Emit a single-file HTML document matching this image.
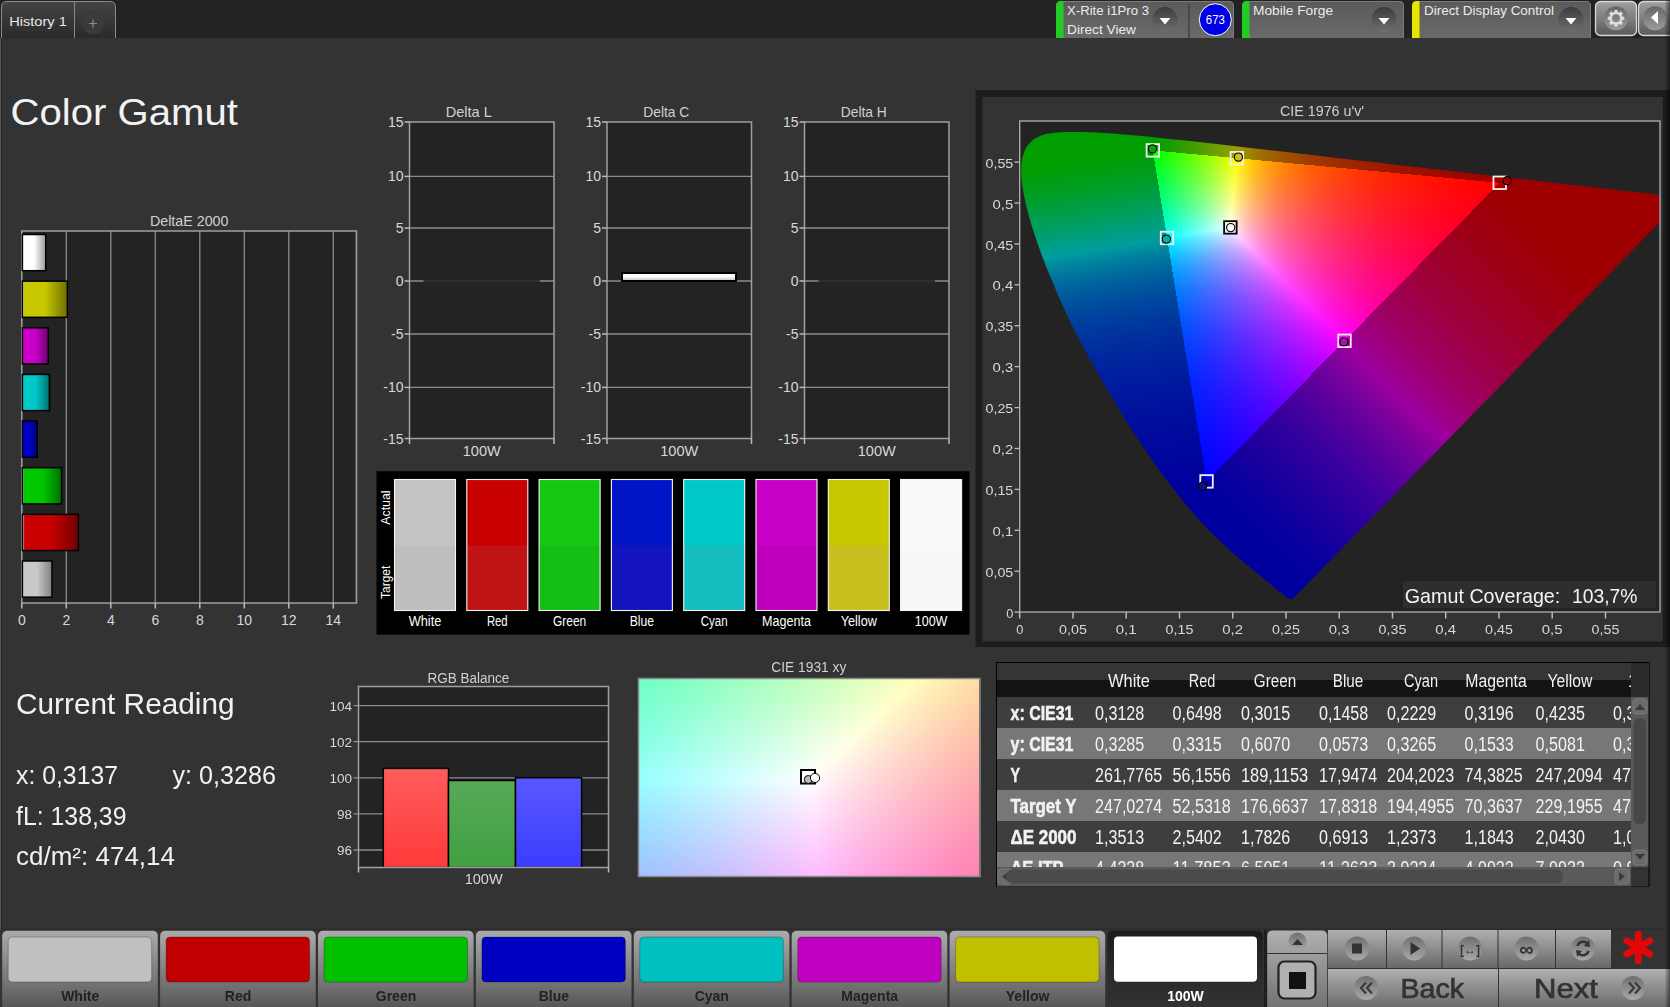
<!DOCTYPE html>
<html><head><meta charset="utf-8"><style>
html,body{margin:0;padding:0;background:#333;width:1670px;height:1007px;overflow:hidden;}
svg{position:absolute;left:0;top:0;font-family:"Liberation Sans", sans-serif;}
canvas{position:absolute;}
</style></head><body>
<svg width="1670" height="1007" viewBox="0 0 1670 1007"><defs>
<linearGradient id="gTab" x1="0" y1="0" x2="0" y2="1"><stop offset="0" stop-color="#444"/><stop offset="1" stop-color="#2a2a2a"/></linearGradient>
<linearGradient id="gDev" x1="0" y1="0" x2="0" y2="1"><stop offset="0" stop-color="#5a5a5a"/><stop offset="1" stop-color="#6a6a6a"/></linearGradient>
<linearGradient id="gDD" x1="0" y1="0" x2="0" y2="1"><stop offset="0" stop-color="#3c3c3c"/><stop offset="1" stop-color="#6e6e6e"/></linearGradient>
<linearGradient id="gDDl" x1="0" y1="0" x2="0" y2="1"><stop offset="0" stop-color="#707070"/><stop offset="1" stop-color="#a8a8a8"/></linearGradient>
<linearGradient id="gBtn" x1="0" y1="0" x2="0" y2="1"><stop offset="0" stop-color="#ababab"/><stop offset="0.72" stop-color="#6e6e6e"/><stop offset="0.95" stop-color="#575757"/></linearGradient>
<linearGradient id="gCtl" x1="0" y1="0" x2="0" y2="1"><stop offset="0" stop-color="#b0b0b0"/><stop offset="1" stop-color="#686868"/></linearGradient>
<linearGradient id="gSel" x1="0" y1="0" x2="0" y2="1"><stop offset="0" stop-color="#1c1c1c"/><stop offset="0.5" stop-color="#2a2a2a"/><stop offset="1" stop-color="#333"/></linearGradient>
<linearGradient id="gDC" x1="0" y1="0" x2="0" y2="1"><stop offset="0" stop-color="#fff"/><stop offset="0.5" stop-color="#fafafa"/><stop offset="1" stop-color="#b8b8b8"/></linearGradient>
<linearGradient id="gGB" x1="0" y1="0" x2="0" y2="1"><stop offset="0" stop-color="#a0a0a0"/><stop offset="1" stop-color="#5a5a5a"/></linearGradient>
<linearGradient id="gGC" x1="0" y1="0" x2="0" y2="1"><stop offset="0" stop-color="#666"/><stop offset="1" stop-color="#9c9c9c"/></linearGradient>
<linearGradient id="gRS" x1="0" y1="0" x2="1" y2="0"><stop offset="0" stop-color="#000" stop-opacity="0"/><stop offset="1" stop-color="#000" stop-opacity="0.5"/></linearGradient>
<linearGradient id="gBar0" x1="0" y1="0" x2="1" y2="0"><stop offset="0" stop-color="#fff" stop-opacity="0.9"/><stop offset="0.04" stop-color="#ffffff"/><stop offset="0.5" stop-color="#ffffff"/><stop offset="1" stop-color="#9a9a9a"/></linearGradient><linearGradient id="gBar1" x1="0" y1="0" x2="1" y2="0"><stop offset="0" stop-color="#fff" stop-opacity="0.9"/><stop offset="0.04" stop-color="#c8c800"/><stop offset="0.5" stop-color="#c8c800"/><stop offset="1" stop-color="#6e6e00"/></linearGradient><linearGradient id="gBar2" x1="0" y1="0" x2="1" y2="0"><stop offset="0" stop-color="#fff" stop-opacity="0.9"/><stop offset="0.04" stop-color="#c800c8"/><stop offset="0.5" stop-color="#c800c8"/><stop offset="1" stop-color="#700070"/></linearGradient><linearGradient id="gBar3" x1="0" y1="0" x2="1" y2="0"><stop offset="0" stop-color="#fff" stop-opacity="0.9"/><stop offset="0.04" stop-color="#00c8c8"/><stop offset="0.5" stop-color="#00c8c8"/><stop offset="1" stop-color="#007070"/></linearGradient><linearGradient id="gBar4" x1="0" y1="0" x2="1" y2="0"><stop offset="0" stop-color="#fff" stop-opacity="0.9"/><stop offset="0.04" stop-color="#0000c8"/><stop offset="0.5" stop-color="#0000c8"/><stop offset="1" stop-color="#000070"/></linearGradient><linearGradient id="gBar5" x1="0" y1="0" x2="1" y2="0"><stop offset="0" stop-color="#fff" stop-opacity="0.9"/><stop offset="0.04" stop-color="#00c800"/><stop offset="0.5" stop-color="#00c800"/><stop offset="1" stop-color="#007000"/></linearGradient><linearGradient id="gBar6" x1="0" y1="0" x2="1" y2="0"><stop offset="0" stop-color="#fff" stop-opacity="0.9"/><stop offset="0.04" stop-color="#c80000"/><stop offset="0.5" stop-color="#c80000"/><stop offset="1" stop-color="#700000"/></linearGradient><linearGradient id="gBar7" x1="0" y1="0" x2="1" y2="0"><stop offset="0" stop-color="#fff" stop-opacity="0.9"/><stop offset="0.04" stop-color="#c8c8c8"/><stop offset="0.5" stop-color="#c8c8c8"/><stop offset="1" stop-color="#808080"/></linearGradient></defs><rect x="0" y="0" width="1670" height="38" fill="#222"/><rect x="0" y="38" width="1" height="892" fill="#555"/><rect x="1" y="38" width="1" height="892" fill="#262626"/><path d="M1.5,38 V7 Q1.5,1.5 7,1.5 H110 Q115.5,1.5 115.5,7 V38" fill="url(#gTab)" stroke="#8a8a8a" stroke-width="1"/><line x1="74.5" y1="2" x2="74.5" y2="38" stroke="#8a8a8a" stroke-width="1"/><circle cx="93" cy="22" r="12" fill="#3a3a3a"/><path d="M89,23.5 H97 M93,19.5 V27.5" stroke="#8a8a8a" stroke-width="1.2"/><text x="9.2" y="25.8" font-size="13.6" fill="#e8e8e8" textLength="57.7" lengthAdjust="spacingAndGlyphs">History 1</text><path d="M1056,38 V6 Q1056,1 1061,1 H1229 Q1234,1 1234,6 V38 Z" fill="url(#gDev)"/><path d="M1062,1.5 H1229 Q1233.5,1.5 1233.5,6 V38" fill="none" stroke="#7a7a7a" stroke-width="1"/><path d="M1056,38 V6 Q1056,1 1061,1 H1063.5 V38 Z" fill="#22cc22"/><circle cx="1165" cy="19.5" r="12.5" fill="url(#gDD)"/><path d="M1159.5,18 H1170.5 L1165,24.5 Z" fill="#fff"/><text x="1067" y="15" font-size="12" fill="#ececec" textLength="82" lengthAdjust="spacingAndGlyphs">X-Rite i1Pro 3</text><text x="1067" y="33.5" font-size="12" fill="#ececec" textLength="69" lengthAdjust="spacingAndGlyphs">Direct View</text><line x1="1189" y1="4" x2="1189" y2="38" stroke="#3a3a3a" stroke-width="1.2"/><circle cx="1215.3" cy="19.7" r="16" fill="#0000e6" stroke="#fff" stroke-width="1"/><text x="1215.3" y="24" font-size="12" fill="#fff" text-anchor="middle" textLength="19" lengthAdjust="spacingAndGlyphs">673</text><path d="M1242,38 V6 Q1242,1 1247,1 H1399 Q1404,1 1404,6 V38 Z" fill="url(#gDev)"/><path d="M1248,1.5 H1399 Q1403.5,1.5 1403.5,6 V38" fill="none" stroke="#7a7a7a" stroke-width="1"/><path d="M1242,38 V6 Q1242,1 1247,1 H1249.5 V38 Z" fill="#22cc22"/><circle cx="1384" cy="19.5" r="12.5" fill="url(#gDD)"/><path d="M1378.5,18 H1389.5 L1384,24.5 Z" fill="#fff"/><text x="1253" y="15" font-size="12" fill="#ececec" textLength="80" lengthAdjust="spacingAndGlyphs">Mobile Forge</text><path d="M1412,38 V6 Q1412,1 1417,1 H1586 Q1591,1 1591,6 V38 Z" fill="url(#gDev)"/><path d="M1418,1.5 H1586 Q1590.5,1.5 1590.5,6 V38" fill="none" stroke="#7a7a7a" stroke-width="1"/><path d="M1412,38 V6 Q1412,1 1417,1 H1419.5 V38 Z" fill="#e6e600"/><circle cx="1571" cy="19.5" r="12.5" fill="url(#gDD)"/><path d="M1565.5,18 H1576.5 L1571,24.5 Z" fill="#fff"/><text x="1424" y="15" font-size="12" fill="#ececec" textLength="130" lengthAdjust="spacingAndGlyphs">Direct Display Control</text><rect x="1595.5" y="1.5" width="41" height="34" rx="5" fill="url(#gGB)" stroke="#d8d8d8" stroke-width="1.3"/><circle cx="1616" cy="18.3" r="12" fill="url(#gGC)"/><g transform="translate(1616,18.3)"><rect x="-1.6" y="-8.3" width="3.2" height="4" fill="#ddd" transform="rotate(0)"/><rect x="-1.6" y="-8.3" width="3.2" height="4" fill="#ddd" transform="rotate(45)"/><rect x="-1.6" y="-8.3" width="3.2" height="4" fill="#ddd" transform="rotate(90)"/><rect x="-1.6" y="-8.3" width="3.2" height="4" fill="#ddd" transform="rotate(135)"/><rect x="-1.6" y="-8.3" width="3.2" height="4" fill="#ddd" transform="rotate(180)"/><rect x="-1.6" y="-8.3" width="3.2" height="4" fill="#ddd" transform="rotate(225)"/><rect x="-1.6" y="-8.3" width="3.2" height="4" fill="#ddd" transform="rotate(270)"/><rect x="-1.6" y="-8.3" width="3.2" height="4" fill="#ddd" transform="rotate(315)"/><circle r="5.3" fill="none" stroke="#ddd" stroke-width="2.6"/></g><rect x="1638.5" y="1.5" width="40" height="34" rx="5" fill="url(#gGB)" stroke="#d8d8d8" stroke-width="1.3"/><circle cx="1655" cy="18.3" r="12" fill="url(#gGC)"/><path d="M1651,17.5 L1658,11 V24 Z" fill="#fff"/><rect x="1664.5" y="0" width="5.5" height="38" fill="url(#gRS)"/><text x="10.5" y="125.4" font-size="37.7" fill="#f2f2f2" textLength="227.5" lengthAdjust="spacingAndGlyphs">Color Gamut</text><rect x="21.8" y="231" width="333.2" height="372" fill="#232323"/><line x1="66.3" y1="231" x2="66.3" y2="603" stroke="#8c8c8c" stroke-width="1.3"/><line x1="110.8" y1="231" x2="110.8" y2="603" stroke="#8c8c8c" stroke-width="1.3"/><line x1="155.3" y1="231" x2="155.3" y2="603" stroke="#8c8c8c" stroke-width="1.3"/><line x1="199.8" y1="231" x2="199.8" y2="603" stroke="#8c8c8c" stroke-width="1.3"/><line x1="244.3" y1="231" x2="244.3" y2="603" stroke="#8c8c8c" stroke-width="1.3"/><line x1="288.8" y1="231" x2="288.8" y2="603" stroke="#8c8c8c" stroke-width="1.3"/><line x1="333.3" y1="231" x2="333.3" y2="603" stroke="#8c8c8c" stroke-width="1.3"/><rect x="21.8" y="231" width="334.7" height="372" fill="none" stroke="#a0a0a0" stroke-width="1.5"/><line x1="21.8" y1="603" x2="21.8" y2="608.5" stroke="#bbb" stroke-width="1.5"/><text x="21.8" y="624.5" font-size="14" fill="#d8d8d8" text-anchor="middle">0</text><line x1="66.3" y1="603" x2="66.3" y2="608.5" stroke="#bbb" stroke-width="1.5"/><text x="66.3" y="624.5" font-size="14" fill="#d8d8d8" text-anchor="middle">2</text><line x1="110.8" y1="603" x2="110.8" y2="608.5" stroke="#bbb" stroke-width="1.5"/><text x="110.8" y="624.5" font-size="14" fill="#d8d8d8" text-anchor="middle">4</text><line x1="155.3" y1="603" x2="155.3" y2="608.5" stroke="#bbb" stroke-width="1.5"/><text x="155.3" y="624.5" font-size="14" fill="#d8d8d8" text-anchor="middle">6</text><line x1="199.8" y1="603" x2="199.8" y2="608.5" stroke="#bbb" stroke-width="1.5"/><text x="199.8" y="624.5" font-size="14" fill="#d8d8d8" text-anchor="middle">8</text><line x1="244.3" y1="603" x2="244.3" y2="608.5" stroke="#bbb" stroke-width="1.5"/><text x="244.3" y="624.5" font-size="14" fill="#d8d8d8" text-anchor="middle">10</text><line x1="288.8" y1="603" x2="288.8" y2="608.5" stroke="#bbb" stroke-width="1.5"/><text x="288.8" y="624.5" font-size="14" fill="#d8d8d8" text-anchor="middle">12</text><line x1="333.3" y1="603" x2="333.3" y2="608.5" stroke="#bbb" stroke-width="1.5"/><text x="333.3" y="624.5" font-size="14" fill="#d8d8d8" text-anchor="middle">14</text><text x="189.2" y="226.2" font-size="14" fill="#d0d0d0" text-anchor="middle" textLength="78.5" lengthAdjust="spacingAndGlyphs">DeltaE 2000</text><rect x="22.400000000000002" y="234.5" width="23.3075" height="36.2" fill="url(#gBar0)" stroke="#000" stroke-width="1.5"/><rect x="22.400000000000002" y="281.14" width="44.95675000000001" height="36.2" fill="url(#gBar1)" stroke="#000" stroke-width="1.5"/><rect x="22.400000000000002" y="327.78" width="25.843999999999998" height="36.2" fill="url(#gBar2)" stroke="#000" stroke-width="1.5"/><rect x="22.400000000000002" y="374.42" width="27.02325" height="36.2" fill="url(#gBar3)" stroke="#000" stroke-width="1.5"/><rect x="22.400000000000002" y="421.06" width="14.874749999999999" height="36.2" fill="url(#gBar4)" stroke="#000" stroke-width="1.5"/><rect x="22.400000000000002" y="467.7" width="39.171749999999996" height="36.2" fill="url(#gBar5)" stroke="#000" stroke-width="1.5"/><rect x="22.400000000000002" y="514.34" width="56.015" height="36.2" fill="url(#gBar6)" stroke="#000" stroke-width="1.5"/><rect x="22.400000000000002" y="560.98" width="29.55975" height="36.2" fill="url(#gBar7)" stroke="#000" stroke-width="1.5"/><rect x="409.5" y="122" width="144.5" height="316.5" fill="#232323"/><line x1="409.5" y1="176.4" x2="554" y2="176.4" stroke="#8c8c8c" stroke-width="1.3"/><line x1="409.5" y1="228" x2="554" y2="228" stroke="#8c8c8c" stroke-width="1.3"/><line x1="409.5" y1="281" x2="554" y2="281" stroke="#8c8c8c" stroke-width="1.3"/><line x1="409.5" y1="334" x2="554" y2="334" stroke="#8c8c8c" stroke-width="1.3"/><line x1="409.5" y1="387.4" x2="554" y2="387.4" stroke="#8c8c8c" stroke-width="1.3"/><rect x="409.5" y="122" width="144.5" height="316.5" fill="none" stroke="#a0a0a0" stroke-width="1.5"/><line x1="404.5" y1="122" x2="409.5" y2="122" stroke="#bbb" stroke-width="1.5"/><text x="403.5" y="127" font-size="14" fill="#d8d8d8" text-anchor="end">15</text><line x1="404.5" y1="176.4" x2="409.5" y2="176.4" stroke="#bbb" stroke-width="1.5"/><text x="403.5" y="181.4" font-size="14" fill="#d8d8d8" text-anchor="end">10</text><line x1="404.5" y1="228" x2="409.5" y2="228" stroke="#bbb" stroke-width="1.5"/><text x="403.5" y="233" font-size="14" fill="#d8d8d8" text-anchor="end">5</text><line x1="404.5" y1="281" x2="409.5" y2="281" stroke="#bbb" stroke-width="1.5"/><text x="403.5" y="286" font-size="14" fill="#d8d8d8" text-anchor="end">0</text><line x1="404.5" y1="334" x2="409.5" y2="334" stroke="#bbb" stroke-width="1.5"/><text x="403.5" y="339" font-size="14" fill="#d8d8d8" text-anchor="end">-5</text><line x1="404.5" y1="387.4" x2="409.5" y2="387.4" stroke="#bbb" stroke-width="1.5"/><text x="403.5" y="392.4" font-size="14" fill="#d8d8d8" text-anchor="end">-10</text><line x1="404.5" y1="438.5" x2="409.5" y2="438.5" stroke="#bbb" stroke-width="1.5"/><text x="403.5" y="443.5" font-size="14" fill="#d8d8d8" text-anchor="end">-15</text><line x1="409.5" y1="438.5" x2="409.5" y2="444.0" stroke="#bbb" stroke-width="1.5"/><line x1="554" y1="438.5" x2="554" y2="444.0" stroke="#bbb" stroke-width="1.5"/><text x="481.75" y="455.5" font-size="14.5" fill="#d8d8d8" text-anchor="middle" textLength="38" lengthAdjust="spacingAndGlyphs">100W</text><text x="468.75" y="117.3" font-size="14.5" fill="#d0d0d0" text-anchor="middle" textLength="46" lengthAdjust="spacingAndGlyphs">Delta L</text><line x1="423.5" y1="281" x2="540" y2="281" stroke="#1a1a1a" stroke-width="1.3"/><rect x="607" y="122" width="144.5" height="316.5" fill="#232323"/><line x1="607" y1="176.4" x2="751.5" y2="176.4" stroke="#8c8c8c" stroke-width="1.3"/><line x1="607" y1="228" x2="751.5" y2="228" stroke="#8c8c8c" stroke-width="1.3"/><line x1="607" y1="281" x2="751.5" y2="281" stroke="#8c8c8c" stroke-width="1.3"/><line x1="607" y1="334" x2="751.5" y2="334" stroke="#8c8c8c" stroke-width="1.3"/><line x1="607" y1="387.4" x2="751.5" y2="387.4" stroke="#8c8c8c" stroke-width="1.3"/><rect x="607" y="122" width="144.5" height="316.5" fill="none" stroke="#a0a0a0" stroke-width="1.5"/><line x1="602" y1="122" x2="607" y2="122" stroke="#bbb" stroke-width="1.5"/><text x="601" y="127" font-size="14" fill="#d8d8d8" text-anchor="end">15</text><line x1="602" y1="176.4" x2="607" y2="176.4" stroke="#bbb" stroke-width="1.5"/><text x="601" y="181.4" font-size="14" fill="#d8d8d8" text-anchor="end">10</text><line x1="602" y1="228" x2="607" y2="228" stroke="#bbb" stroke-width="1.5"/><text x="601" y="233" font-size="14" fill="#d8d8d8" text-anchor="end">5</text><line x1="602" y1="281" x2="607" y2="281" stroke="#bbb" stroke-width="1.5"/><text x="601" y="286" font-size="14" fill="#d8d8d8" text-anchor="end">0</text><line x1="602" y1="334" x2="607" y2="334" stroke="#bbb" stroke-width="1.5"/><text x="601" y="339" font-size="14" fill="#d8d8d8" text-anchor="end">-5</text><line x1="602" y1="387.4" x2="607" y2="387.4" stroke="#bbb" stroke-width="1.5"/><text x="601" y="392.4" font-size="14" fill="#d8d8d8" text-anchor="end">-10</text><line x1="602" y1="438.5" x2="607" y2="438.5" stroke="#bbb" stroke-width="1.5"/><text x="601" y="443.5" font-size="14" fill="#d8d8d8" text-anchor="end">-15</text><line x1="607" y1="438.5" x2="607" y2="444.0" stroke="#bbb" stroke-width="1.5"/><line x1="751.5" y1="438.5" x2="751.5" y2="444.0" stroke="#bbb" stroke-width="1.5"/><text x="679.25" y="455.5" font-size="14.5" fill="#d8d8d8" text-anchor="middle" textLength="38" lengthAdjust="spacingAndGlyphs">100W</text><text x="666.25" y="117.3" font-size="14.5" fill="#d0d0d0" text-anchor="middle" textLength="46" lengthAdjust="spacingAndGlyphs">Delta C</text><rect x="622" y="273" width="114" height="8" fill="url(#gDC)" stroke="#000" stroke-width="2"/><rect x="804.5" y="122" width="144.5" height="316.5" fill="#232323"/><line x1="804.5" y1="176.4" x2="949" y2="176.4" stroke="#8c8c8c" stroke-width="1.3"/><line x1="804.5" y1="228" x2="949" y2="228" stroke="#8c8c8c" stroke-width="1.3"/><line x1="804.5" y1="281" x2="949" y2="281" stroke="#8c8c8c" stroke-width="1.3"/><line x1="804.5" y1="334" x2="949" y2="334" stroke="#8c8c8c" stroke-width="1.3"/><line x1="804.5" y1="387.4" x2="949" y2="387.4" stroke="#8c8c8c" stroke-width="1.3"/><rect x="804.5" y="122" width="144.5" height="316.5" fill="none" stroke="#a0a0a0" stroke-width="1.5"/><line x1="799.5" y1="122" x2="804.5" y2="122" stroke="#bbb" stroke-width="1.5"/><text x="798.5" y="127" font-size="14" fill="#d8d8d8" text-anchor="end">15</text><line x1="799.5" y1="176.4" x2="804.5" y2="176.4" stroke="#bbb" stroke-width="1.5"/><text x="798.5" y="181.4" font-size="14" fill="#d8d8d8" text-anchor="end">10</text><line x1="799.5" y1="228" x2="804.5" y2="228" stroke="#bbb" stroke-width="1.5"/><text x="798.5" y="233" font-size="14" fill="#d8d8d8" text-anchor="end">5</text><line x1="799.5" y1="281" x2="804.5" y2="281" stroke="#bbb" stroke-width="1.5"/><text x="798.5" y="286" font-size="14" fill="#d8d8d8" text-anchor="end">0</text><line x1="799.5" y1="334" x2="804.5" y2="334" stroke="#bbb" stroke-width="1.5"/><text x="798.5" y="339" font-size="14" fill="#d8d8d8" text-anchor="end">-5</text><line x1="799.5" y1="387.4" x2="804.5" y2="387.4" stroke="#bbb" stroke-width="1.5"/><text x="798.5" y="392.4" font-size="14" fill="#d8d8d8" text-anchor="end">-10</text><line x1="799.5" y1="438.5" x2="804.5" y2="438.5" stroke="#bbb" stroke-width="1.5"/><text x="798.5" y="443.5" font-size="14" fill="#d8d8d8" text-anchor="end">-15</text><line x1="804.5" y1="438.5" x2="804.5" y2="444.0" stroke="#bbb" stroke-width="1.5"/><line x1="949" y1="438.5" x2="949" y2="444.0" stroke="#bbb" stroke-width="1.5"/><text x="876.75" y="455.5" font-size="14.5" fill="#d8d8d8" text-anchor="middle" textLength="38" lengthAdjust="spacingAndGlyphs">100W</text><text x="863.75" y="117.3" font-size="14.5" fill="#d0d0d0" text-anchor="middle" textLength="46" lengthAdjust="spacingAndGlyphs">Delta H</text><line x1="818.5" y1="281" x2="935" y2="281" stroke="#1a1a1a" stroke-width="1.3"/><rect x="376.5" y="471.2" width="593" height="163.4" fill="#000"/><rect x="394.5" y="479.5" width="61" height="131" fill="#bebebe"/><rect x="394.5" y="479.5" width="61" height="66" fill="#c4c4c4"/><rect x="394.5" y="479.5" width="61" height="131" fill="none" stroke="#f4f4f4" stroke-width="1.1"/><text x="425.0" y="626.2" font-size="14" fill="#ffffff" text-anchor="middle" textLength="32.6" lengthAdjust="spacingAndGlyphs">White</text><rect x="466.8" y="479.5" width="61" height="131" fill="#c01414"/><rect x="466.8" y="479.5" width="61" height="66" fill="#c80000"/><rect x="466.8" y="479.5" width="61" height="131" fill="none" stroke="#f4f4f4" stroke-width="1.1"/><text x="497.3" y="626.2" font-size="14" fill="#ffffff" text-anchor="middle" textLength="20.7" lengthAdjust="spacingAndGlyphs">Red</text><rect x="539.1" y="479.5" width="61" height="131" fill="#14be14"/><rect x="539.1" y="479.5" width="61" height="66" fill="#14c814"/><rect x="539.1" y="479.5" width="61" height="131" fill="none" stroke="#f4f4f4" stroke-width="1.1"/><text x="569.6" y="626.2" font-size="14" fill="#ffffff" text-anchor="middle" textLength="33.3" lengthAdjust="spacingAndGlyphs">Green</text><rect x="611.4" y="479.5" width="61" height="131" fill="#1414be"/><rect x="611.4" y="479.5" width="61" height="66" fill="#0014c8"/><rect x="611.4" y="479.5" width="61" height="131" fill="none" stroke="#f4f4f4" stroke-width="1.1"/><text x="641.9" y="626.2" font-size="14" fill="#ffffff" text-anchor="middle" textLength="24.3" lengthAdjust="spacingAndGlyphs">Blue</text><rect x="683.7" y="479.5" width="61" height="131" fill="#14bebe"/><rect x="683.7" y="479.5" width="61" height="66" fill="#00c8c8"/><rect x="683.7" y="479.5" width="61" height="131" fill="none" stroke="#f4f4f4" stroke-width="1.1"/><text x="714.2" y="626.2" font-size="14" fill="#ffffff" text-anchor="middle" textLength="26.8" lengthAdjust="spacingAndGlyphs">Cyan</text><rect x="756.0" y="479.5" width="61" height="131" fill="#be00be"/><rect x="756.0" y="479.5" width="61" height="66" fill="#c800c8"/><rect x="756.0" y="479.5" width="61" height="131" fill="none" stroke="#f4f4f4" stroke-width="1.1"/><text x="786.5" y="626.2" font-size="14" fill="#ffffff" text-anchor="middle" textLength="48.9" lengthAdjust="spacingAndGlyphs">Magenta</text><rect x="828.3" y="479.5" width="61" height="131" fill="#c8be1e"/><rect x="828.3" y="479.5" width="61" height="66" fill="#c8c800"/><rect x="828.3" y="479.5" width="61" height="131" fill="none" stroke="#f4f4f4" stroke-width="1.1"/><text x="858.8" y="626.2" font-size="14" fill="#ffffff" text-anchor="middle" textLength="36.2" lengthAdjust="spacingAndGlyphs">Yellow</text><rect x="900.5999999999999" y="479.5" width="61" height="131" fill="#f8f8f8"/><rect x="900.5999999999999" y="479.5" width="61" height="66" fill="#fafafa"/><rect x="900.5999999999999" y="479.5" width="61" height="131" fill="none" stroke="#f4f4f4" stroke-width="1.1"/><text x="931.0999999999999" y="626.2" font-size="14" fill="#ffffff" text-anchor="middle" textLength="32.6" lengthAdjust="spacingAndGlyphs">100W</text><text x="0" y="0" font-size="13" fill="#fff" text-anchor="middle" textLength="34.4" lengthAdjust="spacingAndGlyphs" transform="translate(390,507.6) rotate(-90)">Actual</text><text x="0" y="0" font-size="13" fill="#fff" text-anchor="middle" textLength="33.3" lengthAdjust="spacingAndGlyphs" transform="translate(390,582.3) rotate(-90)">Target</text><rect x="975.5" y="90" width="700" height="557" fill="#1c1c1c"/><rect x="982.5" y="97" width="680.3" height="544.5" fill="#333"/><rect x="1020" y="121" width="640" height="491" fill="#232323"/><clipPath id="hs"><path d="M1293.2,598.5 L1292.8,598.8 L1292.0,599.1 L1290.8,599.1 L1288.3,598.3 L1285.5,596.4 L1281.8,593.6 L1276.4,589.2 L1269.6,583.5 L1261.1,576.4 L1249.8,567.1 L1236.3,555.8 L1219.6,540.8 L1199.6,520.5 L1173.1,488.6 L1141.8,444.9 L1107.9,390.5 L1075.2,331.7 L1049.7,275.3 L1032.4,227.7 L1023.4,192.3 L1021.2,167.7 L1024.6,150.8 L1032.8,140.0 L1044.3,134.5 L1058.0,132.5 L1073.0,132.0 L1088.2,132.2 L1104.1,132.9 L1121.2,134.2 L1139.7,135.9 L1160.1,137.9 L1182.8,140.3 L1207.8,143.1 L1235.5,146.2 L1265.9,149.7 L1299.1,153.5 L1334.9,157.7 L1372.8,162.0 L1411.7,166.5 L1449.4,170.8 L1486.1,175.0 L1519.4,178.8 L1548.8,182.2 L1573.8,185.1 L1594.7,187.5 L1612.4,189.5 L1627.7,191.3 L1640.6,192.8 L1659.2,194.9 L1670.3,196.2 L1683.6,197.7 Z"/></clipPath><g id="fb76" clip-path="url(#hs)" shape-rendering="crispEdges"><rect x="1020" y="121" width="144" height="8" fill="#009900"/><rect x="1164" y="121" width="8" height="8" fill="#119900"/><rect x="1172" y="121" width="8" height="8" fill="#229900"/><rect x="1180" y="121" width="16" height="8" fill="#339900"/><rect x="1196" y="121" width="8" height="8" fill="#449900"/><rect x="1204" y="121" width="8" height="8" fill="#559900"/><rect x="1212" y="121" width="8" height="8" fill="#669900"/><rect x="1220" y="121" width="8" height="8" fill="#779900"/><rect x="1228" y="121" width="8" height="8" fill="#889900"/><rect x="1236" y="121" width="8" height="8" fill="#999900"/><rect x="1244" y="121" width="8" height="8" fill="#998800"/><rect x="1252" y="121" width="16" height="8" fill="#997700"/><rect x="1268" y="121" width="8" height="8" fill="#996600"/><rect x="1276" y="121" width="16" height="8" fill="#995500"/><rect x="1292" y="121" width="24" height="8" fill="#994400"/><rect x="1316" y="121" width="32" height="8" fill="#993300"/><rect x="1348" y="121" width="40" height="8" fill="#992200"/><rect x="1388" y="121" width="64" height="8" fill="#991100"/><rect x="1452" y="121" width="208" height="8" fill="#990000"/><rect x="1020" y="129" width="144" height="8" fill="#009900"/><rect x="1164" y="129" width="8" height="8" fill="#119900"/><rect x="1172" y="129" width="8" height="8" fill="#229900"/><rect x="1180" y="129" width="16" height="8" fill="#339900"/><rect x="1196" y="129" width="8" height="8" fill="#449900"/><rect x="1204" y="129" width="8" height="8" fill="#559900"/><rect x="1212" y="129" width="8" height="8" fill="#669900"/><rect x="1220" y="129" width="8" height="8" fill="#779900"/><rect x="1228" y="129" width="8" height="8" fill="#889900"/><rect x="1236" y="129" width="8" height="8" fill="#999900"/><rect x="1244" y="129" width="8" height="8" fill="#998800"/><rect x="1252" y="129" width="16" height="8" fill="#997700"/><rect x="1268" y="129" width="8" height="8" fill="#996600"/><rect x="1276" y="129" width="16" height="8" fill="#995500"/><rect x="1292" y="129" width="24" height="8" fill="#994400"/><rect x="1316" y="129" width="32" height="8" fill="#993300"/><rect x="1348" y="129" width="40" height="8" fill="#992200"/><rect x="1388" y="129" width="64" height="8" fill="#991100"/><rect x="1452" y="129" width="208" height="8" fill="#990000"/><rect x="1020" y="137" width="136" height="8" fill="#009900"/><rect x="1156" y="137" width="16" height="8" fill="#119900"/><rect x="1172" y="137" width="8" height="8" fill="#229900"/><rect x="1180" y="137" width="8" height="8" fill="#339900"/><rect x="1188" y="137" width="16" height="8" fill="#449900"/><rect x="1204" y="137" width="8" height="8" fill="#559900"/><rect x="1212" y="137" width="8" height="8" fill="#669900"/><rect x="1220" y="137" width="8" height="8" fill="#779900"/><rect x="1228" y="137" width="8" height="8" fill="#889900"/><rect x="1236" y="137" width="8" height="8" fill="#999900"/><rect x="1244" y="137" width="8" height="8" fill="#998800"/><rect x="1252" y="137" width="8" height="8" fill="#997700"/><rect x="1260" y="137" width="16" height="8" fill="#996600"/><rect x="1276" y="137" width="16" height="8" fill="#995500"/><rect x="1292" y="137" width="24" height="8" fill="#994400"/><rect x="1316" y="137" width="24" height="8" fill="#993300"/><rect x="1340" y="137" width="48" height="8" fill="#992200"/><rect x="1388" y="137" width="64" height="8" fill="#991100"/><rect x="1452" y="137" width="208" height="8" fill="#990000"/><rect x="1020" y="145" width="136" height="8" fill="#009900"/><rect x="1156" y="145" width="16" height="8" fill="#119900"/><rect x="1172" y="145" width="8" height="8" fill="#229900"/><rect x="1180" y="145" width="8" height="8" fill="#339900"/><rect x="1188" y="145" width="8" height="8" fill="#449900"/><rect x="1196" y="145" width="16" height="8" fill="#559900"/><rect x="1212" y="145" width="8" height="8" fill="#669900"/><rect x="1220" y="145" width="8" height="8" fill="#779900"/><rect x="1228" y="145" width="8" height="8" fill="#889900"/><rect x="1236" y="145" width="8" height="8" fill="#999900"/><rect x="1244" y="145" width="8" height="8" fill="#998800"/><rect x="1252" y="145" width="8" height="8" fill="#997700"/><rect x="1260" y="145" width="16" height="8" fill="#996600"/><rect x="1276" y="145" width="16" height="8" fill="#995500"/><rect x="1292" y="145" width="24" height="8" fill="#994400"/><rect x="1316" y="145" width="24" height="8" fill="#993300"/><rect x="1340" y="145" width="48" height="8" fill="#992200"/><rect x="1388" y="145" width="64" height="8" fill="#991100"/><rect x="1452" y="145" width="208" height="8" fill="#990000"/><rect x="1020" y="153" width="128" height="8" fill="#009900"/><rect x="1148" y="153" width="8" height="8" fill="#009911"/><rect x="1156" y="153" width="8" height="8" fill="#11ff11"/><rect x="1164" y="153" width="8" height="8" fill="#22ff11"/><rect x="1172" y="153" width="8" height="8" fill="#33ff11"/><rect x="1180" y="153" width="8" height="8" fill="#55ff11"/><rect x="1188" y="153" width="8" height="8" fill="#66ff00"/><rect x="1196" y="153" width="8" height="8" fill="#77ff00"/><rect x="1204" y="153" width="8" height="8" fill="#99ff00"/><rect x="1212" y="153" width="8" height="8" fill="#aaff00"/><rect x="1220" y="153" width="8" height="8" fill="#889900"/><rect x="1228" y="153" width="16" height="8" fill="#999900"/><rect x="1244" y="153" width="8" height="8" fill="#998800"/><rect x="1252" y="153" width="8" height="8" fill="#997700"/><rect x="1260" y="153" width="16" height="8" fill="#996600"/><rect x="1276" y="153" width="16" height="8" fill="#995500"/><rect x="1292" y="153" width="24" height="8" fill="#994400"/><rect x="1316" y="153" width="24" height="8" fill="#993300"/><rect x="1340" y="153" width="48" height="8" fill="#992200"/><rect x="1388" y="153" width="64" height="8" fill="#991100"/><rect x="1452" y="153" width="208" height="8" fill="#990000"/><rect x="1020" y="161" width="80" height="8" fill="#009900"/><rect x="1100" y="161" width="56" height="8" fill="#009911"/><rect x="1156" y="161" width="8" height="8" fill="#11ff22"/><rect x="1164" y="161" width="8" height="8" fill="#22ff22"/><rect x="1172" y="161" width="8" height="8" fill="#33ff22"/><rect x="1180" y="161" width="8" height="8" fill="#44ff22"/><rect x="1188" y="161" width="8" height="8" fill="#66ff22"/><rect x="1196" y="161" width="8" height="8" fill="#77ff22"/><rect x="1204" y="161" width="8" height="8" fill="#99ff11"/><rect x="1212" y="161" width="8" height="8" fill="#aaff11"/><rect x="1220" y="161" width="8" height="8" fill="#ccff11"/><rect x="1228" y="161" width="8" height="8" fill="#eeff11"/><rect x="1236" y="161" width="8" height="8" fill="#ffee11"/><rect x="1244" y="161" width="8" height="8" fill="#ffdd11"/><rect x="1252" y="161" width="8" height="8" fill="#ffbb11"/><rect x="1260" y="161" width="8" height="8" fill="#ffaa11"/><rect x="1268" y="161" width="8" height="8" fill="#ff9900"/><rect x="1276" y="161" width="8" height="8" fill="#ff8800"/><rect x="1284" y="161" width="16" height="8" fill="#ff7700"/><rect x="1300" y="161" width="8" height="8" fill="#ff6600"/><rect x="1308" y="161" width="8" height="8" fill="#994400"/><rect x="1316" y="161" width="24" height="8" fill="#993300"/><rect x="1340" y="161" width="48" height="8" fill="#992200"/><rect x="1388" y="161" width="64" height="8" fill="#991100"/><rect x="1452" y="161" width="208" height="8" fill="#990000"/><rect x="1020" y="169" width="32" height="8" fill="#009900"/><rect x="1052" y="169" width="80" height="8" fill="#009911"/><rect x="1132" y="169" width="24" height="8" fill="#009922"/><rect x="1156" y="169" width="8" height="8" fill="#11ff33"/><rect x="1164" y="169" width="8" height="8" fill="#22ff33"/><rect x="1172" y="169" width="8" height="8" fill="#33ff33"/><rect x="1180" y="169" width="8" height="8" fill="#44ff33"/><rect x="1188" y="169" width="8" height="8" fill="#66ff33"/><rect x="1196" y="169" width="8" height="8" fill="#77ff33"/><rect x="1204" y="169" width="8" height="8" fill="#99ff33"/><rect x="1212" y="169" width="8" height="8" fill="#bbff33"/><rect x="1220" y="169" width="8" height="8" fill="#ccff33"/><rect x="1228" y="169" width="8" height="8" fill="#eeff33"/><rect x="1236" y="169" width="8" height="8" fill="#ffee22"/><rect x="1244" y="169" width="8" height="8" fill="#ffcc22"/><rect x="1252" y="169" width="8" height="8" fill="#ffbb22"/><rect x="1260" y="169" width="8" height="8" fill="#ffaa22"/><rect x="1268" y="169" width="8" height="8" fill="#ff9911"/><rect x="1276" y="169" width="8" height="8" fill="#ff8811"/><rect x="1284" y="169" width="16" height="8" fill="#ff7711"/><rect x="1300" y="169" width="8" height="8" fill="#ff6611"/><rect x="1308" y="169" width="24" height="8" fill="#ff5511"/><rect x="1332" y="169" width="16" height="8" fill="#ff4400"/><rect x="1348" y="169" width="32" height="8" fill="#ff3300"/><rect x="1380" y="169" width="16" height="8" fill="#ff2200"/><rect x="1396" y="169" width="56" height="8" fill="#991100"/><rect x="1452" y="169" width="208" height="8" fill="#990000"/><rect x="1020" y="177" width="56" height="8" fill="#009911"/><rect x="1076" y="177" width="72" height="8" fill="#009922"/><rect x="1148" y="177" width="8" height="8" fill="#009933"/><rect x="1156" y="177" width="8" height="8" fill="#00ff44"/><rect x="1164" y="177" width="8" height="8" fill="#22ff44"/><rect x="1172" y="177" width="8" height="8" fill="#33ff44"/><rect x="1180" y="177" width="8" height="8" fill="#44ff44"/><rect x="1188" y="177" width="8" height="8" fill="#66ff44"/><rect x="1196" y="177" width="8" height="8" fill="#77ff44"/><rect x="1204" y="177" width="8" height="8" fill="#99ff44"/><rect x="1212" y="177" width="8" height="8" fill="#bbff44"/><rect x="1220" y="177" width="8" height="8" fill="#ccff44"/><rect x="1228" y="177" width="8" height="8" fill="#eeff44"/><rect x="1236" y="177" width="8" height="8" fill="#ffee44"/><rect x="1244" y="177" width="8" height="8" fill="#ffcc33"/><rect x="1252" y="177" width="8" height="8" fill="#ffbb33"/><rect x="1260" y="177" width="8" height="8" fill="#ffaa33"/><rect x="1268" y="177" width="8" height="8" fill="#ff9922"/><rect x="1276" y="177" width="8" height="8" fill="#ff8822"/><rect x="1284" y="177" width="8" height="8" fill="#ff7722"/><rect x="1292" y="177" width="16" height="8" fill="#ff6622"/><rect x="1308" y="177" width="16" height="8" fill="#ff5511"/><rect x="1324" y="177" width="24" height="8" fill="#ff4411"/><rect x="1348" y="177" width="24" height="8" fill="#ff3311"/><rect x="1372" y="177" width="16" height="8" fill="#ff2211"/><rect x="1388" y="177" width="24" height="8" fill="#ff2200"/><rect x="1412" y="177" width="56" height="8" fill="#ff1100"/><rect x="1468" y="177" width="16" height="8" fill="#ff0000"/><rect x="1484" y="177" width="176" height="8" fill="#990000"/><rect x="1020" y="185" width="8" height="8" fill="#009911"/><rect x="1028" y="185" width="72" height="8" fill="#009922"/><rect x="1100" y="185" width="56" height="8" fill="#009933"/><rect x="1156" y="185" width="8" height="8" fill="#00ff66"/><rect x="1164" y="185" width="8" height="8" fill="#11ff66"/><rect x="1172" y="185" width="8" height="8" fill="#33ff66"/><rect x="1180" y="185" width="8" height="8" fill="#44ff66"/><rect x="1188" y="185" width="8" height="8" fill="#66ff66"/><rect x="1196" y="185" width="8" height="8" fill="#77ff66"/><rect x="1204" y="185" width="8" height="8" fill="#99ff66"/><rect x="1212" y="185" width="8" height="8" fill="#bbff66"/><rect x="1220" y="185" width="8" height="8" fill="#ddff66"/><rect x="1228" y="185" width="8" height="8" fill="#eeff66"/><rect x="1236" y="185" width="8" height="8" fill="#ffee55"/><rect x="1244" y="185" width="8" height="8" fill="#ffcc55"/><rect x="1252" y="185" width="8" height="8" fill="#ffbb44"/><rect x="1260" y="185" width="8" height="8" fill="#ff9944"/><rect x="1268" y="185" width="16" height="8" fill="#ff8833"/><rect x="1284" y="185" width="8" height="8" fill="#ff7733"/><rect x="1292" y="185" width="8" height="8" fill="#ff6633"/><rect x="1300" y="185" width="8" height="8" fill="#ff6622"/><rect x="1308" y="185" width="16" height="8" fill="#ff5522"/><rect x="1324" y="185" width="24" height="8" fill="#ff4422"/><rect x="1348" y="185" width="24" height="8" fill="#ff3311"/><rect x="1372" y="185" width="32" height="8" fill="#ff2211"/><rect x="1404" y="185" width="48" height="8" fill="#ff1111"/><rect x="1452" y="185" width="8" height="8" fill="#ff1100"/><rect x="1460" y="185" width="32" height="8" fill="#ff0000"/><rect x="1492" y="185" width="168" height="8" fill="#990000"/><rect x="1020" y="193" width="32" height="8" fill="#009922"/><rect x="1052" y="193" width="64" height="8" fill="#009933"/><rect x="1116" y="193" width="48" height="8" fill="#009944"/><rect x="1164" y="193" width="8" height="8" fill="#11ff77"/><rect x="1172" y="193" width="8" height="8" fill="#33ff77"/><rect x="1180" y="193" width="8" height="8" fill="#44ff77"/><rect x="1188" y="193" width="8" height="8" fill="#66ff77"/><rect x="1196" y="193" width="8" height="8" fill="#77ff77"/><rect x="1204" y="193" width="8" height="8" fill="#99ff77"/><rect x="1212" y="193" width="8" height="8" fill="#bbff77"/><rect x="1220" y="193" width="8" height="8" fill="#ddff77"/><rect x="1228" y="193" width="8" height="8" fill="#ffff77"/><rect x="1236" y="193" width="8" height="8" fill="#ffdd77"/><rect x="1244" y="193" width="8" height="8" fill="#ffcc66"/><rect x="1252" y="193" width="8" height="8" fill="#ffaa55"/><rect x="1260" y="193" width="8" height="8" fill="#ff9955"/><rect x="1268" y="193" width="8" height="8" fill="#ff8844"/><rect x="1276" y="193" width="16" height="8" fill="#ff7744"/><rect x="1292" y="193" width="8" height="8" fill="#ff6633"/><rect x="1300" y="193" width="16" height="8" fill="#ff5533"/><rect x="1316" y="193" width="16" height="8" fill="#ff4433"/><rect x="1332" y="193" width="8" height="8" fill="#ff4422"/><rect x="1340" y="193" width="24" height="8" fill="#ff3322"/><rect x="1364" y="193" width="24" height="8" fill="#ff2222"/><rect x="1388" y="193" width="16" height="8" fill="#ff2211"/><rect x="1404" y="193" width="48" height="8" fill="#ff1111"/><rect x="1452" y="193" width="32" height="8" fill="#ff0011"/><rect x="1484" y="193" width="176" height="8" fill="#990000"/><rect x="1020" y="201" width="48" height="8" fill="#009933"/><rect x="1068" y="201" width="56" height="8" fill="#009944"/><rect x="1124" y="201" width="40" height="8" fill="#009955"/><rect x="1164" y="201" width="8" height="8" fill="#11ff88"/><rect x="1172" y="201" width="8" height="8" fill="#22ff88"/><rect x="1180" y="201" width="8" height="8" fill="#44ff99"/><rect x="1188" y="201" width="8" height="8" fill="#66ff99"/><rect x="1196" y="201" width="8" height="8" fill="#77ff99"/><rect x="1204" y="201" width="8" height="8" fill="#99ff99"/><rect x="1212" y="201" width="8" height="8" fill="#bbff99"/><rect x="1220" y="201" width="8" height="8" fill="#ddff99"/><rect x="1228" y="201" width="8" height="8" fill="#ffff99"/><rect x="1236" y="201" width="8" height="8" fill="#ffdd88"/><rect x="1244" y="201" width="8" height="8" fill="#ffcc77"/><rect x="1252" y="201" width="8" height="8" fill="#ffaa77"/><rect x="1260" y="201" width="8" height="8" fill="#ff9966"/><rect x="1268" y="201" width="8" height="8" fill="#ff8866"/><rect x="1276" y="201" width="16" height="8" fill="#ff7755"/><rect x="1292" y="201" width="8" height="8" fill="#ff6644"/><rect x="1300" y="201" width="16" height="8" fill="#ff5544"/><rect x="1316" y="201" width="24" height="8" fill="#ff4433"/><rect x="1340" y="201" width="16" height="8" fill="#ff3333"/><rect x="1356" y="201" width="8" height="8" fill="#ff3322"/><rect x="1364" y="201" width="32" height="8" fill="#ff2222"/><rect x="1396" y="201" width="32" height="8" fill="#ff1122"/><rect x="1428" y="201" width="16" height="8" fill="#ff1111"/><rect x="1444" y="201" width="32" height="8" fill="#ff0011"/><rect x="1476" y="201" width="16" height="8" fill="#990011"/><rect x="1492" y="201" width="168" height="8" fill="#990000"/><rect x="1020" y="209" width="56" height="8" fill="#009944"/><rect x="1076" y="209" width="56" height="8" fill="#009955"/><rect x="1132" y="209" width="32" height="8" fill="#009966"/><rect x="1164" y="209" width="8" height="8" fill="#11ffaa"/><rect x="1172" y="209" width="8" height="8" fill="#22ffaa"/><rect x="1180" y="209" width="8" height="8" fill="#44ffaa"/><rect x="1188" y="209" width="8" height="8" fill="#55ffaa"/><rect x="1196" y="209" width="8" height="8" fill="#77ffaa"/><rect x="1204" y="209" width="8" height="8" fill="#99ffbb"/><rect x="1212" y="209" width="8" height="8" fill="#bbffbb"/><rect x="1220" y="209" width="8" height="8" fill="#ddffbb"/><rect x="1228" y="209" width="8" height="8" fill="#ffffbb"/><rect x="1236" y="209" width="8" height="8" fill="#ffddaa"/><rect x="1244" y="209" width="8" height="8" fill="#ffbb99"/><rect x="1252" y="209" width="8" height="8" fill="#ffaa88"/><rect x="1260" y="209" width="8" height="8" fill="#ff9977"/><rect x="1268" y="209" width="8" height="8" fill="#ff8877"/><rect x="1276" y="209" width="8" height="8" fill="#ff7766"/><rect x="1284" y="209" width="8" height="8" fill="#ff6666"/><rect x="1292" y="209" width="8" height="8" fill="#ff6655"/><rect x="1300" y="209" width="8" height="8" fill="#ff5555"/><rect x="1308" y="209" width="8" height="8" fill="#ff5544"/><rect x="1316" y="209" width="16" height="8" fill="#ff4444"/><rect x="1332" y="209" width="8" height="8" fill="#ff3344"/><rect x="1340" y="209" width="16" height="8" fill="#ff3333"/><rect x="1356" y="209" width="32" height="8" fill="#ff2233"/><rect x="1388" y="209" width="48" height="8" fill="#ff1122"/><rect x="1436" y="209" width="32" height="8" fill="#ff0022"/><rect x="1468" y="209" width="32" height="8" fill="#990011"/><rect x="1500" y="209" width="160" height="8" fill="#990000"/><rect x="1020" y="217" width="8" height="8" fill="#009944"/><rect x="1028" y="217" width="56" height="8" fill="#009955"/><rect x="1084" y="217" width="56" height="8" fill="#009966"/><rect x="1140" y="217" width="24" height="8" fill="#009977"/><rect x="1164" y="217" width="8" height="8" fill="#11ffbb"/><rect x="1172" y="217" width="8" height="8" fill="#22ffcc"/><rect x="1180" y="217" width="8" height="8" fill="#44ffcc"/><rect x="1188" y="217" width="8" height="8" fill="#55ffcc"/><rect x="1196" y="217" width="8" height="8" fill="#77ffcc"/><rect x="1204" y="217" width="8" height="8" fill="#99ffcc"/><rect x="1212" y="217" width="8" height="8" fill="#bbffdd"/><rect x="1220" y="217" width="8" height="8" fill="#ddffdd"/><rect x="1228" y="217" width="8" height="8" fill="#ffffdd"/><rect x="1236" y="217" width="8" height="8" fill="#ffddcc"/><rect x="1244" y="217" width="8" height="8" fill="#ffbbaa"/><rect x="1252" y="217" width="8" height="8" fill="#ffaa99"/><rect x="1260" y="217" width="8" height="8" fill="#ff9988"/><rect x="1268" y="217" width="8" height="8" fill="#ff8888"/><rect x="1276" y="217" width="8" height="8" fill="#ff7777"/><rect x="1284" y="217" width="8" height="8" fill="#ff6677"/><rect x="1292" y="217" width="16" height="8" fill="#ff5566"/><rect x="1308" y="217" width="24" height="8" fill="#ff4455"/><rect x="1332" y="217" width="24" height="8" fill="#ff3344"/><rect x="1356" y="217" width="8" height="8" fill="#ff2244"/><rect x="1364" y="217" width="24" height="8" fill="#ff2233"/><rect x="1388" y="217" width="32" height="8" fill="#ff1133"/><rect x="1420" y="217" width="8" height="8" fill="#ff1122"/><rect x="1428" y="217" width="32" height="8" fill="#ff0022"/><rect x="1460" y="217" width="48" height="8" fill="#990011"/><rect x="1508" y="217" width="152" height="8" fill="#990000"/><rect x="1020" y="225" width="16" height="8" fill="#009955"/><rect x="1036" y="225" width="56" height="8" fill="#009966"/><rect x="1092" y="225" width="48" height="8" fill="#009977"/><rect x="1140" y="225" width="24" height="8" fill="#009988"/><rect x="1164" y="225" width="8" height="8" fill="#00ffdd"/><rect x="1172" y="225" width="8" height="8" fill="#22ffdd"/><rect x="1180" y="225" width="8" height="8" fill="#44ffee"/><rect x="1188" y="225" width="8" height="8" fill="#55ffee"/><rect x="1196" y="225" width="8" height="8" fill="#77ffee"/><rect x="1204" y="225" width="8" height="8" fill="#99ffee"/><rect x="1212" y="225" width="8" height="8" fill="#bbffff"/><rect x="1220" y="225" width="8" height="8" fill="#ddffff"/><rect x="1228" y="225" width="8" height="8" fill="#ffeeff"/><rect x="1236" y="225" width="8" height="8" fill="#ffccdd"/><rect x="1244" y="225" width="8" height="8" fill="#ffbbcc"/><rect x="1252" y="225" width="8" height="8" fill="#ff99bb"/><rect x="1260" y="225" width="8" height="8" fill="#ff88aa"/><rect x="1268" y="225" width="8" height="8" fill="#ff7799"/><rect x="1276" y="225" width="8" height="8" fill="#ff7788"/><rect x="1284" y="225" width="8" height="8" fill="#ff6688"/><rect x="1292" y="225" width="16" height="8" fill="#ff5577"/><rect x="1308" y="225" width="16" height="8" fill="#ff4466"/><rect x="1324" y="225" width="24" height="8" fill="#ff3355"/><rect x="1348" y="225" width="8" height="8" fill="#ff2255"/><rect x="1356" y="225" width="24" height="8" fill="#ff2244"/><rect x="1380" y="225" width="8" height="8" fill="#ff1144"/><rect x="1388" y="225" width="40" height="8" fill="#ff1133"/><rect x="1428" y="225" width="24" height="8" fill="#ff0033"/><rect x="1452" y="225" width="64" height="8" fill="#990011"/><rect x="1516" y="225" width="144" height="8" fill="#990000"/><rect x="1020" y="233" width="16" height="8" fill="#009966"/><rect x="1036" y="233" width="56" height="8" fill="#009977"/><rect x="1092" y="233" width="48" height="8" fill="#009988"/><rect x="1140" y="233" width="24" height="8" fill="#009999"/><rect x="1164" y="233" width="8" height="8" fill="#00ffff"/><rect x="1172" y="233" width="8" height="8" fill="#22ffff"/><rect x="1180" y="233" width="8" height="8" fill="#33ffff"/><rect x="1188" y="233" width="8" height="8" fill="#55eeff"/><rect x="1196" y="233" width="8" height="8" fill="#66eeff"/><rect x="1204" y="233" width="8" height="8" fill="#88eeff"/><rect x="1212" y="233" width="8" height="8" fill="#aaddff"/><rect x="1220" y="233" width="8" height="8" fill="#bbddff"/><rect x="1228" y="233" width="8" height="8" fill="#ddddff"/><rect x="1236" y="233" width="8" height="8" fill="#ffccff"/><rect x="1244" y="233" width="8" height="8" fill="#ffbbdd"/><rect x="1252" y="233" width="8" height="8" fill="#ff99cc"/><rect x="1260" y="233" width="8" height="8" fill="#ff88bb"/><rect x="1268" y="233" width="8" height="8" fill="#ff77aa"/><rect x="1276" y="233" width="16" height="8" fill="#ff6699"/><rect x="1292" y="233" width="8" height="8" fill="#ff5588"/><rect x="1300" y="233" width="16" height="8" fill="#ff4477"/><rect x="1316" y="233" width="8" height="8" fill="#ff4466"/><rect x="1324" y="233" width="16" height="8" fill="#ff3366"/><rect x="1340" y="233" width="8" height="8" fill="#ff3355"/><rect x="1348" y="233" width="24" height="8" fill="#ff2255"/><rect x="1372" y="233" width="40" height="8" fill="#ff1144"/><rect x="1412" y="233" width="8" height="8" fill="#ff1133"/><rect x="1420" y="233" width="24" height="8" fill="#ff0033"/><rect x="1444" y="233" width="16" height="8" fill="#990022"/><rect x="1460" y="233" width="64" height="8" fill="#990011"/><rect x="1524" y="233" width="136" height="8" fill="#990000"/><rect x="1020" y="241" width="24" height="8" fill="#009977"/><rect x="1044" y="241" width="40" height="8" fill="#009988"/><rect x="1084" y="241" width="80" height="8" fill="#009999"/><rect x="1164" y="241" width="8" height="8" fill="#008899"/><rect x="1172" y="241" width="8" height="8" fill="#11ddff"/><rect x="1180" y="241" width="8" height="8" fill="#33ddff"/><rect x="1188" y="241" width="8" height="8" fill="#44ddff"/><rect x="1196" y="241" width="8" height="8" fill="#66ccff"/><rect x="1204" y="241" width="8" height="8" fill="#77ccff"/><rect x="1212" y="241" width="8" height="8" fill="#99ccff"/><rect x="1220" y="241" width="8" height="8" fill="#aabbff"/><rect x="1228" y="241" width="8" height="8" fill="#ccbbff"/><rect x="1236" y="241" width="8" height="8" fill="#ddbbff"/><rect x="1244" y="241" width="8" height="8" fill="#ffaaff"/><rect x="1252" y="241" width="8" height="8" fill="#ff99ee"/><rect x="1260" y="241" width="8" height="8" fill="#ff88cc"/><rect x="1268" y="241" width="8" height="8" fill="#ff77bb"/><rect x="1276" y="241" width="8" height="8" fill="#ff66aa"/><rect x="1284" y="241" width="8" height="8" fill="#ff55aa"/><rect x="1292" y="241" width="8" height="8" fill="#ff5599"/><rect x="1300" y="241" width="16" height="8" fill="#ff4488"/><rect x="1316" y="241" width="16" height="8" fill="#ff3377"/><rect x="1332" y="241" width="8" height="8" fill="#ff3366"/><rect x="1340" y="241" width="16" height="8" fill="#ff2266"/><rect x="1356" y="241" width="16" height="8" fill="#ff2255"/><rect x="1372" y="241" width="24" height="8" fill="#ff1155"/><rect x="1396" y="241" width="16" height="8" fill="#ff1144"/><rect x="1412" y="241" width="24" height="8" fill="#ff0044"/><rect x="1436" y="241" width="32" height="8" fill="#990022"/><rect x="1468" y="241" width="64" height="8" fill="#990011"/><rect x="1532" y="241" width="128" height="8" fill="#990000"/><rect x="1020" y="249" width="16" height="8" fill="#009988"/><rect x="1036" y="249" width="72" height="8" fill="#009999"/><rect x="1108" y="249" width="56" height="8" fill="#008899"/><rect x="1164" y="249" width="8" height="8" fill="#007799"/><rect x="1172" y="249" width="8" height="8" fill="#11ccff"/><rect x="1180" y="249" width="8" height="8" fill="#22bbff"/><rect x="1188" y="249" width="8" height="8" fill="#44bbff"/><rect x="1196" y="249" width="8" height="8" fill="#55bbff"/><rect x="1204" y="249" width="8" height="8" fill="#66bbff"/><rect x="1212" y="249" width="8" height="8" fill="#88aaff"/><rect x="1220" y="249" width="8" height="8" fill="#99aaff"/><rect x="1228" y="249" width="8" height="8" fill="#bbaaff"/><rect x="1236" y="249" width="8" height="8" fill="#cc99ff"/><rect x="1244" y="249" width="8" height="8" fill="#dd99ff"/><rect x="1252" y="249" width="8" height="8" fill="#ff99ff"/><rect x="1260" y="249" width="8" height="8" fill="#ff88ee"/><rect x="1268" y="249" width="8" height="8" fill="#ff77cc"/><rect x="1276" y="249" width="8" height="8" fill="#ff66bb"/><rect x="1284" y="249" width="8" height="8" fill="#ff55bb"/><rect x="1292" y="249" width="8" height="8" fill="#ff55aa"/><rect x="1300" y="249" width="16" height="8" fill="#ff4499"/><rect x="1316" y="249" width="16" height="8" fill="#ff3388"/><rect x="1332" y="249" width="16" height="8" fill="#ff2277"/><rect x="1348" y="249" width="16" height="8" fill="#ff2266"/><rect x="1364" y="249" width="16" height="8" fill="#ff1166"/><rect x="1380" y="249" width="24" height="8" fill="#ff1155"/><rect x="1404" y="249" width="8" height="8" fill="#ff0055"/><rect x="1412" y="249" width="16" height="8" fill="#ff0044"/><rect x="1428" y="249" width="8" height="8" fill="#990033"/><rect x="1436" y="249" width="40" height="8" fill="#990022"/><rect x="1476" y="249" width="64" height="8" fill="#990011"/><rect x="1540" y="249" width="120" height="8" fill="#990000"/><rect x="1020" y="257" width="40" height="8" fill="#009999"/><rect x="1060" y="257" width="56" height="8" fill="#008899"/><rect x="1116" y="257" width="56" height="8" fill="#007799"/><rect x="1172" y="257" width="8" height="8" fill="#11bbff"/><rect x="1180" y="257" width="8" height="8" fill="#22aaff"/><rect x="1188" y="257" width="8" height="8" fill="#33aaff"/><rect x="1196" y="257" width="8" height="8" fill="#44aaff"/><rect x="1204" y="257" width="8" height="8" fill="#6699ff"/><rect x="1212" y="257" width="8" height="8" fill="#7799ff"/><rect x="1220" y="257" width="8" height="8" fill="#8899ff"/><rect x="1228" y="257" width="8" height="8" fill="#aa99ff"/><rect x="1236" y="257" width="8" height="8" fill="#bb88ff"/><rect x="1244" y="257" width="8" height="8" fill="#cc88ff"/><rect x="1252" y="257" width="8" height="8" fill="#ee88ff"/><rect x="1260" y="257" width="8" height="8" fill="#ff77ff"/><rect x="1268" y="257" width="8" height="8" fill="#ff66ee"/><rect x="1276" y="257" width="8" height="8" fill="#ff66dd"/><rect x="1284" y="257" width="8" height="8" fill="#ff55cc"/><rect x="1292" y="257" width="8" height="8" fill="#ff44bb"/><rect x="1300" y="257" width="8" height="8" fill="#ff44aa"/><rect x="1308" y="257" width="16" height="8" fill="#ff3399"/><rect x="1324" y="257" width="8" height="8" fill="#ff3388"/><rect x="1332" y="257" width="8" height="8" fill="#ff2288"/><rect x="1340" y="257" width="16" height="8" fill="#ff2277"/><rect x="1356" y="257" width="8" height="8" fill="#ff1177"/><rect x="1364" y="257" width="32" height="8" fill="#ff1166"/><rect x="1396" y="257" width="24" height="8" fill="#ff0055"/><rect x="1420" y="257" width="24" height="8" fill="#990033"/><rect x="1444" y="257" width="40" height="8" fill="#990022"/><rect x="1484" y="257" width="64" height="8" fill="#990011"/><rect x="1548" y="257" width="112" height="8" fill="#990000"/><rect x="1020" y="265" width="48" height="8" fill="#008899"/><rect x="1068" y="265" width="64" height="8" fill="#007799"/><rect x="1132" y="265" width="40" height="8" fill="#006699"/><rect x="1172" y="265" width="8" height="8" fill="#11aaff"/><rect x="1180" y="265" width="8" height="8" fill="#2299ff"/><rect x="1188" y="265" width="8" height="8" fill="#3399ff"/><rect x="1196" y="265" width="8" height="8" fill="#4499ff"/><rect x="1204" y="265" width="8" height="8" fill="#5588ff"/><rect x="1212" y="265" width="8" height="8" fill="#6688ff"/><rect x="1220" y="265" width="8" height="8" fill="#7788ff"/><rect x="1228" y="265" width="8" height="8" fill="#9988ff"/><rect x="1236" y="265" width="8" height="8" fill="#aa77ff"/><rect x="1244" y="265" width="8" height="8" fill="#bb77ff"/><rect x="1252" y="265" width="8" height="8" fill="#cc77ff"/><rect x="1260" y="265" width="8" height="8" fill="#ee66ff"/><rect x="1268" y="265" width="8" height="8" fill="#ff66ff"/><rect x="1276" y="265" width="8" height="8" fill="#ff55ee"/><rect x="1284" y="265" width="8" height="8" fill="#ff55dd"/><rect x="1292" y="265" width="8" height="8" fill="#ff44cc"/><rect x="1300" y="265" width="8" height="8" fill="#ff44bb"/><rect x="1308" y="265" width="16" height="8" fill="#ff33aa"/><rect x="1324" y="265" width="16" height="8" fill="#ff2299"/><rect x="1340" y="265" width="16" height="8" fill="#ff2288"/><rect x="1356" y="265" width="24" height="8" fill="#ff1177"/><rect x="1380" y="265" width="8" height="8" fill="#ff1166"/><rect x="1388" y="265" width="24" height="8" fill="#ff0066"/><rect x="1412" y="265" width="40" height="8" fill="#990033"/><rect x="1452" y="265" width="40" height="8" fill="#990022"/><rect x="1492" y="265" width="64" height="8" fill="#990011"/><rect x="1556" y="265" width="104" height="8" fill="#990000"/><rect x="1020" y="273" width="64" height="8" fill="#007799"/><rect x="1084" y="273" width="80" height="8" fill="#006699"/><rect x="1164" y="273" width="8" height="8" fill="#005599"/><rect x="1172" y="273" width="8" height="8" fill="#0099ff"/><rect x="1180" y="273" width="8" height="8" fill="#1188ff"/><rect x="1188" y="273" width="8" height="8" fill="#2288ff"/><rect x="1196" y="273" width="8" height="8" fill="#4488ff"/><rect x="1204" y="273" width="8" height="8" fill="#5588ff"/><rect x="1212" y="273" width="8" height="8" fill="#6677ff"/><rect x="1220" y="273" width="8" height="8" fill="#7777ff"/><rect x="1228" y="273" width="8" height="8" fill="#8877ff"/><rect x="1236" y="273" width="8" height="8" fill="#9977ff"/><rect x="1244" y="273" width="8" height="8" fill="#aa66ff"/><rect x="1252" y="273" width="8" height="8" fill="#bb66ff"/><rect x="1260" y="273" width="8" height="8" fill="#dd66ff"/><rect x="1268" y="273" width="8" height="8" fill="#ee55ff"/><rect x="1276" y="273" width="8" height="8" fill="#ff55ff"/><rect x="1284" y="273" width="8" height="8" fill="#ff55ee"/><rect x="1292" y="273" width="8" height="8" fill="#ff44dd"/><rect x="1300" y="273" width="8" height="8" fill="#ff33cc"/><rect x="1308" y="273" width="16" height="8" fill="#ff33bb"/><rect x="1324" y="273" width="8" height="8" fill="#ff22aa"/><rect x="1332" y="273" width="16" height="8" fill="#ff2299"/><rect x="1348" y="273" width="24" height="8" fill="#ff1188"/><rect x="1372" y="273" width="8" height="8" fill="#ff1177"/><rect x="1380" y="273" width="16" height="8" fill="#ff0077"/><rect x="1396" y="273" width="8" height="8" fill="#ff0066"/><rect x="1404" y="273" width="16" height="8" fill="#990044"/><rect x="1420" y="273" width="40" height="8" fill="#990033"/><rect x="1460" y="273" width="48" height="8" fill="#990022"/><rect x="1508" y="273" width="56" height="8" fill="#990011"/><rect x="1564" y="273" width="96" height="8" fill="#990000"/><rect x="1020" y="281" width="16" height="8" fill="#007799"/><rect x="1036" y="281" width="80" height="8" fill="#006699"/><rect x="1116" y="281" width="56" height="8" fill="#005599"/><rect x="1172" y="281" width="8" height="8" fill="#0088ff"/><rect x="1180" y="281" width="8" height="8" fill="#1188ff"/><rect x="1188" y="281" width="8" height="8" fill="#2277ff"/><rect x="1196" y="281" width="8" height="8" fill="#3377ff"/><rect x="1204" y="281" width="8" height="8" fill="#4477ff"/><rect x="1212" y="281" width="8" height="8" fill="#5577ff"/><rect x="1220" y="281" width="8" height="8" fill="#6666ff"/><rect x="1228" y="281" width="8" height="8" fill="#7766ff"/><rect x="1236" y="281" width="8" height="8" fill="#8866ff"/><rect x="1244" y="281" width="8" height="8" fill="#9966ff"/><rect x="1252" y="281" width="8" height="8" fill="#aa55ff"/><rect x="1260" y="281" width="8" height="8" fill="#cc55ff"/><rect x="1268" y="281" width="8" height="8" fill="#dd55ff"/><rect x="1276" y="281" width="8" height="8" fill="#ee55ff"/><rect x="1284" y="281" width="8" height="8" fill="#ff44ff"/><rect x="1292" y="281" width="8" height="8" fill="#ff44ee"/><rect x="1300" y="281" width="8" height="8" fill="#ff33dd"/><rect x="1308" y="281" width="8" height="8" fill="#ff33cc"/><rect x="1316" y="281" width="16" height="8" fill="#ff22bb"/><rect x="1332" y="281" width="8" height="8" fill="#ff22aa"/><rect x="1340" y="281" width="8" height="8" fill="#ff11aa"/><rect x="1348" y="281" width="16" height="8" fill="#ff1199"/><rect x="1364" y="281" width="16" height="8" fill="#ff1188"/><rect x="1380" y="281" width="8" height="8" fill="#ff0088"/><rect x="1388" y="281" width="8" height="8" fill="#ff0077"/><rect x="1396" y="281" width="32" height="8" fill="#990044"/><rect x="1428" y="281" width="40" height="8" fill="#990033"/><rect x="1468" y="281" width="48" height="8" fill="#990022"/><rect x="1516" y="281" width="56" height="8" fill="#990011"/><rect x="1572" y="281" width="88" height="8" fill="#990000"/><rect x="1020" y="289" width="48" height="8" fill="#006699"/><rect x="1068" y="289" width="96" height="8" fill="#005599"/><rect x="1164" y="289" width="8" height="8" fill="#004499"/><rect x="1172" y="289" width="8" height="8" fill="#0077ff"/><rect x="1180" y="289" width="8" height="8" fill="#1177ff"/><rect x="1188" y="289" width="8" height="8" fill="#2277ff"/><rect x="1196" y="289" width="8" height="8" fill="#3366ff"/><rect x="1204" y="289" width="8" height="8" fill="#4466ff"/><rect x="1212" y="289" width="8" height="8" fill="#5566ff"/><rect x="1220" y="289" width="8" height="8" fill="#6666ff"/><rect x="1228" y="289" width="8" height="8" fill="#7755ff"/><rect x="1236" y="289" width="8" height="8" fill="#8855ff"/><rect x="1244" y="289" width="8" height="8" fill="#9955ff"/><rect x="1252" y="289" width="8" height="8" fill="#aa55ff"/><rect x="1260" y="289" width="8" height="8" fill="#bb44ff"/><rect x="1268" y="289" width="8" height="8" fill="#cc44ff"/><rect x="1276" y="289" width="8" height="8" fill="#dd44ff"/><rect x="1284" y="289" width="8" height="8" fill="#ee44ff"/><rect x="1292" y="289" width="8" height="8" fill="#ff33ff"/><rect x="1300" y="289" width="8" height="8" fill="#ff33ee"/><rect x="1308" y="289" width="8" height="8" fill="#ff33dd"/><rect x="1316" y="289" width="16" height="8" fill="#ff22cc"/><rect x="1332" y="289" width="8" height="8" fill="#ff22bb"/><rect x="1340" y="289" width="16" height="8" fill="#ff11aa"/><rect x="1356" y="289" width="16" height="8" fill="#ff1199"/><rect x="1372" y="289" width="8" height="8" fill="#ff0099"/><rect x="1380" y="289" width="8" height="8" fill="#ff0088"/><rect x="1388" y="289" width="16" height="8" fill="#990055"/><rect x="1404" y="289" width="32" height="8" fill="#990044"/><rect x="1436" y="289" width="40" height="8" fill="#990033"/><rect x="1476" y="289" width="48" height="8" fill="#990022"/><rect x="1524" y="289" width="56" height="8" fill="#990011"/><rect x="1580" y="289" width="80" height="8" fill="#990000"/><rect x="1020" y="297" width="96" height="8" fill="#005599"/><rect x="1116" y="297" width="64" height="8" fill="#004499"/><rect x="1180" y="297" width="8" height="8" fill="#1166ff"/><rect x="1188" y="297" width="8" height="8" fill="#2266ff"/><rect x="1196" y="297" width="16" height="8" fill="#3366ff"/><rect x="1212" y="297" width="8" height="8" fill="#4455ff"/><rect x="1220" y="297" width="8" height="8" fill="#5555ff"/><rect x="1228" y="297" width="8" height="8" fill="#6655ff"/><rect x="1236" y="297" width="8" height="8" fill="#7755ff"/><rect x="1244" y="297" width="8" height="8" fill="#8844ff"/><rect x="1252" y="297" width="8" height="8" fill="#9944ff"/><rect x="1260" y="297" width="8" height="8" fill="#aa44ff"/><rect x="1268" y="297" width="8" height="8" fill="#bb44ff"/><rect x="1276" y="297" width="8" height="8" fill="#cc33ff"/><rect x="1284" y="297" width="8" height="8" fill="#dd33ff"/><rect x="1292" y="297" width="8" height="8" fill="#ee33ff"/><rect x="1300" y="297" width="8" height="8" fill="#ff33ff"/><rect x="1308" y="297" width="8" height="8" fill="#ff22ee"/><rect x="1316" y="297" width="8" height="8" fill="#ff22dd"/><rect x="1324" y="297" width="8" height="8" fill="#ff22cc"/><rect x="1332" y="297" width="8" height="8" fill="#ff11cc"/><rect x="1340" y="297" width="16" height="8" fill="#ff11bb"/><rect x="1356" y="297" width="8" height="8" fill="#ff11aa"/><rect x="1364" y="297" width="8" height="8" fill="#ff00aa"/><rect x="1372" y="297" width="8" height="8" fill="#ff0099"/><rect x="1380" y="297" width="32" height="8" fill="#990055"/><rect x="1412" y="297" width="32" height="8" fill="#990044"/><rect x="1444" y="297" width="40" height="8" fill="#990033"/><rect x="1484" y="297" width="48" height="8" fill="#990022"/><rect x="1532" y="297" width="56" height="8" fill="#990011"/><rect x="1588" y="297" width="72" height="8" fill="#990000"/><rect x="1020" y="305" width="48" height="8" fill="#005599"/><rect x="1068" y="305" width="112" height="8" fill="#004499"/><rect x="1180" y="305" width="16" height="8" fill="#1166ff"/><rect x="1196" y="305" width="8" height="8" fill="#2255ff"/><rect x="1204" y="305" width="8" height="8" fill="#3355ff"/><rect x="1212" y="305" width="8" height="8" fill="#4455ff"/><rect x="1220" y="305" width="8" height="8" fill="#5555ff"/><rect x="1228" y="305" width="8" height="8" fill="#6644ff"/><rect x="1236" y="305" width="16" height="8" fill="#7744ff"/><rect x="1252" y="305" width="8" height="8" fill="#8844ff"/><rect x="1260" y="305" width="8" height="8" fill="#9944ff"/><rect x="1268" y="305" width="8" height="8" fill="#aa33ff"/><rect x="1276" y="305" width="8" height="8" fill="#bb33ff"/><rect x="1284" y="305" width="8" height="8" fill="#cc33ff"/><rect x="1292" y="305" width="8" height="8" fill="#dd33ff"/><rect x="1300" y="305" width="8" height="8" fill="#ee22ff"/><rect x="1308" y="305" width="8" height="8" fill="#ff22ff"/><rect x="1316" y="305" width="8" height="8" fill="#ff22ee"/><rect x="1324" y="305" width="16" height="8" fill="#ff11dd"/><rect x="1340" y="305" width="8" height="8" fill="#ff11cc"/><rect x="1348" y="305" width="8" height="8" fill="#ff11bb"/><rect x="1356" y="305" width="8" height="8" fill="#ff00bb"/><rect x="1364" y="305" width="8" height="8" fill="#ff00aa"/><rect x="1372" y="305" width="16" height="8" fill="#990066"/><rect x="1388" y="305" width="32" height="8" fill="#990055"/><rect x="1420" y="305" width="32" height="8" fill="#990044"/><rect x="1452" y="305" width="40" height="8" fill="#990033"/><rect x="1492" y="305" width="48" height="8" fill="#990022"/><rect x="1540" y="305" width="56" height="8" fill="#990011"/><rect x="1596" y="305" width="64" height="8" fill="#990000"/><rect x="1020" y="313" width="128" height="8" fill="#004499"/><rect x="1148" y="313" width="32" height="8" fill="#003399"/><rect x="1180" y="313" width="8" height="8" fill="#0055ff"/><rect x="1188" y="313" width="8" height="8" fill="#1155ff"/><rect x="1196" y="313" width="8" height="8" fill="#2255ff"/><rect x="1204" y="313" width="8" height="8" fill="#3355ff"/><rect x="1212" y="313" width="16" height="8" fill="#4444ff"/><rect x="1228" y="313" width="8" height="8" fill="#5544ff"/><rect x="1236" y="313" width="8" height="8" fill="#6644ff"/><rect x="1244" y="313" width="8" height="8" fill="#7744ff"/><rect x="1252" y="313" width="8" height="8" fill="#8833ff"/><rect x="1260" y="313" width="8" height="8" fill="#9933ff"/><rect x="1268" y="313" width="16" height="8" fill="#aa33ff"/><rect x="1284" y="313" width="8" height="8" fill="#bb22ff"/><rect x="1292" y="313" width="8" height="8" fill="#cc22ff"/><rect x="1300" y="313" width="8" height="8" fill="#dd22ff"/><rect x="1308" y="313" width="8" height="8" fill="#ee22ff"/><rect x="1316" y="313" width="8" height="8" fill="#ff11ff"/><rect x="1324" y="313" width="8" height="8" fill="#ff11ee"/><rect x="1332" y="313" width="16" height="8" fill="#ff11dd"/><rect x="1348" y="313" width="8" height="8" fill="#ff00cc"/><rect x="1356" y="313" width="8" height="8" fill="#ff00bb"/><rect x="1364" y="313" width="8" height="8" fill="#990077"/><rect x="1372" y="313" width="24" height="8" fill="#990066"/><rect x="1396" y="313" width="32" height="8" fill="#990055"/><rect x="1428" y="313" width="32" height="8" fill="#990044"/><rect x="1460" y="313" width="40" height="8" fill="#990033"/><rect x="1500" y="313" width="48" height="8" fill="#990022"/><rect x="1548" y="313" width="56" height="8" fill="#990011"/><rect x="1604" y="313" width="56" height="8" fill="#990000"/><rect x="1020" y="321" width="80" height="8" fill="#004499"/><rect x="1100" y="321" width="80" height="8" fill="#003399"/><rect x="1180" y="321" width="8" height="8" fill="#0055ff"/><rect x="1188" y="321" width="8" height="8" fill="#1155ff"/><rect x="1196" y="321" width="8" height="8" fill="#2244ff"/><rect x="1204" y="321" width="16" height="8" fill="#3344ff"/><rect x="1220" y="321" width="8" height="8" fill="#4444ff"/><rect x="1228" y="321" width="8" height="8" fill="#5544ff"/><rect x="1236" y="321" width="16" height="8" fill="#6633ff"/><rect x="1252" y="321" width="8" height="8" fill="#7733ff"/><rect x="1260" y="321" width="8" height="8" fill="#8833ff"/><rect x="1268" y="321" width="8" height="8" fill="#9933ff"/><rect x="1276" y="321" width="8" height="8" fill="#aa22ff"/><rect x="1284" y="321" width="16" height="8" fill="#bb22ff"/><rect x="1300" y="321" width="8" height="8" fill="#cc22ff"/><rect x="1308" y="321" width="8" height="8" fill="#dd11ff"/><rect x="1316" y="321" width="8" height="8" fill="#ee11ff"/><rect x="1324" y="321" width="8" height="8" fill="#ff11ff"/><rect x="1332" y="321" width="8" height="8" fill="#ff11ee"/><rect x="1340" y="321" width="16" height="8" fill="#ff00dd"/><rect x="1356" y="321" width="8" height="8" fill="#ff00cc"/><rect x="1364" y="321" width="16" height="8" fill="#990077"/><rect x="1380" y="321" width="24" height="8" fill="#990066"/><rect x="1404" y="321" width="32" height="8" fill="#990055"/><rect x="1436" y="321" width="32" height="8" fill="#990044"/><rect x="1468" y="321" width="40" height="8" fill="#990033"/><rect x="1508" y="321" width="48" height="8" fill="#990022"/><rect x="1556" y="321" width="56" height="8" fill="#990011"/><rect x="1612" y="321" width="48" height="8" fill="#990000"/><rect x="1020" y="329" width="32" height="8" fill="#004499"/><rect x="1052" y="329" width="128" height="8" fill="#003399"/><rect x="1180" y="329" width="8" height="8" fill="#0044ff"/><rect x="1188" y="329" width="8" height="8" fill="#1144ff"/><rect x="1196" y="329" width="16" height="8" fill="#2244ff"/><rect x="1212" y="329" width="8" height="8" fill="#3344ff"/><rect x="1220" y="329" width="8" height="8" fill="#4433ff"/><rect x="1228" y="329" width="16" height="8" fill="#5533ff"/><rect x="1244" y="329" width="8" height="8" fill="#6633ff"/><rect x="1252" y="329" width="8" height="8" fill="#7733ff"/><rect x="1260" y="329" width="16" height="8" fill="#8822ff"/><rect x="1276" y="329" width="8" height="8" fill="#9922ff"/><rect x="1284" y="329" width="8" height="8" fill="#aa22ff"/><rect x="1292" y="329" width="8" height="8" fill="#bb22ff"/><rect x="1300" y="329" width="16" height="8" fill="#cc11ff"/><rect x="1316" y="329" width="8" height="8" fill="#dd11ff"/><rect x="1324" y="329" width="8" height="8" fill="#ee11ff"/><rect x="1332" y="329" width="8" height="8" fill="#ff00ff"/><rect x="1340" y="329" width="16" height="8" fill="#ff00ee"/><rect x="1356" y="329" width="16" height="8" fill="#990088"/><rect x="1372" y="329" width="16" height="8" fill="#990077"/><rect x="1388" y="329" width="24" height="8" fill="#990066"/><rect x="1412" y="329" width="32" height="8" fill="#990055"/><rect x="1444" y="329" width="32" height="8" fill="#990044"/><rect x="1476" y="329" width="40" height="8" fill="#990033"/><rect x="1516" y="329" width="48" height="8" fill="#990022"/><rect x="1564" y="329" width="56" height="8" fill="#990011"/><rect x="1620" y="329" width="40" height="8" fill="#990000"/><rect x="1020" y="337" width="160" height="8" fill="#003399"/><rect x="1180" y="337" width="8" height="8" fill="#0044ff"/><rect x="1188" y="337" width="16" height="8" fill="#1144ff"/><rect x="1204" y="337" width="8" height="8" fill="#2233ff"/><rect x="1212" y="337" width="8" height="8" fill="#3333ff"/><rect x="1220" y="337" width="16" height="8" fill="#4433ff"/><rect x="1236" y="337" width="8" height="8" fill="#5533ff"/><rect x="1244" y="337" width="16" height="8" fill="#6622ff"/><rect x="1260" y="337" width="8" height="8" fill="#7722ff"/><rect x="1268" y="337" width="8" height="8" fill="#8822ff"/><rect x="1276" y="337" width="8" height="8" fill="#9922ff"/><rect x="1284" y="337" width="8" height="8" fill="#9911ff"/><rect x="1292" y="337" width="8" height="8" fill="#aa11ff"/><rect x="1300" y="337" width="8" height="8" fill="#bb11ff"/><rect x="1308" y="337" width="8" height="8" fill="#cc11ff"/><rect x="1316" y="337" width="8" height="8" fill="#dd11ff"/><rect x="1324" y="337" width="8" height="8" fill="#dd00ff"/><rect x="1332" y="337" width="8" height="8" fill="#ee00ff"/><rect x="1340" y="337" width="8" height="8" fill="#ff00ff"/><rect x="1348" y="337" width="8" height="8" fill="#990099"/><rect x="1356" y="337" width="24" height="8" fill="#990088"/><rect x="1380" y="337" width="16" height="8" fill="#990077"/><rect x="1396" y="337" width="24" height="8" fill="#990066"/><rect x="1420" y="337" width="32" height="8" fill="#990055"/><rect x="1452" y="337" width="32" height="8" fill="#990044"/><rect x="1484" y="337" width="40" height="8" fill="#990033"/><rect x="1524" y="337" width="48" height="8" fill="#990022"/><rect x="1572" y="337" width="56" height="8" fill="#990011"/><rect x="1628" y="337" width="32" height="8" fill="#990000"/><rect x="1020" y="345" width="104" height="8" fill="#003399"/><rect x="1124" y="345" width="64" height="8" fill="#002299"/><rect x="1188" y="345" width="16" height="8" fill="#1133ff"/><rect x="1204" y="345" width="8" height="8" fill="#2233ff"/><rect x="1212" y="345" width="16" height="8" fill="#3333ff"/><rect x="1228" y="345" width="8" height="8" fill="#4433ff"/><rect x="1236" y="345" width="16" height="8" fill="#5522ff"/><rect x="1252" y="345" width="8" height="8" fill="#6622ff"/><rect x="1260" y="345" width="16" height="8" fill="#7722ff"/><rect x="1276" y="345" width="8" height="8" fill="#8811ff"/><rect x="1284" y="345" width="8" height="8" fill="#9911ff"/><rect x="1292" y="345" width="16" height="8" fill="#aa11ff"/><rect x="1308" y="345" width="8" height="8" fill="#bb11ff"/><rect x="1316" y="345" width="8" height="8" fill="#cc00ff"/><rect x="1324" y="345" width="16" height="8" fill="#dd00ff"/><rect x="1340" y="345" width="24" height="8" fill="#990099"/><rect x="1364" y="345" width="24" height="8" fill="#990088"/><rect x="1388" y="345" width="16" height="8" fill="#990077"/><rect x="1404" y="345" width="24" height="8" fill="#990066"/><rect x="1428" y="345" width="32" height="8" fill="#990055"/><rect x="1460" y="345" width="32" height="8" fill="#990044"/><rect x="1492" y="345" width="40" height="8" fill="#990033"/><rect x="1532" y="345" width="48" height="8" fill="#990022"/><rect x="1580" y="345" width="56" height="8" fill="#990011"/><rect x="1636" y="345" width="24" height="8" fill="#990000"/><rect x="1020" y="353" width="56" height="8" fill="#003399"/><rect x="1076" y="353" width="112" height="8" fill="#002299"/><rect x="1188" y="353" width="8" height="8" fill="#0033ff"/><rect x="1196" y="353" width="8" height="8" fill="#1133ff"/><rect x="1204" y="353" width="16" height="8" fill="#2233ff"/><rect x="1220" y="353" width="8" height="8" fill="#3322ff"/><rect x="1228" y="353" width="16" height="8" fill="#4422ff"/><rect x="1244" y="353" width="8" height="8" fill="#5522ff"/><rect x="1252" y="353" width="16" height="8" fill="#6622ff"/><rect x="1268" y="353" width="8" height="8" fill="#7711ff"/><rect x="1276" y="353" width="16" height="8" fill="#8811ff"/><rect x="1292" y="353" width="8" height="8" fill="#9911ff"/><rect x="1300" y="353" width="8" height="8" fill="#aa11ff"/><rect x="1308" y="353" width="16" height="8" fill="#bb00ff"/><rect x="1324" y="353" width="8" height="8" fill="#cc00ff"/><rect x="1332" y="353" width="16" height="8" fill="#880099"/><rect x="1348" y="353" width="24" height="8" fill="#990099"/><rect x="1372" y="353" width="24" height="8" fill="#990088"/><rect x="1396" y="353" width="16" height="8" fill="#990077"/><rect x="1412" y="353" width="24" height="8" fill="#990066"/><rect x="1436" y="353" width="32" height="8" fill="#990055"/><rect x="1468" y="353" width="32" height="8" fill="#990044"/><rect x="1500" y="353" width="40" height="8" fill="#990033"/><rect x="1540" y="353" width="48" height="8" fill="#990022"/><rect x="1588" y="353" width="56" height="8" fill="#990011"/><rect x="1644" y="353" width="16" height="8" fill="#990000"/><rect x="1020" y="361" width="8" height="8" fill="#003399"/><rect x="1028" y="361" width="160" height="8" fill="#002299"/><rect x="1188" y="361" width="8" height="8" fill="#0033ff"/><rect x="1196" y="361" width="8" height="8" fill="#1133ff"/><rect x="1204" y="361" width="8" height="8" fill="#2233ff"/><rect x="1212" y="361" width="8" height="8" fill="#2222ff"/><rect x="1220" y="361" width="16" height="8" fill="#3322ff"/><rect x="1236" y="361" width="8" height="8" fill="#4422ff"/><rect x="1244" y="361" width="8" height="8" fill="#5522ff"/><rect x="1252" y="361" width="8" height="8" fill="#5511ff"/><rect x="1260" y="361" width="8" height="8" fill="#6611ff"/><rect x="1268" y="361" width="16" height="8" fill="#7711ff"/><rect x="1284" y="361" width="8" height="8" fill="#8811ff"/><rect x="1292" y="361" width="8" height="8" fill="#9911ff"/><rect x="1300" y="361" width="8" height="8" fill="#9900ff"/><rect x="1308" y="361" width="8" height="8" fill="#aa00ff"/><rect x="1316" y="361" width="8" height="8" fill="#bb00ff"/><rect x="1324" y="361" width="16" height="8" fill="#770099"/><rect x="1340" y="361" width="16" height="8" fill="#880099"/><rect x="1356" y="361" width="24" height="8" fill="#990099"/><rect x="1380" y="361" width="24" height="8" fill="#990088"/><rect x="1404" y="361" width="16" height="8" fill="#990077"/><rect x="1420" y="361" width="24" height="8" fill="#990066"/><rect x="1444" y="361" width="32" height="8" fill="#990055"/><rect x="1476" y="361" width="32" height="8" fill="#990044"/><rect x="1508" y="361" width="40" height="8" fill="#990033"/><rect x="1548" y="361" width="48" height="8" fill="#990022"/><rect x="1596" y="361" width="56" height="8" fill="#990011"/><rect x="1652" y="361" width="8" height="8" fill="#990000"/><rect x="1020" y="369" width="168" height="8" fill="#002299"/><rect x="1188" y="369" width="8" height="8" fill="#0033ff"/><rect x="1196" y="369" width="16" height="8" fill="#1122ff"/><rect x="1212" y="369" width="8" height="8" fill="#2222ff"/><rect x="1220" y="369" width="16" height="8" fill="#3322ff"/><rect x="1236" y="369" width="8" height="8" fill="#4422ff"/><rect x="1244" y="369" width="8" height="8" fill="#4411ff"/><rect x="1252" y="369" width="8" height="8" fill="#5511ff"/><rect x="1260" y="369" width="16" height="8" fill="#6611ff"/><rect x="1276" y="369" width="8" height="8" fill="#7711ff"/><rect x="1284" y="369" width="8" height="8" fill="#8811ff"/><rect x="1292" y="369" width="8" height="8" fill="#8800ff"/><rect x="1300" y="369" width="8" height="8" fill="#9900ff"/><rect x="1308" y="369" width="8" height="8" fill="#aa00ff"/><rect x="1316" y="369" width="8" height="8" fill="#660099"/><rect x="1324" y="369" width="24" height="8" fill="#770099"/><rect x="1348" y="369" width="16" height="8" fill="#880099"/><rect x="1364" y="369" width="24" height="8" fill="#990099"/><rect x="1388" y="369" width="24" height="8" fill="#990088"/><rect x="1412" y="369" width="16" height="8" fill="#990077"/><rect x="1428" y="369" width="24" height="8" fill="#990066"/><rect x="1452" y="369" width="32" height="8" fill="#990055"/><rect x="1484" y="369" width="32" height="8" fill="#990044"/><rect x="1516" y="369" width="40" height="8" fill="#990033"/><rect x="1556" y="369" width="48" height="8" fill="#990022"/><rect x="1604" y="369" width="56" height="8" fill="#990011"/><rect x="1020" y="377" width="160" height="8" fill="#002299"/><rect x="1180" y="377" width="8" height="8" fill="#001199"/><rect x="1188" y="377" width="8" height="8" fill="#0022ff"/><rect x="1196" y="377" width="16" height="8" fill="#1122ff"/><rect x="1212" y="377" width="16" height="8" fill="#2222ff"/><rect x="1228" y="377" width="8" height="8" fill="#3322ff"/><rect x="1236" y="377" width="16" height="8" fill="#4411ff"/><rect x="1252" y="377" width="16" height="8" fill="#5511ff"/><rect x="1268" y="377" width="8" height="8" fill="#6611ff"/><rect x="1276" y="377" width="8" height="8" fill="#7711ff"/><rect x="1284" y="377" width="8" height="8" fill="#7700ff"/><rect x="1292" y="377" width="16" height="8" fill="#8800ff"/><rect x="1308" y="377" width="24" height="8" fill="#660099"/><rect x="1332" y="377" width="24" height="8" fill="#770099"/><rect x="1356" y="377" width="16" height="8" fill="#880099"/><rect x="1372" y="377" width="24" height="8" fill="#990099"/><rect x="1396" y="377" width="24" height="8" fill="#990088"/><rect x="1420" y="377" width="16" height="8" fill="#990077"/><rect x="1436" y="377" width="24" height="8" fill="#990066"/><rect x="1460" y="377" width="32" height="8" fill="#990055"/><rect x="1492" y="377" width="32" height="8" fill="#990044"/><rect x="1524" y="377" width="40" height="8" fill="#990033"/><rect x="1564" y="377" width="48" height="8" fill="#990022"/><rect x="1612" y="377" width="48" height="8" fill="#990011"/><rect x="1020" y="385" width="104" height="8" fill="#002299"/><rect x="1124" y="385" width="64" height="8" fill="#001199"/><rect x="1188" y="385" width="8" height="8" fill="#0022ff"/><rect x="1196" y="385" width="16" height="8" fill="#1122ff"/><rect x="1212" y="385" width="8" height="8" fill="#2222ff"/><rect x="1220" y="385" width="8" height="8" fill="#2211ff"/><rect x="1228" y="385" width="16" height="8" fill="#3311ff"/><rect x="1244" y="385" width="8" height="8" fill="#4411ff"/><rect x="1252" y="385" width="16" height="8" fill="#5511ff"/><rect x="1268" y="385" width="8" height="8" fill="#6611ff"/><rect x="1276" y="385" width="8" height="8" fill="#6600ff"/><rect x="1284" y="385" width="16" height="8" fill="#7700ff"/><rect x="1300" y="385" width="16" height="8" fill="#550099"/><rect x="1316" y="385" width="24" height="8" fill="#660099"/><rect x="1340" y="385" width="24" height="8" fill="#770099"/><rect x="1364" y="385" width="16" height="8" fill="#880099"/><rect x="1380" y="385" width="24" height="8" fill="#990099"/><rect x="1404" y="385" width="24" height="8" fill="#990088"/><rect x="1428" y="385" width="16" height="8" fill="#990077"/><rect x="1444" y="385" width="24" height="8" fill="#990066"/><rect x="1468" y="385" width="32" height="8" fill="#990055"/><rect x="1500" y="385" width="32" height="8" fill="#990044"/><rect x="1532" y="385" width="40" height="8" fill="#990033"/><rect x="1572" y="385" width="48" height="8" fill="#990022"/><rect x="1620" y="385" width="40" height="8" fill="#990011"/><rect x="1020" y="393" width="56" height="8" fill="#002299"/><rect x="1076" y="393" width="120" height="8" fill="#001199"/><rect x="1196" y="393" width="8" height="8" fill="#0022ff"/><rect x="1204" y="393" width="8" height="8" fill="#1122ff"/><rect x="1212" y="393" width="16" height="8" fill="#2211ff"/><rect x="1228" y="393" width="16" height="8" fill="#3311ff"/><rect x="1244" y="393" width="16" height="8" fill="#4411ff"/><rect x="1260" y="393" width="16" height="8" fill="#5500ff"/><rect x="1276" y="393" width="8" height="8" fill="#6600ff"/><rect x="1284" y="393" width="8" height="8" fill="#7700ff"/><rect x="1292" y="393" width="8" height="8" fill="#440099"/><rect x="1300" y="393" width="24" height="8" fill="#550099"/><rect x="1324" y="393" width="24" height="8" fill="#660099"/><rect x="1348" y="393" width="24" height="8" fill="#770099"/><rect x="1372" y="393" width="16" height="8" fill="#880099"/><rect x="1388" y="393" width="24" height="8" fill="#990099"/><rect x="1412" y="393" width="24" height="8" fill="#990088"/><rect x="1436" y="393" width="16" height="8" fill="#990077"/><rect x="1452" y="393" width="24" height="8" fill="#990066"/><rect x="1476" y="393" width="32" height="8" fill="#990055"/><rect x="1508" y="393" width="32" height="8" fill="#990044"/><rect x="1540" y="393" width="40" height="8" fill="#990033"/><rect x="1580" y="393" width="48" height="8" fill="#990022"/><rect x="1628" y="393" width="32" height="8" fill="#990011"/><rect x="1020" y="401" width="8" height="8" fill="#002299"/><rect x="1028" y="401" width="168" height="8" fill="#001199"/><rect x="1196" y="401" width="8" height="8" fill="#0022ff"/><rect x="1204" y="401" width="16" height="8" fill="#1111ff"/><rect x="1220" y="401" width="16" height="8" fill="#2211ff"/><rect x="1236" y="401" width="8" height="8" fill="#3311ff"/><rect x="1244" y="401" width="8" height="8" fill="#4411ff"/><rect x="1252" y="401" width="8" height="8" fill="#4400ff"/><rect x="1260" y="401" width="16" height="8" fill="#5500ff"/><rect x="1276" y="401" width="8" height="8" fill="#6600ff"/><rect x="1284" y="401" width="24" height="8" fill="#440099"/><rect x="1308" y="401" width="24" height="8" fill="#550099"/><rect x="1332" y="401" width="24" height="8" fill="#660099"/><rect x="1356" y="401" width="24" height="8" fill="#770099"/><rect x="1380" y="401" width="16" height="8" fill="#880099"/><rect x="1396" y="401" width="24" height="8" fill="#990099"/><rect x="1420" y="401" width="24" height="8" fill="#990088"/><rect x="1444" y="401" width="16" height="8" fill="#990077"/><rect x="1460" y="401" width="24" height="8" fill="#990066"/><rect x="1484" y="401" width="32" height="8" fill="#990055"/><rect x="1516" y="401" width="32" height="8" fill="#990044"/><rect x="1548" y="401" width="40" height="8" fill="#990033"/><rect x="1588" y="401" width="48" height="8" fill="#990022"/><rect x="1636" y="401" width="24" height="8" fill="#990011"/><rect x="1020" y="409" width="176" height="8" fill="#001199"/><rect x="1196" y="409" width="8" height="8" fill="#0011ff"/><rect x="1204" y="409" width="16" height="8" fill="#1111ff"/><rect x="1220" y="409" width="16" height="8" fill="#2211ff"/><rect x="1236" y="409" width="8" height="8" fill="#3311ff"/><rect x="1244" y="409" width="8" height="8" fill="#3300ff"/><rect x="1252" y="409" width="16" height="8" fill="#4400ff"/><rect x="1268" y="409" width="8" height="8" fill="#5500ff"/><rect x="1276" y="409" width="8" height="8" fill="#330099"/><rect x="1284" y="409" width="32" height="8" fill="#440099"/><rect x="1316" y="409" width="24" height="8" fill="#550099"/><rect x="1340" y="409" width="24" height="8" fill="#660099"/><rect x="1364" y="409" width="24" height="8" fill="#770099"/><rect x="1388" y="409" width="16" height="8" fill="#880099"/><rect x="1404" y="409" width="24" height="8" fill="#990099"/><rect x="1428" y="409" width="24" height="8" fill="#990088"/><rect x="1452" y="409" width="16" height="8" fill="#990077"/><rect x="1468" y="409" width="24" height="8" fill="#990066"/><rect x="1492" y="409" width="32" height="8" fill="#990055"/><rect x="1524" y="409" width="32" height="8" fill="#990044"/><rect x="1556" y="409" width="40" height="8" fill="#990033"/><rect x="1596" y="409" width="48" height="8" fill="#990022"/><rect x="1644" y="409" width="16" height="8" fill="#990011"/><rect x="1020" y="417" width="176" height="8" fill="#001199"/><rect x="1196" y="417" width="8" height="8" fill="#0011ff"/><rect x="1204" y="417" width="16" height="8" fill="#1111ff"/><rect x="1220" y="417" width="16" height="8" fill="#2211ff"/><rect x="1236" y="417" width="16" height="8" fill="#3300ff"/><rect x="1252" y="417" width="16" height="8" fill="#4400ff"/><rect x="1268" y="417" width="24" height="8" fill="#330099"/><rect x="1292" y="417" width="32" height="8" fill="#440099"/><rect x="1324" y="417" width="24" height="8" fill="#550099"/><rect x="1348" y="417" width="24" height="8" fill="#660099"/><rect x="1372" y="417" width="24" height="8" fill="#770099"/><rect x="1396" y="417" width="16" height="8" fill="#880099"/><rect x="1412" y="417" width="24" height="8" fill="#990099"/><rect x="1436" y="417" width="24" height="8" fill="#990088"/><rect x="1460" y="417" width="16" height="8" fill="#990077"/><rect x="1476" y="417" width="24" height="8" fill="#990066"/><rect x="1500" y="417" width="32" height="8" fill="#990055"/><rect x="1532" y="417" width="32" height="8" fill="#990044"/><rect x="1564" y="417" width="40" height="8" fill="#990033"/><rect x="1604" y="417" width="48" height="8" fill="#990022"/><rect x="1652" y="417" width="8" height="8" fill="#990011"/><rect x="1020" y="425" width="176" height="8" fill="#001199"/><rect x="1196" y="425" width="8" height="8" fill="#0011ff"/><rect x="1204" y="425" width="16" height="8" fill="#1111ff"/><rect x="1220" y="425" width="8" height="8" fill="#2211ff"/><rect x="1228" y="425" width="16" height="8" fill="#2200ff"/><rect x="1244" y="425" width="16" height="8" fill="#3300ff"/><rect x="1260" y="425" width="8" height="8" fill="#220099"/><rect x="1268" y="425" width="32" height="8" fill="#330099"/><rect x="1300" y="425" width="32" height="8" fill="#440099"/><rect x="1332" y="425" width="24" height="8" fill="#550099"/><rect x="1356" y="425" width="24" height="8" fill="#660099"/><rect x="1380" y="425" width="24" height="8" fill="#770099"/><rect x="1404" y="425" width="16" height="8" fill="#880099"/><rect x="1420" y="425" width="24" height="8" fill="#990099"/><rect x="1444" y="425" width="24" height="8" fill="#990088"/><rect x="1468" y="425" width="16" height="8" fill="#990077"/><rect x="1484" y="425" width="24" height="8" fill="#990066"/><rect x="1508" y="425" width="32" height="8" fill="#990055"/><rect x="1540" y="425" width="32" height="8" fill="#990044"/><rect x="1572" y="425" width="40" height="8" fill="#990033"/><rect x="1612" y="425" width="48" height="8" fill="#990022"/><rect x="1020" y="433" width="176" height="8" fill="#001199"/><rect x="1196" y="433" width="16" height="8" fill="#0011ff"/><rect x="1212" y="433" width="8" height="8" fill="#1111ff"/><rect x="1220" y="433" width="8" height="8" fill="#1100ff"/><rect x="1228" y="433" width="16" height="8" fill="#2200ff"/><rect x="1244" y="433" width="8" height="8" fill="#3300ff"/><rect x="1252" y="433" width="24" height="8" fill="#220099"/><rect x="1276" y="433" width="32" height="8" fill="#330099"/><rect x="1308" y="433" width="32" height="8" fill="#440099"/><rect x="1340" y="433" width="24" height="8" fill="#550099"/><rect x="1364" y="433" width="24" height="8" fill="#660099"/><rect x="1388" y="433" width="24" height="8" fill="#770099"/><rect x="1412" y="433" width="16" height="8" fill="#880099"/><rect x="1428" y="433" width="24" height="8" fill="#990099"/><rect x="1452" y="433" width="24" height="8" fill="#990088"/><rect x="1476" y="433" width="16" height="8" fill="#990077"/><rect x="1492" y="433" width="32" height="8" fill="#990066"/><rect x="1524" y="433" width="24" height="8" fill="#990055"/><rect x="1548" y="433" width="32" height="8" fill="#990044"/><rect x="1580" y="433" width="40" height="8" fill="#990033"/><rect x="1620" y="433" width="40" height="8" fill="#990022"/><rect x="1020" y="441" width="136" height="8" fill="#001199"/><rect x="1156" y="441" width="48" height="8" fill="#000099"/><rect x="1204" y="441" width="8" height="8" fill="#0011ff"/><rect x="1212" y="441" width="16" height="8" fill="#1100ff"/><rect x="1228" y="441" width="16" height="8" fill="#2200ff"/><rect x="1244" y="441" width="40" height="8" fill="#220099"/><rect x="1284" y="441" width="32" height="8" fill="#330099"/><rect x="1316" y="441" width="32" height="8" fill="#440099"/><rect x="1348" y="441" width="24" height="8" fill="#550099"/><rect x="1372" y="441" width="24" height="8" fill="#660099"/><rect x="1396" y="441" width="24" height="8" fill="#770099"/><rect x="1420" y="441" width="16" height="8" fill="#880099"/><rect x="1436" y="441" width="32" height="8" fill="#990099"/><rect x="1468" y="441" width="16" height="8" fill="#990088"/><rect x="1484" y="441" width="16" height="8" fill="#990077"/><rect x="1500" y="441" width="32" height="8" fill="#990066"/><rect x="1532" y="441" width="24" height="8" fill="#990055"/><rect x="1556" y="441" width="32" height="8" fill="#990044"/><rect x="1588" y="441" width="40" height="8" fill="#990033"/><rect x="1628" y="441" width="32" height="8" fill="#990022"/><rect x="1020" y="449" width="88" height="8" fill="#001199"/><rect x="1108" y="449" width="96" height="8" fill="#000099"/><rect x="1204" y="449" width="8" height="8" fill="#0000ff"/><rect x="1212" y="449" width="16" height="8" fill="#1100ff"/><rect x="1228" y="449" width="8" height="8" fill="#2200ff"/><rect x="1236" y="449" width="16" height="8" fill="#110099"/><rect x="1252" y="449" width="40" height="8" fill="#220099"/><rect x="1292" y="449" width="32" height="8" fill="#330099"/><rect x="1324" y="449" width="32" height="8" fill="#440099"/><rect x="1356" y="449" width="24" height="8" fill="#550099"/><rect x="1380" y="449" width="24" height="8" fill="#660099"/><rect x="1404" y="449" width="24" height="8" fill="#770099"/><rect x="1428" y="449" width="16" height="8" fill="#880099"/><rect x="1444" y="449" width="32" height="8" fill="#990099"/><rect x="1476" y="449" width="16" height="8" fill="#990088"/><rect x="1492" y="449" width="24" height="8" fill="#990077"/><rect x="1516" y="449" width="24" height="8" fill="#990066"/><rect x="1540" y="449" width="24" height="8" fill="#990055"/><rect x="1564" y="449" width="32" height="8" fill="#990044"/><rect x="1596" y="449" width="40" height="8" fill="#990033"/><rect x="1636" y="449" width="24" height="8" fill="#990022"/><rect x="1020" y="457" width="40" height="8" fill="#001199"/><rect x="1060" y="457" width="144" height="8" fill="#000099"/><rect x="1204" y="457" width="8" height="8" fill="#0000ff"/><rect x="1212" y="457" width="16" height="8" fill="#1100ff"/><rect x="1228" y="457" width="32" height="8" fill="#110099"/><rect x="1260" y="457" width="40" height="8" fill="#220099"/><rect x="1300" y="457" width="32" height="8" fill="#330099"/><rect x="1332" y="457" width="32" height="8" fill="#440099"/><rect x="1364" y="457" width="24" height="8" fill="#550099"/><rect x="1388" y="457" width="24" height="8" fill="#660099"/><rect x="1412" y="457" width="24" height="8" fill="#770099"/><rect x="1436" y="457" width="16" height="8" fill="#880099"/><rect x="1452" y="457" width="32" height="8" fill="#990099"/><rect x="1484" y="457" width="16" height="8" fill="#990088"/><rect x="1500" y="457" width="24" height="8" fill="#990077"/><rect x="1524" y="457" width="24" height="8" fill="#990066"/><rect x="1548" y="457" width="24" height="8" fill="#990055"/><rect x="1572" y="457" width="32" height="8" fill="#990044"/><rect x="1604" y="457" width="40" height="8" fill="#990033"/><rect x="1644" y="457" width="16" height="8" fill="#990022"/><rect x="1020" y="465" width="184" height="8" fill="#000099"/><rect x="1204" y="465" width="8" height="8" fill="#0000ff"/><rect x="1212" y="465" width="8" height="8" fill="#1100ff"/><rect x="1220" y="465" width="48" height="8" fill="#110099"/><rect x="1268" y="465" width="40" height="8" fill="#220099"/><rect x="1308" y="465" width="32" height="8" fill="#330099"/><rect x="1340" y="465" width="32" height="8" fill="#440099"/><rect x="1372" y="465" width="24" height="8" fill="#550099"/><rect x="1396" y="465" width="24" height="8" fill="#660099"/><rect x="1420" y="465" width="24" height="8" fill="#770099"/><rect x="1444" y="465" width="16" height="8" fill="#880099"/><rect x="1460" y="465" width="32" height="8" fill="#990099"/><rect x="1492" y="465" width="16" height="8" fill="#990088"/><rect x="1508" y="465" width="24" height="8" fill="#990077"/><rect x="1532" y="465" width="24" height="8" fill="#990066"/><rect x="1556" y="465" width="24" height="8" fill="#990055"/><rect x="1580" y="465" width="32" height="8" fill="#990044"/><rect x="1612" y="465" width="40" height="8" fill="#990033"/><rect x="1652" y="465" width="8" height="8" fill="#990022"/><rect x="1020" y="473" width="184" height="8" fill="#000099"/><rect x="1204" y="473" width="8" height="8" fill="#0000ff"/><rect x="1212" y="473" width="16" height="8" fill="#000099"/><rect x="1228" y="473" width="48" height="8" fill="#110099"/><rect x="1276" y="473" width="40" height="8" fill="#220099"/><rect x="1316" y="473" width="32" height="8" fill="#330099"/><rect x="1348" y="473" width="32" height="8" fill="#440099"/><rect x="1380" y="473" width="24" height="8" fill="#550099"/><rect x="1404" y="473" width="24" height="8" fill="#660099"/><rect x="1428" y="473" width="24" height="8" fill="#770099"/><rect x="1452" y="473" width="16" height="8" fill="#880099"/><rect x="1468" y="473" width="32" height="8" fill="#990099"/><rect x="1500" y="473" width="16" height="8" fill="#990088"/><rect x="1516" y="473" width="24" height="8" fill="#990077"/><rect x="1540" y="473" width="24" height="8" fill="#990066"/><rect x="1564" y="473" width="24" height="8" fill="#990055"/><rect x="1588" y="473" width="32" height="8" fill="#990044"/><rect x="1620" y="473" width="40" height="8" fill="#990033"/><rect x="1020" y="481" width="216" height="8" fill="#000099"/><rect x="1236" y="481" width="48" height="8" fill="#110099"/><rect x="1284" y="481" width="40" height="8" fill="#220099"/><rect x="1324" y="481" width="40" height="8" fill="#330099"/><rect x="1364" y="481" width="24" height="8" fill="#440099"/><rect x="1388" y="481" width="32" height="8" fill="#550099"/><rect x="1420" y="481" width="16" height="8" fill="#660099"/><rect x="1436" y="481" width="24" height="8" fill="#770099"/><rect x="1460" y="481" width="16" height="8" fill="#880099"/><rect x="1476" y="481" width="32" height="8" fill="#990099"/><rect x="1508" y="481" width="16" height="8" fill="#990088"/><rect x="1524" y="481" width="24" height="8" fill="#990077"/><rect x="1548" y="481" width="24" height="8" fill="#990066"/><rect x="1572" y="481" width="24" height="8" fill="#990055"/><rect x="1596" y="481" width="32" height="8" fill="#990044"/><rect x="1628" y="481" width="32" height="8" fill="#990033"/><rect x="1020" y="489" width="224" height="8" fill="#000099"/><rect x="1244" y="489" width="48" height="8" fill="#110099"/><rect x="1292" y="489" width="40" height="8" fill="#220099"/><rect x="1332" y="489" width="40" height="8" fill="#330099"/><rect x="1372" y="489" width="24" height="8" fill="#440099"/><rect x="1396" y="489" width="32" height="8" fill="#550099"/><rect x="1428" y="489" width="16" height="8" fill="#660099"/><rect x="1444" y="489" width="24" height="8" fill="#770099"/><rect x="1468" y="489" width="16" height="8" fill="#880099"/><rect x="1484" y="489" width="32" height="8" fill="#990099"/><rect x="1516" y="489" width="16" height="8" fill="#990088"/><rect x="1532" y="489" width="24" height="8" fill="#990077"/><rect x="1556" y="489" width="24" height="8" fill="#990066"/><rect x="1580" y="489" width="24" height="8" fill="#990055"/><rect x="1604" y="489" width="32" height="8" fill="#990044"/><rect x="1636" y="489" width="24" height="8" fill="#990033"/><rect x="1020" y="497" width="232" height="8" fill="#000099"/><rect x="1252" y="497" width="48" height="8" fill="#110099"/><rect x="1300" y="497" width="40" height="8" fill="#220099"/><rect x="1340" y="497" width="40" height="8" fill="#330099"/><rect x="1380" y="497" width="24" height="8" fill="#440099"/><rect x="1404" y="497" width="32" height="8" fill="#550099"/><rect x="1436" y="497" width="16" height="8" fill="#660099"/><rect x="1452" y="497" width="24" height="8" fill="#770099"/><rect x="1476" y="497" width="16" height="8" fill="#880099"/><rect x="1492" y="497" width="32" height="8" fill="#990099"/><rect x="1524" y="497" width="16" height="8" fill="#990088"/><rect x="1540" y="497" width="24" height="8" fill="#990077"/><rect x="1564" y="497" width="24" height="8" fill="#990066"/><rect x="1588" y="497" width="24" height="8" fill="#990055"/><rect x="1612" y="497" width="32" height="8" fill="#990044"/><rect x="1644" y="497" width="16" height="8" fill="#990033"/><rect x="1020" y="505" width="240" height="8" fill="#000099"/><rect x="1260" y="505" width="48" height="8" fill="#110099"/><rect x="1308" y="505" width="40" height="8" fill="#220099"/><rect x="1348" y="505" width="40" height="8" fill="#330099"/><rect x="1388" y="505" width="24" height="8" fill="#440099"/><rect x="1412" y="505" width="32" height="8" fill="#550099"/><rect x="1444" y="505" width="16" height="8" fill="#660099"/><rect x="1460" y="505" width="24" height="8" fill="#770099"/><rect x="1484" y="505" width="16" height="8" fill="#880099"/><rect x="1500" y="505" width="32" height="8" fill="#990099"/><rect x="1532" y="505" width="16" height="8" fill="#990088"/><rect x="1548" y="505" width="24" height="8" fill="#990077"/><rect x="1572" y="505" width="24" height="8" fill="#990066"/><rect x="1596" y="505" width="24" height="8" fill="#990055"/><rect x="1620" y="505" width="32" height="8" fill="#990044"/><rect x="1652" y="505" width="8" height="8" fill="#990033"/><rect x="1020" y="513" width="248" height="8" fill="#000099"/><rect x="1268" y="513" width="48" height="8" fill="#110099"/><rect x="1316" y="513" width="40" height="8" fill="#220099"/><rect x="1356" y="513" width="40" height="8" fill="#330099"/><rect x="1396" y="513" width="24" height="8" fill="#440099"/><rect x="1420" y="513" width="32" height="8" fill="#550099"/><rect x="1452" y="513" width="16" height="8" fill="#660099"/><rect x="1468" y="513" width="24" height="8" fill="#770099"/><rect x="1492" y="513" width="16" height="8" fill="#880099"/><rect x="1508" y="513" width="32" height="8" fill="#990099"/><rect x="1540" y="513" width="16" height="8" fill="#990088"/><rect x="1556" y="513" width="24" height="8" fill="#990077"/><rect x="1580" y="513" width="24" height="8" fill="#990066"/><rect x="1604" y="513" width="24" height="8" fill="#990055"/><rect x="1628" y="513" width="32" height="8" fill="#990044"/><rect x="1020" y="521" width="256" height="8" fill="#000099"/><rect x="1276" y="521" width="48" height="8" fill="#110099"/><rect x="1324" y="521" width="40" height="8" fill="#220099"/><rect x="1364" y="521" width="40" height="8" fill="#330099"/><rect x="1404" y="521" width="24" height="8" fill="#440099"/><rect x="1428" y="521" width="32" height="8" fill="#550099"/><rect x="1460" y="521" width="16" height="8" fill="#660099"/><rect x="1476" y="521" width="24" height="8" fill="#770099"/><rect x="1500" y="521" width="16" height="8" fill="#880099"/><rect x="1516" y="521" width="32" height="8" fill="#990099"/><rect x="1548" y="521" width="16" height="8" fill="#990088"/><rect x="1564" y="521" width="24" height="8" fill="#990077"/><rect x="1588" y="521" width="24" height="8" fill="#990066"/><rect x="1612" y="521" width="24" height="8" fill="#990055"/><rect x="1636" y="521" width="24" height="8" fill="#990044"/><rect x="1020" y="529" width="264" height="8" fill="#000099"/><rect x="1284" y="529" width="48" height="8" fill="#110099"/><rect x="1332" y="529" width="40" height="8" fill="#220099"/><rect x="1372" y="529" width="40" height="8" fill="#330099"/><rect x="1412" y="529" width="24" height="8" fill="#440099"/><rect x="1436" y="529" width="32" height="8" fill="#550099"/><rect x="1468" y="529" width="24" height="8" fill="#660099"/><rect x="1492" y="529" width="16" height="8" fill="#770099"/><rect x="1508" y="529" width="16" height="8" fill="#880099"/><rect x="1524" y="529" width="32" height="8" fill="#990099"/><rect x="1556" y="529" width="16" height="8" fill="#990088"/><rect x="1572" y="529" width="24" height="8" fill="#990077"/><rect x="1596" y="529" width="24" height="8" fill="#990066"/><rect x="1620" y="529" width="24" height="8" fill="#990055"/><rect x="1644" y="529" width="16" height="8" fill="#990044"/><rect x="1020" y="537" width="272" height="8" fill="#000099"/><rect x="1292" y="537" width="48" height="8" fill="#110099"/><rect x="1340" y="537" width="40" height="8" fill="#220099"/><rect x="1380" y="537" width="40" height="8" fill="#330099"/><rect x="1420" y="537" width="24" height="8" fill="#440099"/><rect x="1444" y="537" width="32" height="8" fill="#550099"/><rect x="1476" y="537" width="24" height="8" fill="#660099"/><rect x="1500" y="537" width="16" height="8" fill="#770099"/><rect x="1516" y="537" width="16" height="8" fill="#880099"/><rect x="1532" y="537" width="32" height="8" fill="#990099"/><rect x="1564" y="537" width="16" height="8" fill="#990088"/><rect x="1580" y="537" width="24" height="8" fill="#990077"/><rect x="1604" y="537" width="24" height="8" fill="#990066"/><rect x="1628" y="537" width="24" height="8" fill="#990055"/><rect x="1652" y="537" width="8" height="8" fill="#990044"/><rect x="1020" y="545" width="280" height="8" fill="#000099"/><rect x="1300" y="545" width="48" height="8" fill="#110099"/><rect x="1348" y="545" width="40" height="8" fill="#220099"/><rect x="1388" y="545" width="40" height="8" fill="#330099"/><rect x="1428" y="545" width="24" height="8" fill="#440099"/><rect x="1452" y="545" width="32" height="8" fill="#550099"/><rect x="1484" y="545" width="24" height="8" fill="#660099"/><rect x="1508" y="545" width="16" height="8" fill="#770099"/><rect x="1524" y="545" width="16" height="8" fill="#880099"/><rect x="1540" y="545" width="32" height="8" fill="#990099"/><rect x="1572" y="545" width="16" height="8" fill="#990088"/><rect x="1588" y="545" width="24" height="8" fill="#990077"/><rect x="1612" y="545" width="24" height="8" fill="#990066"/><rect x="1636" y="545" width="24" height="8" fill="#990055"/><rect x="1020" y="553" width="288" height="8" fill="#000099"/><rect x="1308" y="553" width="48" height="8" fill="#110099"/><rect x="1356" y="553" width="40" height="8" fill="#220099"/><rect x="1396" y="553" width="40" height="8" fill="#330099"/><rect x="1436" y="553" width="24" height="8" fill="#440099"/><rect x="1460" y="553" width="32" height="8" fill="#550099"/><rect x="1492" y="553" width="24" height="8" fill="#660099"/><rect x="1516" y="553" width="16" height="8" fill="#770099"/><rect x="1532" y="553" width="16" height="8" fill="#880099"/><rect x="1548" y="553" width="32" height="8" fill="#990099"/><rect x="1580" y="553" width="16" height="8" fill="#990088"/><rect x="1596" y="553" width="24" height="8" fill="#990077"/><rect x="1620" y="553" width="24" height="8" fill="#990066"/><rect x="1644" y="553" width="16" height="8" fill="#990055"/><rect x="1020" y="561" width="296" height="8" fill="#000099"/><rect x="1316" y="561" width="48" height="8" fill="#110099"/><rect x="1364" y="561" width="40" height="8" fill="#220099"/><rect x="1404" y="561" width="40" height="8" fill="#330099"/><rect x="1444" y="561" width="24" height="8" fill="#440099"/><rect x="1468" y="561" width="32" height="8" fill="#550099"/><rect x="1500" y="561" width="24" height="8" fill="#660099"/><rect x="1524" y="561" width="16" height="8" fill="#770099"/><rect x="1540" y="561" width="16" height="8" fill="#880099"/><rect x="1556" y="561" width="32" height="8" fill="#990099"/><rect x="1588" y="561" width="16" height="8" fill="#990088"/><rect x="1604" y="561" width="24" height="8" fill="#990077"/><rect x="1628" y="561" width="24" height="8" fill="#990066"/><rect x="1652" y="561" width="8" height="8" fill="#990055"/><rect x="1020" y="569" width="304" height="8" fill="#000099"/><rect x="1324" y="569" width="48" height="8" fill="#110099"/><rect x="1372" y="569" width="40" height="8" fill="#220099"/><rect x="1412" y="569" width="40" height="8" fill="#330099"/><rect x="1452" y="569" width="24" height="8" fill="#440099"/><rect x="1476" y="569" width="32" height="8" fill="#550099"/><rect x="1508" y="569" width="24" height="8" fill="#660099"/><rect x="1532" y="569" width="16" height="8" fill="#770099"/><rect x="1548" y="569" width="16" height="8" fill="#880099"/><rect x="1564" y="569" width="32" height="8" fill="#990099"/><rect x="1596" y="569" width="16" height="8" fill="#990088"/><rect x="1612" y="569" width="24" height="8" fill="#990077"/><rect x="1636" y="569" width="24" height="8" fill="#990066"/><rect x="1020" y="577" width="312" height="8" fill="#000099"/><rect x="1332" y="577" width="48" height="8" fill="#110099"/><rect x="1380" y="577" width="40" height="8" fill="#220099"/><rect x="1420" y="577" width="40" height="8" fill="#330099"/><rect x="1460" y="577" width="24" height="8" fill="#440099"/><rect x="1484" y="577" width="32" height="8" fill="#550099"/><rect x="1516" y="577" width="24" height="8" fill="#660099"/><rect x="1540" y="577" width="16" height="8" fill="#770099"/><rect x="1556" y="577" width="16" height="8" fill="#880099"/><rect x="1572" y="577" width="32" height="8" fill="#990099"/><rect x="1604" y="577" width="16" height="8" fill="#990088"/><rect x="1620" y="577" width="24" height="8" fill="#990077"/><rect x="1644" y="577" width="16" height="8" fill="#990066"/><rect x="1020" y="585" width="320" height="8" fill="#000099"/><rect x="1340" y="585" width="48" height="8" fill="#110099"/><rect x="1388" y="585" width="40" height="8" fill="#220099"/><rect x="1428" y="585" width="40" height="8" fill="#330099"/><rect x="1468" y="585" width="24" height="8" fill="#440099"/><rect x="1492" y="585" width="32" height="8" fill="#550099"/><rect x="1524" y="585" width="24" height="8" fill="#660099"/><rect x="1548" y="585" width="16" height="8" fill="#770099"/><rect x="1564" y="585" width="24" height="8" fill="#880099"/><rect x="1588" y="585" width="24" height="8" fill="#990099"/><rect x="1612" y="585" width="16" height="8" fill="#990088"/><rect x="1628" y="585" width="24" height="8" fill="#990077"/><rect x="1652" y="585" width="8" height="8" fill="#990066"/><rect x="1020" y="593" width="328" height="8" fill="#000099"/><rect x="1348" y="593" width="48" height="8" fill="#110099"/><rect x="1396" y="593" width="40" height="8" fill="#220099"/><rect x="1436" y="593" width="40" height="8" fill="#330099"/><rect x="1476" y="593" width="32" height="8" fill="#440099"/><rect x="1508" y="593" width="24" height="8" fill="#550099"/><rect x="1532" y="593" width="24" height="8" fill="#660099"/><rect x="1556" y="593" width="16" height="8" fill="#770099"/><rect x="1572" y="593" width="24" height="8" fill="#880099"/><rect x="1596" y="593" width="24" height="8" fill="#990099"/><rect x="1620" y="593" width="16" height="8" fill="#990088"/><rect x="1636" y="593" width="24" height="8" fill="#990077"/><rect x="1020" y="601" width="336" height="8" fill="#000099"/><rect x="1356" y="601" width="48" height="8" fill="#110099"/><rect x="1404" y="601" width="40" height="8" fill="#220099"/><rect x="1444" y="601" width="40" height="8" fill="#330099"/><rect x="1484" y="601" width="32" height="8" fill="#440099"/><rect x="1516" y="601" width="24" height="8" fill="#550099"/><rect x="1540" y="601" width="24" height="8" fill="#660099"/><rect x="1564" y="601" width="16" height="8" fill="#770099"/><rect x="1580" y="601" width="24" height="8" fill="#880099"/><rect x="1604" y="601" width="24" height="8" fill="#990099"/><rect x="1628" y="601" width="16" height="8" fill="#990088"/><rect x="1644" y="601" width="16" height="8" fill="#990077"/><rect x="1020" y="609" width="344" height="8" fill="#000099"/><rect x="1364" y="609" width="48" height="8" fill="#110099"/><rect x="1412" y="609" width="40" height="8" fill="#220099"/><rect x="1452" y="609" width="40" height="8" fill="#330099"/><rect x="1492" y="609" width="32" height="8" fill="#440099"/><rect x="1524" y="609" width="24" height="8" fill="#550099"/><rect x="1548" y="609" width="24" height="8" fill="#660099"/><rect x="1572" y="609" width="16" height="8" fill="#770099"/><rect x="1588" y="609" width="24" height="8" fill="#880099"/><rect x="1612" y="609" width="24" height="8" fill="#990099"/><rect x="1636" y="609" width="16" height="8" fill="#990088"/><rect x="1652" y="609" width="8" height="8" fill="#990077"/></g><g id="fb31" shape-rendering="crispEdges"><rect x="639" y="679" width="10" height="10" fill="#73ffc6"/><rect x="649" y="679" width="10" height="10" fill="#78ffc5"/><rect x="659" y="679" width="10" height="10" fill="#7cffc5"/><rect x="669" y="679" width="10" height="10" fill="#81ffc5"/><rect x="679" y="679" width="10" height="10" fill="#86ffc5"/><rect x="689" y="679" width="10" height="10" fill="#8bffc4"/><rect x="699" y="679" width="10" height="10" fill="#90ffc4"/><rect x="709" y="679" width="10" height="10" fill="#94ffc4"/><rect x="719" y="679" width="10" height="10" fill="#99ffc4"/><rect x="729" y="679" width="10" height="10" fill="#9effc3"/><rect x="739" y="679" width="10" height="10" fill="#a4ffc3"/><rect x="749" y="679" width="10" height="10" fill="#a9ffc3"/><rect x="759" y="679" width="10" height="10" fill="#aeffc2"/><rect x="769" y="679" width="10" height="10" fill="#b3ffc2"/><rect x="779" y="679" width="10" height="10" fill="#b8ffc2"/><rect x="789" y="679" width="10" height="10" fill="#beffc2"/><rect x="799" y="679" width="10" height="10" fill="#c3ffc1"/><rect x="809" y="679" width="10" height="10" fill="#c8ffc1"/><rect x="819" y="679" width="10" height="10" fill="#ceffc1"/><rect x="829" y="679" width="10" height="10" fill="#d3ffc0"/><rect x="839" y="679" width="10" height="10" fill="#d9ffc0"/><rect x="849" y="679" width="10" height="10" fill="#deffc0"/><rect x="859" y="679" width="10" height="10" fill="#e4ffc0"/><rect x="869" y="679" width="10" height="10" fill="#eaffbf"/><rect x="879" y="679" width="10" height="10" fill="#f0ffbf"/><rect x="889" y="679" width="10" height="10" fill="#f5ffbf"/><rect x="899" y="679" width="10" height="10" fill="#fbffbe"/><rect x="909" y="679" width="10" height="10" fill="#fffdbc"/><rect x="919" y="679" width="10" height="10" fill="#fff7b8"/><rect x="929" y="679" width="10" height="10" fill="#fff1b3"/><rect x="939" y="679" width="10" height="10" fill="#ffecaf"/><rect x="949" y="679" width="10" height="10" fill="#ffe7ab"/><rect x="959" y="679" width="10" height="10" fill="#ffe2a7"/><rect x="969" y="679" width="10" height="10" fill="#ffdda3"/><rect x="639" y="689" width="10" height="10" fill="#77ffcb"/><rect x="649" y="689" width="10" height="10" fill="#7bffcb"/><rect x="659" y="689" width="10" height="10" fill="#80ffca"/><rect x="669" y="689" width="10" height="10" fill="#85ffca"/><rect x="679" y="689" width="10" height="10" fill="#8affca"/><rect x="689" y="689" width="10" height="10" fill="#8fffca"/><rect x="699" y="689" width="10" height="10" fill="#94ffca"/><rect x="709" y="689" width="10" height="10" fill="#99ffc9"/><rect x="719" y="689" width="10" height="10" fill="#9effc9"/><rect x="729" y="689" width="10" height="10" fill="#a3ffc9"/><rect x="739" y="689" width="10" height="10" fill="#a8ffc9"/><rect x="749" y="689" width="10" height="10" fill="#adffc8"/><rect x="759" y="689" width="10" height="10" fill="#b3ffc8"/><rect x="769" y="689" width="10" height="10" fill="#b8ffc8"/><rect x="779" y="689" width="10" height="10" fill="#bdffc8"/><rect x="789" y="689" width="10" height="10" fill="#c3ffc7"/><rect x="799" y="689" width="10" height="10" fill="#c8ffc7"/><rect x="809" y="689" width="10" height="10" fill="#ceffc7"/><rect x="819" y="689" width="10" height="10" fill="#d3ffc7"/><rect x="829" y="689" width="10" height="10" fill="#d9ffc6"/><rect x="839" y="689" width="10" height="10" fill="#dfffc6"/><rect x="849" y="689" width="10" height="10" fill="#e4ffc6"/><rect x="859" y="689" width="10" height="10" fill="#eaffc5"/><rect x="869" y="689" width="10" height="10" fill="#f0ffc5"/><rect x="879" y="689" width="10" height="10" fill="#f6ffc5"/><rect x="889" y="689" width="10" height="10" fill="#fcffc5"/><rect x="899" y="689" width="10" height="10" fill="#fffcc2"/><rect x="909" y="689" width="10" height="10" fill="#fff6bd"/><rect x="919" y="689" width="10" height="10" fill="#fff1b9"/><rect x="929" y="689" width="10" height="10" fill="#ffebb4"/><rect x="939" y="689" width="10" height="10" fill="#ffe6b0"/><rect x="949" y="689" width="10" height="10" fill="#ffe1ac"/><rect x="959" y="689" width="10" height="10" fill="#ffdca8"/><rect x="969" y="689" width="10" height="10" fill="#ffd8a4"/><rect x="639" y="699" width="10" height="10" fill="#7affd0"/><rect x="649" y="699" width="10" height="10" fill="#7fffd0"/><rect x="659" y="699" width="10" height="10" fill="#84ffd0"/><rect x="669" y="699" width="10" height="10" fill="#89ffd0"/><rect x="679" y="699" width="10" height="10" fill="#8effd0"/><rect x="689" y="699" width="10" height="10" fill="#93ffcf"/><rect x="699" y="699" width="10" height="10" fill="#98ffcf"/><rect x="709" y="699" width="10" height="10" fill="#9dffcf"/><rect x="719" y="699" width="10" height="10" fill="#a2ffcf"/><rect x="729" y="699" width="10" height="10" fill="#a8ffcf"/><rect x="739" y="699" width="10" height="10" fill="#adffce"/><rect x="749" y="699" width="10" height="10" fill="#b2ffce"/><rect x="759" y="699" width="10" height="10" fill="#b8ffce"/><rect x="769" y="699" width="10" height="10" fill="#bdffce"/><rect x="779" y="699" width="10" height="10" fill="#c2ffcd"/><rect x="789" y="699" width="10" height="10" fill="#c8ffcd"/><rect x="799" y="699" width="10" height="10" fill="#ceffcd"/><rect x="809" y="699" width="10" height="10" fill="#d3ffcd"/><rect x="819" y="699" width="10" height="10" fill="#d9ffcc"/><rect x="829" y="699" width="10" height="10" fill="#dfffcc"/><rect x="839" y="699" width="10" height="10" fill="#e4ffcc"/><rect x="849" y="699" width="10" height="10" fill="#eaffcc"/><rect x="859" y="699" width="10" height="10" fill="#f0ffcb"/><rect x="869" y="699" width="10" height="10" fill="#f6ffcb"/><rect x="879" y="699" width="10" height="10" fill="#fcffcb"/><rect x="889" y="699" width="10" height="10" fill="#fffcc8"/><rect x="899" y="699" width="10" height="10" fill="#fff6c3"/><rect x="909" y="699" width="10" height="10" fill="#fff0bf"/><rect x="919" y="699" width="10" height="10" fill="#ffebba"/><rect x="929" y="699" width="10" height="10" fill="#ffe6b6"/><rect x="939" y="699" width="10" height="10" fill="#ffe0b1"/><rect x="949" y="699" width="10" height="10" fill="#ffdcad"/><rect x="959" y="699" width="10" height="10" fill="#ffd7a9"/><rect x="969" y="699" width="10" height="10" fill="#ffd2a5"/><rect x="639" y="709" width="10" height="10" fill="#7effd6"/><rect x="649" y="709" width="10" height="10" fill="#83ffd6"/><rect x="659" y="709" width="10" height="10" fill="#88ffd6"/><rect x="669" y="709" width="10" height="10" fill="#8dffd6"/><rect x="679" y="709" width="10" height="10" fill="#92ffd5"/><rect x="689" y="709" width="10" height="10" fill="#98ffd5"/><rect x="699" y="709" width="10" height="10" fill="#9dffd5"/><rect x="709" y="709" width="10" height="10" fill="#a2ffd5"/><rect x="719" y="709" width="10" height="10" fill="#a7ffd5"/><rect x="729" y="709" width="10" height="10" fill="#acffd4"/><rect x="739" y="709" width="10" height="10" fill="#b2ffd4"/><rect x="749" y="709" width="10" height="10" fill="#b7ffd4"/><rect x="759" y="709" width="10" height="10" fill="#bdffd4"/><rect x="769" y="709" width="10" height="10" fill="#c2ffd4"/><rect x="779" y="709" width="10" height="10" fill="#c8ffd3"/><rect x="789" y="709" width="10" height="10" fill="#cdffd3"/><rect x="799" y="709" width="10" height="10" fill="#d3ffd3"/><rect x="809" y="709" width="10" height="10" fill="#d9ffd3"/><rect x="819" y="709" width="10" height="10" fill="#dfffd3"/><rect x="829" y="709" width="10" height="10" fill="#e5ffd2"/><rect x="839" y="709" width="10" height="10" fill="#eaffd2"/><rect x="849" y="709" width="10" height="10" fill="#f0ffd2"/><rect x="859" y="709" width="10" height="10" fill="#f6ffd2"/><rect x="869" y="709" width="10" height="10" fill="#fdffd2"/><rect x="879" y="709" width="10" height="10" fill="#fffbce"/><rect x="889" y="709" width="10" height="10" fill="#fff5c9"/><rect x="899" y="709" width="10" height="10" fill="#fff0c4"/><rect x="909" y="709" width="10" height="10" fill="#ffeac0"/><rect x="919" y="709" width="10" height="10" fill="#ffe5bb"/><rect x="929" y="709" width="10" height="10" fill="#ffe0b7"/><rect x="939" y="709" width="10" height="10" fill="#ffdbb2"/><rect x="949" y="709" width="10" height="10" fill="#ffd6ae"/><rect x="959" y="709" width="10" height="10" fill="#ffd1aa"/><rect x="969" y="709" width="10" height="10" fill="#ffcda7"/><rect x="639" y="719" width="10" height="10" fill="#82ffdc"/><rect x="649" y="719" width="10" height="10" fill="#88ffdc"/><rect x="659" y="719" width="10" height="10" fill="#8dffdc"/><rect x="669" y="719" width="10" height="10" fill="#92ffdb"/><rect x="679" y="719" width="10" height="10" fill="#97ffdb"/><rect x="689" y="719" width="10" height="10" fill="#9cffdb"/><rect x="699" y="719" width="10" height="10" fill="#a1ffdb"/><rect x="709" y="719" width="10" height="10" fill="#a7ffdb"/><rect x="719" y="719" width="10" height="10" fill="#acffdb"/><rect x="729" y="719" width="10" height="10" fill="#b1ffda"/><rect x="739" y="719" width="10" height="10" fill="#b7ffda"/><rect x="749" y="719" width="10" height="10" fill="#bcffda"/><rect x="759" y="719" width="10" height="10" fill="#c2ffda"/><rect x="769" y="719" width="10" height="10" fill="#c8ffda"/><rect x="779" y="719" width="10" height="10" fill="#cdffda"/><rect x="789" y="719" width="10" height="10" fill="#d3ffd9"/><rect x="799" y="719" width="10" height="10" fill="#d9ffd9"/><rect x="809" y="719" width="10" height="10" fill="#dfffd9"/><rect x="819" y="719" width="10" height="10" fill="#e5ffd9"/><rect x="829" y="719" width="10" height="10" fill="#ebffd9"/><rect x="839" y="719" width="10" height="10" fill="#f1ffd9"/><rect x="849" y="719" width="10" height="10" fill="#f7ffd8"/><rect x="859" y="719" width="10" height="10" fill="#fdffd8"/><rect x="869" y="719" width="10" height="10" fill="#fffbd4"/><rect x="879" y="719" width="10" height="10" fill="#fff5cf"/><rect x="889" y="719" width="10" height="10" fill="#ffefca"/><rect x="899" y="719" width="10" height="10" fill="#ffeac5"/><rect x="909" y="719" width="10" height="10" fill="#ffe4c1"/><rect x="919" y="719" width="10" height="10" fill="#ffdfbc"/><rect x="929" y="719" width="10" height="10" fill="#ffdab8"/><rect x="939" y="719" width="10" height="10" fill="#ffd5b4"/><rect x="949" y="719" width="10" height="10" fill="#ffd1af"/><rect x="959" y="719" width="10" height="10" fill="#ffccab"/><rect x="969" y="719" width="10" height="10" fill="#ffc8a8"/><rect x="639" y="729" width="10" height="10" fill="#87ffe2"/><rect x="649" y="729" width="10" height="10" fill="#8cffe2"/><rect x="659" y="729" width="10" height="10" fill="#91ffe2"/><rect x="669" y="729" width="10" height="10" fill="#96ffe2"/><rect x="679" y="729" width="10" height="10" fill="#9bffe1"/><rect x="689" y="729" width="10" height="10" fill="#a1ffe1"/><rect x="699" y="729" width="10" height="10" fill="#a6ffe1"/><rect x="709" y="729" width="10" height="10" fill="#acffe1"/><rect x="719" y="729" width="10" height="10" fill="#b1ffe1"/><rect x="729" y="729" width="10" height="10" fill="#b7ffe1"/><rect x="739" y="729" width="10" height="10" fill="#bcffe1"/><rect x="749" y="729" width="10" height="10" fill="#c2ffe0"/><rect x="759" y="729" width="10" height="10" fill="#c8ffe0"/><rect x="769" y="729" width="10" height="10" fill="#cdffe0"/><rect x="779" y="729" width="10" height="10" fill="#d3ffe0"/><rect x="789" y="729" width="10" height="10" fill="#d9ffe0"/><rect x="799" y="729" width="10" height="10" fill="#dfffe0"/><rect x="809" y="729" width="10" height="10" fill="#e5ffe0"/><rect x="819" y="729" width="10" height="10" fill="#ebffdf"/><rect x="829" y="729" width="10" height="10" fill="#f1ffdf"/><rect x="839" y="729" width="10" height="10" fill="#f7ffdf"/><rect x="849" y="729" width="10" height="10" fill="#fdffdf"/><rect x="859" y="729" width="10" height="10" fill="#fffadb"/><rect x="869" y="729" width="10" height="10" fill="#fff4d5"/><rect x="879" y="729" width="10" height="10" fill="#ffefd0"/><rect x="889" y="729" width="10" height="10" fill="#ffe9cb"/><rect x="899" y="729" width="10" height="10" fill="#ffe4c6"/><rect x="909" y="729" width="10" height="10" fill="#ffdec2"/><rect x="919" y="729" width="10" height="10" fill="#ffd9bd"/><rect x="929" y="729" width="10" height="10" fill="#ffd5b9"/><rect x="939" y="729" width="10" height="10" fill="#ffd0b5"/><rect x="949" y="729" width="10" height="10" fill="#ffcbb1"/><rect x="959" y="729" width="10" height="10" fill="#ffc7ad"/><rect x="969" y="729" width="10" height="10" fill="#ffc3a9"/><rect x="639" y="739" width="10" height="10" fill="#8bffe8"/><rect x="649" y="739" width="10" height="10" fill="#90ffe8"/><rect x="659" y="739" width="10" height="10" fill="#95ffe8"/><rect x="669" y="739" width="10" height="10" fill="#9bffe8"/><rect x="679" y="739" width="10" height="10" fill="#a0ffe8"/><rect x="689" y="739" width="10" height="10" fill="#a6ffe8"/><rect x="699" y="739" width="10" height="10" fill="#abffe8"/><rect x="709" y="739" width="10" height="10" fill="#b1ffe7"/><rect x="719" y="739" width="10" height="10" fill="#b6ffe7"/><rect x="729" y="739" width="10" height="10" fill="#bcffe7"/><rect x="739" y="739" width="10" height="10" fill="#c2ffe7"/><rect x="749" y="739" width="10" height="10" fill="#c7ffe7"/><rect x="759" y="739" width="10" height="10" fill="#cdffe7"/><rect x="769" y="739" width="10" height="10" fill="#d3ffe7"/><rect x="779" y="739" width="10" height="10" fill="#d9ffe7"/><rect x="789" y="739" width="10" height="10" fill="#dfffe7"/><rect x="799" y="739" width="10" height="10" fill="#e5ffe6"/><rect x="809" y="739" width="10" height="10" fill="#ebffe6"/><rect x="819" y="739" width="10" height="10" fill="#f1ffe6"/><rect x="829" y="739" width="10" height="10" fill="#f8ffe6"/><rect x="839" y="739" width="10" height="10" fill="#feffe6"/><rect x="849" y="739" width="10" height="10" fill="#fffae1"/><rect x="859" y="739" width="10" height="10" fill="#fff4dc"/><rect x="869" y="739" width="10" height="10" fill="#ffeed6"/><rect x="879" y="739" width="10" height="10" fill="#ffe8d1"/><rect x="889" y="739" width="10" height="10" fill="#ffe3cc"/><rect x="899" y="739" width="10" height="10" fill="#ffdec7"/><rect x="909" y="739" width="10" height="10" fill="#ffd9c3"/><rect x="919" y="739" width="10" height="10" fill="#ffd4be"/><rect x="929" y="739" width="10" height="10" fill="#ffcfba"/><rect x="939" y="739" width="10" height="10" fill="#ffcbb6"/><rect x="949" y="739" width="10" height="10" fill="#ffc6b2"/><rect x="959" y="739" width="10" height="10" fill="#ffc2ae"/><rect x="969" y="739" width="10" height="10" fill="#ffbeaa"/><rect x="639" y="749" width="10" height="10" fill="#8fffef"/><rect x="649" y="749" width="10" height="10" fill="#95ffee"/><rect x="659" y="749" width="10" height="10" fill="#9affee"/><rect x="669" y="749" width="10" height="10" fill="#a0ffee"/><rect x="679" y="749" width="10" height="10" fill="#a5ffee"/><rect x="689" y="749" width="10" height="10" fill="#abffee"/><rect x="699" y="749" width="10" height="10" fill="#b0ffee"/><rect x="709" y="749" width="10" height="10" fill="#b6ffee"/><rect x="719" y="749" width="10" height="10" fill="#bcffee"/><rect x="729" y="749" width="10" height="10" fill="#c1ffee"/><rect x="739" y="749" width="10" height="10" fill="#c7ffee"/><rect x="749" y="749" width="10" height="10" fill="#cdffee"/><rect x="759" y="749" width="10" height="10" fill="#d3ffee"/><rect x="769" y="749" width="10" height="10" fill="#d9ffee"/><rect x="779" y="749" width="10" height="10" fill="#dfffee"/><rect x="789" y="749" width="10" height="10" fill="#e5ffed"/><rect x="799" y="749" width="10" height="10" fill="#ebffed"/><rect x="809" y="749" width="10" height="10" fill="#f2ffed"/><rect x="819" y="749" width="10" height="10" fill="#f8ffed"/><rect x="829" y="749" width="10" height="10" fill="#feffed"/><rect x="839" y="749" width="10" height="10" fill="#fff9e8"/><rect x="849" y="749" width="10" height="10" fill="#fff3e2"/><rect x="859" y="749" width="10" height="10" fill="#ffeddc"/><rect x="869" y="749" width="10" height="10" fill="#ffe8d7"/><rect x="879" y="749" width="10" height="10" fill="#ffe2d2"/><rect x="889" y="749" width="10" height="10" fill="#ffddcd"/><rect x="899" y="749" width="10" height="10" fill="#ffd8c8"/><rect x="909" y="749" width="10" height="10" fill="#ffd3c4"/><rect x="919" y="749" width="10" height="10" fill="#ffcebf"/><rect x="929" y="749" width="10" height="10" fill="#ffcabb"/><rect x="939" y="749" width="10" height="10" fill="#ffc5b7"/><rect x="949" y="749" width="10" height="10" fill="#ffc1b3"/><rect x="959" y="749" width="10" height="10" fill="#ffbdaf"/><rect x="969" y="749" width="10" height="10" fill="#ffb9ab"/><rect x="639" y="759" width="10" height="10" fill="#94fff5"/><rect x="649" y="759" width="10" height="10" fill="#99fff5"/><rect x="659" y="759" width="10" height="10" fill="#9ffff5"/><rect x="669" y="759" width="10" height="10" fill="#a5fff5"/><rect x="679" y="759" width="10" height="10" fill="#aafff5"/><rect x="689" y="759" width="10" height="10" fill="#b0fff5"/><rect x="699" y="759" width="10" height="10" fill="#b5fff5"/><rect x="709" y="759" width="10" height="10" fill="#bbfff5"/><rect x="719" y="759" width="10" height="10" fill="#c1fff5"/><rect x="729" y="759" width="10" height="10" fill="#c7fff5"/><rect x="739" y="759" width="10" height="10" fill="#cdfff5"/><rect x="749" y="759" width="10" height="10" fill="#d3fff5"/><rect x="759" y="759" width="10" height="10" fill="#d9fff5"/><rect x="769" y="759" width="10" height="10" fill="#dffff5"/><rect x="779" y="759" width="10" height="10" fill="#e5fff5"/><rect x="789" y="759" width="10" height="10" fill="#ecfff5"/><rect x="799" y="759" width="10" height="10" fill="#f2fff5"/><rect x="809" y="759" width="10" height="10" fill="#f8fff4"/><rect x="819" y="759" width="10" height="10" fill="#fffff4"/><rect x="829" y="759" width="10" height="10" fill="#fff9ee"/><rect x="839" y="759" width="10" height="10" fill="#fff3e8"/><rect x="849" y="759" width="10" height="10" fill="#ffede3"/><rect x="859" y="759" width="10" height="10" fill="#ffe7dd"/><rect x="869" y="759" width="10" height="10" fill="#ffe1d8"/><rect x="879" y="759" width="10" height="10" fill="#ffdcd3"/><rect x="889" y="759" width="10" height="10" fill="#ffd7ce"/><rect x="899" y="759" width="10" height="10" fill="#ffd2c9"/><rect x="909" y="759" width="10" height="10" fill="#ffcdc5"/><rect x="919" y="759" width="10" height="10" fill="#ffc9c0"/><rect x="929" y="759" width="10" height="10" fill="#ffc4bc"/><rect x="939" y="759" width="10" height="10" fill="#ffc0b8"/><rect x="949" y="759" width="10" height="10" fill="#ffbcb4"/><rect x="959" y="759" width="10" height="10" fill="#ffb8b0"/><rect x="969" y="759" width="10" height="10" fill="#ffb4ac"/><rect x="639" y="769" width="10" height="10" fill="#99fffc"/><rect x="649" y="769" width="10" height="10" fill="#9efffc"/><rect x="659" y="769" width="10" height="10" fill="#a4fffc"/><rect x="669" y="769" width="10" height="10" fill="#aafffc"/><rect x="679" y="769" width="10" height="10" fill="#affffc"/><rect x="689" y="769" width="10" height="10" fill="#b5fffc"/><rect x="699" y="769" width="10" height="10" fill="#bbfffc"/><rect x="709" y="769" width="10" height="10" fill="#c1fffc"/><rect x="719" y="769" width="10" height="10" fill="#c7fffc"/><rect x="729" y="769" width="10" height="10" fill="#cdfffc"/><rect x="739" y="769" width="10" height="10" fill="#d3fffc"/><rect x="749" y="769" width="10" height="10" fill="#d9fffc"/><rect x="759" y="769" width="10" height="10" fill="#dffffc"/><rect x="769" y="769" width="10" height="10" fill="#e6fffc"/><rect x="779" y="769" width="10" height="10" fill="#ecfffc"/><rect x="789" y="769" width="10" height="10" fill="#f2fffc"/><rect x="799" y="769" width="10" height="10" fill="#f9fffc"/><rect x="809" y="769" width="10" height="10" fill="#fffffc"/><rect x="819" y="769" width="10" height="10" fill="#fff8f5"/><rect x="829" y="769" width="10" height="10" fill="#fff2ef"/><rect x="839" y="769" width="10" height="10" fill="#ffece9"/><rect x="849" y="769" width="10" height="10" fill="#ffe6e3"/><rect x="859" y="769" width="10" height="10" fill="#ffe1de"/><rect x="869" y="769" width="10" height="10" fill="#ffdbd9"/><rect x="879" y="769" width="10" height="10" fill="#ffd6d4"/><rect x="889" y="769" width="10" height="10" fill="#ffd1cf"/><rect x="899" y="769" width="10" height="10" fill="#ffcdca"/><rect x="909" y="769" width="10" height="10" fill="#ffc8c6"/><rect x="919" y="769" width="10" height="10" fill="#ffc3c1"/><rect x="929" y="769" width="10" height="10" fill="#ffbfbd"/><rect x="939" y="769" width="10" height="10" fill="#ffbbb9"/><rect x="949" y="769" width="10" height="10" fill="#ffb7b5"/><rect x="959" y="769" width="10" height="10" fill="#ffb3b1"/><rect x="969" y="769" width="10" height="10" fill="#ffafad"/><rect x="639" y="779" width="10" height="10" fill="#9bfbff"/><rect x="649" y="779" width="10" height="10" fill="#a1fbff"/><rect x="659" y="779" width="10" height="10" fill="#a6fbff"/><rect x="669" y="779" width="10" height="10" fill="#acfbff"/><rect x="679" y="779" width="10" height="10" fill="#b2fbff"/><rect x="689" y="779" width="10" height="10" fill="#b8fbff"/><rect x="699" y="779" width="10" height="10" fill="#bdfbff"/><rect x="709" y="779" width="10" height="10" fill="#c3fbff"/><rect x="719" y="779" width="10" height="10" fill="#c9fbff"/><rect x="729" y="779" width="10" height="10" fill="#cffbff"/><rect x="739" y="779" width="10" height="10" fill="#d5fbff"/><rect x="749" y="779" width="10" height="10" fill="#dcfbff"/><rect x="759" y="779" width="10" height="10" fill="#e2fbff"/><rect x="769" y="779" width="10" height="10" fill="#e8fbff"/><rect x="779" y="779" width="10" height="10" fill="#eefbff"/><rect x="789" y="779" width="10" height="10" fill="#f5faff"/><rect x="799" y="779" width="10" height="10" fill="#fbfaff"/><rect x="809" y="779" width="10" height="10" fill="#fff8fc"/><rect x="819" y="779" width="10" height="10" fill="#fff1f6"/><rect x="829" y="779" width="10" height="10" fill="#ffebf0"/><rect x="839" y="779" width="10" height="10" fill="#ffe6ea"/><rect x="849" y="779" width="10" height="10" fill="#ffe0e4"/><rect x="859" y="779" width="10" height="10" fill="#ffdbdf"/><rect x="869" y="779" width="10" height="10" fill="#ffd5da"/><rect x="879" y="779" width="10" height="10" fill="#ffd1d5"/><rect x="889" y="779" width="10" height="10" fill="#ffccd0"/><rect x="899" y="779" width="10" height="10" fill="#ffc7cb"/><rect x="909" y="779" width="10" height="10" fill="#ffc3c6"/><rect x="919" y="779" width="10" height="10" fill="#ffbec2"/><rect x="929" y="779" width="10" height="10" fill="#ffbabe"/><rect x="939" y="779" width="10" height="10" fill="#ffb6ba"/><rect x="949" y="779" width="10" height="10" fill="#ffb2b6"/><rect x="959" y="779" width="10" height="10" fill="#ffaeb2"/><rect x="969" y="779" width="10" height="10" fill="#ffaaae"/><rect x="639" y="789" width="10" height="10" fill="#9cf4ff"/><rect x="649" y="789" width="10" height="10" fill="#a1f4ff"/><rect x="659" y="789" width="10" height="10" fill="#a7f4ff"/><rect x="669" y="789" width="10" height="10" fill="#adf4ff"/><rect x="679" y="789" width="10" height="10" fill="#b2f4ff"/><rect x="689" y="789" width="10" height="10" fill="#b8f4ff"/><rect x="699" y="789" width="10" height="10" fill="#bef4ff"/><rect x="709" y="789" width="10" height="10" fill="#c3f4ff"/><rect x="719" y="789" width="10" height="10" fill="#c9f4ff"/><rect x="729" y="789" width="10" height="10" fill="#cff4ff"/><rect x="739" y="789" width="10" height="10" fill="#d5f3ff"/><rect x="749" y="789" width="10" height="10" fill="#dbf3ff"/><rect x="759" y="789" width="10" height="10" fill="#e2f3ff"/><rect x="769" y="789" width="10" height="10" fill="#e8f3ff"/><rect x="779" y="789" width="10" height="10" fill="#eef3ff"/><rect x="789" y="789" width="10" height="10" fill="#f4f3ff"/><rect x="799" y="789" width="10" height="10" fill="#fbf3ff"/><rect x="809" y="789" width="10" height="10" fill="#fff1fd"/><rect x="819" y="789" width="10" height="10" fill="#ffebf6"/><rect x="829" y="789" width="10" height="10" fill="#ffe5f0"/><rect x="839" y="789" width="10" height="10" fill="#ffdfeb"/><rect x="849" y="789" width="10" height="10" fill="#ffdae5"/><rect x="859" y="789" width="10" height="10" fill="#ffd5e0"/><rect x="869" y="789" width="10" height="10" fill="#ffd0da"/><rect x="879" y="789" width="10" height="10" fill="#ffcbd5"/><rect x="889" y="789" width="10" height="10" fill="#ffc6d1"/><rect x="899" y="789" width="10" height="10" fill="#ffc2cc"/><rect x="909" y="789" width="10" height="10" fill="#ffbdc7"/><rect x="919" y="789" width="10" height="10" fill="#ffb9c3"/><rect x="929" y="789" width="10" height="10" fill="#ffb5bf"/><rect x="939" y="789" width="10" height="10" fill="#ffb1bb"/><rect x="949" y="789" width="10" height="10" fill="#ffadb7"/><rect x="959" y="789" width="10" height="10" fill="#ffa9b3"/><rect x="969" y="789" width="10" height="10" fill="#ffa6af"/><rect x="639" y="799" width="10" height="10" fill="#9cedff"/><rect x="649" y="799" width="10" height="10" fill="#a2edff"/><rect x="659" y="799" width="10" height="10" fill="#a7edff"/><rect x="669" y="799" width="10" height="10" fill="#adedff"/><rect x="679" y="799" width="10" height="10" fill="#b3edff"/><rect x="689" y="799" width="10" height="10" fill="#b8edff"/><rect x="699" y="799" width="10" height="10" fill="#beedff"/><rect x="709" y="799" width="10" height="10" fill="#c4edff"/><rect x="719" y="799" width="10" height="10" fill="#c9edff"/><rect x="729" y="799" width="10" height="10" fill="#cfecff"/><rect x="739" y="799" width="10" height="10" fill="#d5ecff"/><rect x="749" y="799" width="10" height="10" fill="#dbecff"/><rect x="759" y="799" width="10" height="10" fill="#e1ecff"/><rect x="769" y="799" width="10" height="10" fill="#e8ecff"/><rect x="779" y="799" width="10" height="10" fill="#eeecff"/><rect x="789" y="799" width="10" height="10" fill="#f4ecff"/><rect x="799" y="799" width="10" height="10" fill="#faecff"/><rect x="809" y="799" width="10" height="10" fill="#ffeafd"/><rect x="819" y="799" width="10" height="10" fill="#ffe4f7"/><rect x="829" y="799" width="10" height="10" fill="#ffdef1"/><rect x="839" y="799" width="10" height="10" fill="#ffd9eb"/><rect x="849" y="799" width="10" height="10" fill="#ffd4e6"/><rect x="859" y="799" width="10" height="10" fill="#ffcfe0"/><rect x="869" y="799" width="10" height="10" fill="#ffcadb"/><rect x="879" y="799" width="10" height="10" fill="#ffc5d6"/><rect x="889" y="799" width="10" height="10" fill="#ffc1d1"/><rect x="899" y="799" width="10" height="10" fill="#ffbccd"/><rect x="909" y="799" width="10" height="10" fill="#ffb8c8"/><rect x="919" y="799" width="10" height="10" fill="#ffb4c4"/><rect x="929" y="799" width="10" height="10" fill="#ffb0c0"/><rect x="939" y="799" width="10" height="10" fill="#ffacbc"/><rect x="949" y="799" width="10" height="10" fill="#ffa8b8"/><rect x="959" y="799" width="10" height="10" fill="#ffa5b4"/><rect x="969" y="799" width="10" height="10" fill="#ffa1b0"/><rect x="639" y="809" width="10" height="10" fill="#9de7ff"/><rect x="649" y="809" width="10" height="10" fill="#a2e7ff"/><rect x="659" y="809" width="10" height="10" fill="#a8e7ff"/><rect x="669" y="809" width="10" height="10" fill="#ade6ff"/><rect x="679" y="809" width="10" height="10" fill="#b3e6ff"/><rect x="689" y="809" width="10" height="10" fill="#b8e6ff"/><rect x="699" y="809" width="10" height="10" fill="#bee6ff"/><rect x="709" y="809" width="10" height="10" fill="#c4e6ff"/><rect x="719" y="809" width="10" height="10" fill="#cae6ff"/><rect x="729" y="809" width="10" height="10" fill="#cfe6ff"/><rect x="739" y="809" width="10" height="10" fill="#d5e5ff"/><rect x="749" y="809" width="10" height="10" fill="#dbe5ff"/><rect x="759" y="809" width="10" height="10" fill="#e1e5ff"/><rect x="769" y="809" width="10" height="10" fill="#e7e5ff"/><rect x="779" y="809" width="10" height="10" fill="#ede5ff"/><rect x="789" y="809" width="10" height="10" fill="#f4e5ff"/><rect x="799" y="809" width="10" height="10" fill="#fae5ff"/><rect x="809" y="809" width="10" height="10" fill="#ffe3fe"/><rect x="819" y="809" width="10" height="10" fill="#ffdef8"/><rect x="829" y="809" width="10" height="10" fill="#ffd8f2"/><rect x="839" y="809" width="10" height="10" fill="#ffd3ec"/><rect x="849" y="809" width="10" height="10" fill="#ffcee6"/><rect x="859" y="809" width="10" height="10" fill="#ffc9e1"/><rect x="869" y="809" width="10" height="10" fill="#ffc4dc"/><rect x="879" y="809" width="10" height="10" fill="#ffc0d7"/><rect x="889" y="809" width="10" height="10" fill="#ffbbd2"/><rect x="899" y="809" width="10" height="10" fill="#ffb7ce"/><rect x="909" y="809" width="10" height="10" fill="#ffb3c9"/><rect x="919" y="809" width="10" height="10" fill="#ffafc5"/><rect x="929" y="809" width="10" height="10" fill="#ffabc1"/><rect x="939" y="809" width="10" height="10" fill="#ffa7bd"/><rect x="949" y="809" width="10" height="10" fill="#ffa4b9"/><rect x="959" y="809" width="10" height="10" fill="#ffa0b5"/><rect x="969" y="809" width="10" height="10" fill="#ff9db1"/><rect x="639" y="819" width="10" height="10" fill="#9ee0ff"/><rect x="649" y="819" width="10" height="10" fill="#a3e0ff"/><rect x="659" y="819" width="10" height="10" fill="#a8e0ff"/><rect x="669" y="819" width="10" height="10" fill="#aee0ff"/><rect x="679" y="819" width="10" height="10" fill="#b3e0ff"/><rect x="689" y="819" width="10" height="10" fill="#b9e0ff"/><rect x="699" y="819" width="10" height="10" fill="#bedfff"/><rect x="709" y="819" width="10" height="10" fill="#c4dfff"/><rect x="719" y="819" width="10" height="10" fill="#cadfff"/><rect x="729" y="819" width="10" height="10" fill="#cfdfff"/><rect x="739" y="819" width="10" height="10" fill="#d5dfff"/><rect x="749" y="819" width="10" height="10" fill="#dbdfff"/><rect x="759" y="819" width="10" height="10" fill="#e1deff"/><rect x="769" y="819" width="10" height="10" fill="#e7deff"/><rect x="779" y="819" width="10" height="10" fill="#eddeff"/><rect x="789" y="819" width="10" height="10" fill="#f3deff"/><rect x="799" y="819" width="10" height="10" fill="#f9deff"/><rect x="809" y="819" width="10" height="10" fill="#ffddfe"/><rect x="819" y="819" width="10" height="10" fill="#ffd7f8"/><rect x="829" y="819" width="10" height="10" fill="#ffd2f2"/><rect x="839" y="819" width="10" height="10" fill="#ffcded"/><rect x="849" y="819" width="10" height="10" fill="#ffc8e7"/><rect x="859" y="819" width="10" height="10" fill="#ffc3e2"/><rect x="869" y="819" width="10" height="10" fill="#ffbfdd"/><rect x="879" y="819" width="10" height="10" fill="#ffbad8"/><rect x="889" y="819" width="10" height="10" fill="#ffb6d3"/><rect x="899" y="819" width="10" height="10" fill="#ffb2ce"/><rect x="909" y="819" width="10" height="10" fill="#ffaeca"/><rect x="919" y="819" width="10" height="10" fill="#ffaac6"/><rect x="929" y="819" width="10" height="10" fill="#ffa6c2"/><rect x="939" y="819" width="10" height="10" fill="#ffa3bd"/><rect x="949" y="819" width="10" height="10" fill="#ff9fba"/><rect x="959" y="819" width="10" height="10" fill="#ff9cb6"/><rect x="969" y="819" width="10" height="10" fill="#ff98b2"/><rect x="639" y="829" width="10" height="10" fill="#9edaff"/><rect x="649" y="829" width="10" height="10" fill="#a3daff"/><rect x="659" y="829" width="10" height="10" fill="#a9daff"/><rect x="669" y="829" width="10" height="10" fill="#aedaff"/><rect x="679" y="829" width="10" height="10" fill="#b4d9ff"/><rect x="689" y="829" width="10" height="10" fill="#b9d9ff"/><rect x="699" y="829" width="10" height="10" fill="#bfd9ff"/><rect x="709" y="829" width="10" height="10" fill="#c4d9ff"/><rect x="719" y="829" width="10" height="10" fill="#cad9ff"/><rect x="729" y="829" width="10" height="10" fill="#cfd8ff"/><rect x="739" y="829" width="10" height="10" fill="#d5d8ff"/><rect x="749" y="829" width="10" height="10" fill="#dbd8ff"/><rect x="759" y="829" width="10" height="10" fill="#e1d8ff"/><rect x="769" y="829" width="10" height="10" fill="#e7d8ff"/><rect x="779" y="829" width="10" height="10" fill="#edd7ff"/><rect x="789" y="829" width="10" height="10" fill="#f3d7ff"/><rect x="799" y="829" width="10" height="10" fill="#f9d7ff"/><rect x="809" y="829" width="10" height="10" fill="#ffd7ff"/><rect x="819" y="829" width="10" height="10" fill="#ffd1f9"/><rect x="829" y="829" width="10" height="10" fill="#ffccf3"/><rect x="839" y="829" width="10" height="10" fill="#ffc7ed"/><rect x="849" y="829" width="10" height="10" fill="#ffc2e8"/><rect x="859" y="829" width="10" height="10" fill="#ffbee3"/><rect x="869" y="829" width="10" height="10" fill="#ffb9de"/><rect x="879" y="829" width="10" height="10" fill="#ffb5d9"/><rect x="889" y="829" width="10" height="10" fill="#ffb1d4"/><rect x="899" y="829" width="10" height="10" fill="#ffadcf"/><rect x="909" y="829" width="10" height="10" fill="#ffa9cb"/><rect x="919" y="829" width="10" height="10" fill="#ffa5c7"/><rect x="929" y="829" width="10" height="10" fill="#ffa2c2"/><rect x="939" y="829" width="10" height="10" fill="#ff9ebe"/><rect x="949" y="829" width="10" height="10" fill="#ff9bba"/><rect x="959" y="829" width="10" height="10" fill="#ff97b7"/><rect x="969" y="829" width="10" height="10" fill="#ff94b3"/><rect x="639" y="839" width="10" height="10" fill="#9fd4ff"/><rect x="649" y="839" width="10" height="10" fill="#a4d4ff"/><rect x="659" y="839" width="10" height="10" fill="#a9d4ff"/><rect x="669" y="839" width="10" height="10" fill="#aed3ff"/><rect x="679" y="839" width="10" height="10" fill="#b4d3ff"/><rect x="689" y="839" width="10" height="10" fill="#b9d3ff"/><rect x="699" y="839" width="10" height="10" fill="#bfd3ff"/><rect x="709" y="839" width="10" height="10" fill="#c4d2ff"/><rect x="719" y="839" width="10" height="10" fill="#cad2ff"/><rect x="729" y="839" width="10" height="10" fill="#cfd2ff"/><rect x="739" y="839" width="10" height="10" fill="#d5d2ff"/><rect x="749" y="839" width="10" height="10" fill="#dbd1ff"/><rect x="759" y="839" width="10" height="10" fill="#e1d1ff"/><rect x="769" y="839" width="10" height="10" fill="#e7d1ff"/><rect x="779" y="839" width="10" height="10" fill="#edd1ff"/><rect x="789" y="839" width="10" height="10" fill="#f2d1ff"/><rect x="799" y="839" width="10" height="10" fill="#f9d0ff"/><rect x="809" y="839" width="10" height="10" fill="#ffd0ff"/><rect x="819" y="839" width="10" height="10" fill="#ffcbf9"/><rect x="829" y="839" width="10" height="10" fill="#ffc6f4"/><rect x="839" y="839" width="10" height="10" fill="#ffc1ee"/><rect x="849" y="839" width="10" height="10" fill="#ffbde9"/><rect x="859" y="839" width="10" height="10" fill="#ffb8e3"/><rect x="869" y="839" width="10" height="10" fill="#ffb4de"/><rect x="879" y="839" width="10" height="10" fill="#ffb0d9"/><rect x="889" y="839" width="10" height="10" fill="#ffacd5"/><rect x="899" y="839" width="10" height="10" fill="#ffa8d0"/><rect x="909" y="839" width="10" height="10" fill="#ffa4cc"/><rect x="919" y="839" width="10" height="10" fill="#ffa0c7"/><rect x="929" y="839" width="10" height="10" fill="#ff9dc3"/><rect x="939" y="839" width="10" height="10" fill="#ff99bf"/><rect x="949" y="839" width="10" height="10" fill="#ff96bb"/><rect x="959" y="839" width="10" height="10" fill="#ff93b8"/><rect x="969" y="839" width="10" height="10" fill="#ff90b4"/><rect x="639" y="849" width="10" height="10" fill="#9fceff"/><rect x="649" y="849" width="10" height="10" fill="#a4ceff"/><rect x="659" y="849" width="10" height="10" fill="#aacdff"/><rect x="669" y="849" width="10" height="10" fill="#afcdff"/><rect x="679" y="849" width="10" height="10" fill="#b4cdff"/><rect x="689" y="849" width="10" height="10" fill="#bacdff"/><rect x="699" y="849" width="10" height="10" fill="#bfccff"/><rect x="709" y="849" width="10" height="10" fill="#c4ccff"/><rect x="719" y="849" width="10" height="10" fill="#caccff"/><rect x="729" y="849" width="10" height="10" fill="#d0ccff"/><rect x="739" y="849" width="10" height="10" fill="#d5cbff"/><rect x="749" y="849" width="10" height="10" fill="#dbcbff"/><rect x="759" y="849" width="10" height="10" fill="#e1cbff"/><rect x="769" y="849" width="10" height="10" fill="#e6cbff"/><rect x="779" y="849" width="10" height="10" fill="#eccaff"/><rect x="789" y="849" width="10" height="10" fill="#f2caff"/><rect x="799" y="849" width="10" height="10" fill="#f8caff"/><rect x="809" y="849" width="10" height="10" fill="#fec9ff"/><rect x="819" y="849" width="10" height="10" fill="#ffc5fa"/><rect x="829" y="849" width="10" height="10" fill="#ffc0f4"/><rect x="839" y="849" width="10" height="10" fill="#ffbcef"/><rect x="849" y="849" width="10" height="10" fill="#ffb7e9"/><rect x="859" y="849" width="10" height="10" fill="#ffb3e4"/><rect x="869" y="849" width="10" height="10" fill="#ffafdf"/><rect x="879" y="849" width="10" height="10" fill="#ffabda"/><rect x="889" y="849" width="10" height="10" fill="#ffa7d5"/><rect x="899" y="849" width="10" height="10" fill="#ffa3d1"/><rect x="909" y="849" width="10" height="10" fill="#ff9fcd"/><rect x="919" y="849" width="10" height="10" fill="#ff9cc8"/><rect x="929" y="849" width="10" height="10" fill="#ff98c4"/><rect x="939" y="849" width="10" height="10" fill="#ff95c0"/><rect x="949" y="849" width="10" height="10" fill="#ff92bc"/><rect x="959" y="849" width="10" height="10" fill="#ff8eb8"/><rect x="969" y="849" width="10" height="10" fill="#ff8bb5"/><rect x="639" y="859" width="10" height="10" fill="#a0c8ff"/><rect x="649" y="859" width="10" height="10" fill="#a5c8ff"/><rect x="659" y="859" width="10" height="10" fill="#aac7ff"/><rect x="669" y="859" width="10" height="10" fill="#afc7ff"/><rect x="679" y="859" width="10" height="10" fill="#b4c7ff"/><rect x="689" y="859" width="10" height="10" fill="#bac7ff"/><rect x="699" y="859" width="10" height="10" fill="#bfc6ff"/><rect x="709" y="859" width="10" height="10" fill="#c5c6ff"/><rect x="719" y="859" width="10" height="10" fill="#cac6ff"/><rect x="729" y="859" width="10" height="10" fill="#d0c6ff"/><rect x="739" y="859" width="10" height="10" fill="#d5c5ff"/><rect x="749" y="859" width="10" height="10" fill="#dbc5ff"/><rect x="759" y="859" width="10" height="10" fill="#e0c5ff"/><rect x="769" y="859" width="10" height="10" fill="#e6c4ff"/><rect x="779" y="859" width="10" height="10" fill="#ecc4ff"/><rect x="789" y="859" width="10" height="10" fill="#f2c4ff"/><rect x="799" y="859" width="10" height="10" fill="#f8c3ff"/><rect x="809" y="859" width="10" height="10" fill="#fec3ff"/><rect x="819" y="859" width="10" height="10" fill="#ffbffa"/><rect x="829" y="859" width="10" height="10" fill="#ffbbf5"/><rect x="839" y="859" width="10" height="10" fill="#ffb6ef"/><rect x="849" y="859" width="10" height="10" fill="#ffb2ea"/><rect x="859" y="859" width="10" height="10" fill="#ffaee5"/><rect x="869" y="859" width="10" height="10" fill="#ffa9e0"/><rect x="879" y="859" width="10" height="10" fill="#ffa6db"/><rect x="889" y="859" width="10" height="10" fill="#ffa2d6"/><rect x="899" y="859" width="10" height="10" fill="#ff9ed2"/><rect x="909" y="859" width="10" height="10" fill="#ff9bcd"/><rect x="919" y="859" width="10" height="10" fill="#ff97c9"/><rect x="929" y="859" width="10" height="10" fill="#ff94c5"/><rect x="939" y="859" width="10" height="10" fill="#ff90c1"/><rect x="949" y="859" width="10" height="10" fill="#ff8dbd"/><rect x="959" y="859" width="10" height="10" fill="#ff8ab9"/><rect x="969" y="859" width="10" height="10" fill="#ff87b6"/><rect x="639" y="869" width="10" height="7" fill="#a0c2ff"/><rect x="649" y="869" width="10" height="7" fill="#a5c2ff"/><rect x="659" y="869" width="10" height="7" fill="#aac2ff"/><rect x="669" y="869" width="10" height="7" fill="#b0c1ff"/><rect x="679" y="869" width="10" height="7" fill="#b5c1ff"/><rect x="689" y="869" width="10" height="7" fill="#bac1ff"/><rect x="699" y="869" width="10" height="7" fill="#bfc0ff"/><rect x="709" y="869" width="10" height="7" fill="#c5c0ff"/><rect x="719" y="869" width="10" height="7" fill="#cac0ff"/><rect x="729" y="869" width="10" height="7" fill="#d0bfff"/><rect x="739" y="869" width="10" height="7" fill="#d5bfff"/><rect x="749" y="869" width="10" height="7" fill="#dbbfff"/><rect x="759" y="869" width="10" height="7" fill="#e0bfff"/><rect x="769" y="869" width="10" height="7" fill="#e6beff"/><rect x="779" y="869" width="10" height="7" fill="#ecbeff"/><rect x="789" y="869" width="10" height="7" fill="#f1beff"/><rect x="799" y="869" width="10" height="7" fill="#f7bdff"/><rect x="809" y="869" width="10" height="7" fill="#fdbdff"/><rect x="819" y="869" width="10" height="7" fill="#ffbafb"/><rect x="829" y="869" width="10" height="7" fill="#ffb5f5"/><rect x="839" y="869" width="10" height="7" fill="#ffb1f0"/><rect x="849" y="869" width="10" height="7" fill="#ffacea"/><rect x="859" y="869" width="10" height="7" fill="#ffa8e5"/><rect x="869" y="869" width="10" height="7" fill="#ffa4e0"/><rect x="879" y="869" width="10" height="7" fill="#ffa1dc"/><rect x="889" y="869" width="10" height="7" fill="#ff9dd7"/><rect x="899" y="869" width="10" height="7" fill="#ff99d2"/><rect x="909" y="869" width="10" height="7" fill="#ff96ce"/><rect x="919" y="869" width="10" height="7" fill="#ff92ca"/><rect x="929" y="869" width="10" height="7" fill="#ff8fc6"/><rect x="939" y="869" width="10" height="7" fill="#ff8cc2"/><rect x="949" y="869" width="10" height="7" fill="#ff89be"/><rect x="959" y="869" width="10" height="7" fill="#ff86ba"/><rect x="969" y="869" width="10" height="7" fill="#ff83b7"/></g></svg>
<canvas id="c76" width="640" height="491" style="left:1020px;top:121px;width:640px;height:491px"></canvas>
<canvas id="c31" width="340" height="197" style="left:639px;top:679px;width:340px;height:197px"></canvas>
<svg width="1670" height="1007" viewBox="0 0 1670 1007" style="pointer-events:none"><rect x="1019.7" y="121" width="640.3" height="491" fill="none" stroke="#b0b0b0" stroke-width="1.3"/><line x1="1014.5" y1="612.1" x2="1019.7" y2="612.1" stroke="#bbb" stroke-width="1.3"/><text x="1013.3" y="617.7" font-size="13.5" fill="#d8d8d8" text-anchor="end" textLength="7.1" lengthAdjust="spacingAndGlyphs">0</text><line x1="1014.5" y1="571.2" x2="1019.7" y2="571.2" stroke="#bbb" stroke-width="1.3"/><text x="1013.3" y="576.7900000000001" font-size="13.5" fill="#d8d8d8" text-anchor="end" textLength="27.8" lengthAdjust="spacingAndGlyphs">0,05</text><line x1="1014.5" y1="530.3" x2="1019.7" y2="530.3" stroke="#bbb" stroke-width="1.3"/><text x="1013.3" y="535.88" font-size="13.5" fill="#d8d8d8" text-anchor="end" textLength="20.7" lengthAdjust="spacingAndGlyphs">0,1</text><line x1="1014.5" y1="489.4" x2="1019.7" y2="489.4" stroke="#bbb" stroke-width="1.3"/><text x="1013.3" y="494.97" font-size="13.5" fill="#d8d8d8" text-anchor="end" textLength="27.8" lengthAdjust="spacingAndGlyphs">0,15</text><line x1="1014.5" y1="448.5" x2="1019.7" y2="448.5" stroke="#bbb" stroke-width="1.3"/><text x="1013.3" y="454.06000000000006" font-size="13.5" fill="#d8d8d8" text-anchor="end" textLength="20.7" lengthAdjust="spacingAndGlyphs">0,2</text><line x1="1014.5" y1="407.6" x2="1019.7" y2="407.6" stroke="#bbb" stroke-width="1.3"/><text x="1013.3" y="413.15000000000003" font-size="13.5" fill="#d8d8d8" text-anchor="end" textLength="27.8" lengthAdjust="spacingAndGlyphs">0,25</text><line x1="1014.5" y1="366.6" x2="1019.7" y2="366.6" stroke="#bbb" stroke-width="1.3"/><text x="1013.3" y="372.24" font-size="13.5" fill="#d8d8d8" text-anchor="end" textLength="20.7" lengthAdjust="spacingAndGlyphs">0,3</text><line x1="1014.5" y1="325.7" x2="1019.7" y2="325.7" stroke="#bbb" stroke-width="1.3"/><text x="1013.3" y="331.33" font-size="13.5" fill="#d8d8d8" text-anchor="end" textLength="27.8" lengthAdjust="spacingAndGlyphs">0,35</text><line x1="1014.5" y1="284.8" x2="1019.7" y2="284.8" stroke="#bbb" stroke-width="1.3"/><text x="1013.3" y="290.42" font-size="13.5" fill="#d8d8d8" text-anchor="end" textLength="20.7" lengthAdjust="spacingAndGlyphs">0,4</text><line x1="1014.5" y1="243.9" x2="1019.7" y2="243.9" stroke="#bbb" stroke-width="1.3"/><text x="1013.3" y="249.50999999999996" font-size="13.5" fill="#d8d8d8" text-anchor="end" textLength="27.8" lengthAdjust="spacingAndGlyphs">0,45</text><line x1="1014.5" y1="203.0" x2="1019.7" y2="203.0" stroke="#bbb" stroke-width="1.3"/><text x="1013.3" y="208.6" font-size="13.5" fill="#d8d8d8" text-anchor="end" textLength="20.7" lengthAdjust="spacingAndGlyphs">0,5</text><line x1="1014.5" y1="162.1" x2="1019.7" y2="162.1" stroke="#bbb" stroke-width="1.3"/><text x="1013.3" y="167.68999999999997" font-size="13.5" fill="#d8d8d8" text-anchor="end" textLength="27.8" lengthAdjust="spacingAndGlyphs">0,55</text><line x1="1019.7" y1="612" x2="1019.7" y2="618.5" stroke="#bbb" stroke-width="1.5"/><text x="1019.7" y="633.8" font-size="13.5" fill="#d8d8d8" text-anchor="middle" textLength="7.1" lengthAdjust="spacingAndGlyphs">0</text><line x1="1073.0" y1="612" x2="1073.0" y2="618.5" stroke="#bbb" stroke-width="1.5"/><text x="1072.95" y="633.8" font-size="13.5" fill="#d8d8d8" text-anchor="middle" textLength="27.8" lengthAdjust="spacingAndGlyphs">0,05</text><line x1="1126.2" y1="612" x2="1126.2" y2="618.5" stroke="#bbb" stroke-width="1.5"/><text x="1126.2" y="633.8" font-size="13.5" fill="#d8d8d8" text-anchor="middle" textLength="20.7" lengthAdjust="spacingAndGlyphs">0,1</text><line x1="1179.5" y1="612" x2="1179.5" y2="618.5" stroke="#bbb" stroke-width="1.5"/><text x="1179.45" y="633.8" font-size="13.5" fill="#d8d8d8" text-anchor="middle" textLength="27.8" lengthAdjust="spacingAndGlyphs">0,15</text><line x1="1232.7" y1="612" x2="1232.7" y2="618.5" stroke="#bbb" stroke-width="1.5"/><text x="1232.7" y="633.8" font-size="13.5" fill="#d8d8d8" text-anchor="middle" textLength="20.7" lengthAdjust="spacingAndGlyphs">0,2</text><line x1="1286.0" y1="612" x2="1286.0" y2="618.5" stroke="#bbb" stroke-width="1.5"/><text x="1285.95" y="633.8" font-size="13.5" fill="#d8d8d8" text-anchor="middle" textLength="27.8" lengthAdjust="spacingAndGlyphs">0,25</text><line x1="1339.2" y1="612" x2="1339.2" y2="618.5" stroke="#bbb" stroke-width="1.5"/><text x="1339.2" y="633.8" font-size="13.5" fill="#d8d8d8" text-anchor="middle" textLength="20.7" lengthAdjust="spacingAndGlyphs">0,3</text><line x1="1392.5" y1="612" x2="1392.5" y2="618.5" stroke="#bbb" stroke-width="1.5"/><text x="1392.45" y="633.8" font-size="13.5" fill="#d8d8d8" text-anchor="middle" textLength="27.8" lengthAdjust="spacingAndGlyphs">0,35</text><line x1="1445.7" y1="612" x2="1445.7" y2="618.5" stroke="#bbb" stroke-width="1.5"/><text x="1445.7" y="633.8" font-size="13.5" fill="#d8d8d8" text-anchor="middle" textLength="20.7" lengthAdjust="spacingAndGlyphs">0,4</text><line x1="1499.0" y1="612" x2="1499.0" y2="618.5" stroke="#bbb" stroke-width="1.5"/><text x="1498.95" y="633.8" font-size="13.5" fill="#d8d8d8" text-anchor="middle" textLength="27.8" lengthAdjust="spacingAndGlyphs">0,45</text><line x1="1552.2" y1="612" x2="1552.2" y2="618.5" stroke="#bbb" stroke-width="1.5"/><text x="1552.2" y="633.8" font-size="13.5" fill="#d8d8d8" text-anchor="middle" textLength="20.7" lengthAdjust="spacingAndGlyphs">0,5</text><line x1="1605.5" y1="612" x2="1605.5" y2="618.5" stroke="#bbb" stroke-width="1.5"/><text x="1605.45" y="633.8" font-size="13.5" fill="#d8d8d8" text-anchor="middle" textLength="27.8" lengthAdjust="spacingAndGlyphs">0,55</text><text x="1322" y="116" font-size="14" fill="#d0d0d0" text-anchor="middle" textLength="84" lengthAdjust="spacingAndGlyphs">CIE 1976 u'v'</text><rect x="1403" y="581" width="253" height="27" fill="#2e2e2e"/><text x="1404.8" y="603" font-size="21" fill="#f4f4f4" textLength="155.5" lengthAdjust="spacingAndGlyphs">Gamut Coverage:</text><text x="1572" y="603" font-size="21" fill="#f4f4f4" textLength="65.5" lengthAdjust="spacingAndGlyphs">103,7%</text><rect x="1493.45" y="176.52" width="12.5" height="12.5" fill="none" stroke="#f0f0f0" stroke-width="1.8"/><rect x="1146.58" y="144.11" width="12.5" height="12.5" fill="none" stroke="#f0f0f0" stroke-width="1.8"/><rect x="1200.29" y="475.16" width="12.5" height="12.5" fill="none" stroke="#f0f0f0" stroke-width="1.8"/><rect x="1160.76" y="231.69" width="12.5" height="12.5" fill="none" stroke="#f0f0f0" stroke-width="1.8"/><rect x="1338.27" y="334.55" width="12.5" height="12.5" fill="none" stroke="#f0f0f0" stroke-width="1.8"/><rect x="1230.62" y="151.96" width="12.5" height="12.5" fill="none" stroke="#f0f0f0" stroke-width="1.8"/><rect x="1224.14" y="221.17" width="12.5" height="12.5" fill="none" stroke="#000" stroke-width="1.8"/><circle cx="1230.7" cy="227.6" r="4.1" fill="#ffffff" stroke="#000" stroke-width="1.1"/><circle cx="1507.2" cy="180.7" r="4.1" fill="#a00000" stroke="#000" stroke-width="1.1"/><circle cx="1152.4" cy="148.9" r="4.1" fill="#119911" stroke="#000" stroke-width="1.1"/><circle cx="1202.6" cy="486.4" r="4.1" fill="#101080" stroke="#000" stroke-width="1.1"/><circle cx="1166.4" cy="239.1" r="4.1" fill="#11aaaa" stroke="#000" stroke-width="1.1"/><circle cx="1343.8" cy="341.8" r="4.1" fill="#aa11aa" stroke="#000" stroke-width="1.1"/><circle cx="1238.4" cy="157.1" r="4.1" fill="#c8c020" stroke="#000" stroke-width="1.1"/><text x="16" y="714.4" font-size="29.5" fill="#f2f2f2" textLength="218.6" lengthAdjust="spacingAndGlyphs">Current Reading</text><text x="16" y="784" font-size="25" fill="#f2f2f2" textLength="102" lengthAdjust="spacingAndGlyphs">x: 0,3137</text><text x="172.5" y="784" font-size="25" fill="#f2f2f2" textLength="103.5" lengthAdjust="spacingAndGlyphs">y: 0,3286</text><text x="16" y="825" font-size="25" fill="#f2f2f2" textLength="110.5" lengthAdjust="spacingAndGlyphs">fL: 138,39</text><text x="16" y="865" font-size="25" fill="#f2f2f2" textLength="159" lengthAdjust="spacingAndGlyphs">cd/m²: 474,14</text><rect x="358.5" y="686.5" width="250.0" height="181.0" fill="#232323"/><line x1="353.5" y1="705.6" x2="608.5" y2="705.6" stroke="#8c8c8c" stroke-width="1.3"/><text x="352" y="710.6" font-size="13.5" fill="#d8d8d8" text-anchor="end">104</text><line x1="353.5" y1="741.7" x2="608.5" y2="741.7" stroke="#8c8c8c" stroke-width="1.3"/><text x="352" y="746.7" font-size="13.5" fill="#d8d8d8" text-anchor="end">102</text><line x1="353.5" y1="777.8000000000001" x2="608.5" y2="777.8000000000001" stroke="#8c8c8c" stroke-width="1.3"/><text x="352" y="782.8000000000001" font-size="13.5" fill="#d8d8d8" text-anchor="end">100</text><line x1="353.5" y1="813.9000000000001" x2="608.5" y2="813.9000000000001" stroke="#8c8c8c" stroke-width="1.3"/><text x="352" y="818.9000000000001" font-size="13.5" fill="#d8d8d8" text-anchor="end">98</text><line x1="353.5" y1="850.0" x2="608.5" y2="850.0" stroke="#8c8c8c" stroke-width="1.3"/><text x="352" y="855.0" font-size="13.5" fill="#d8d8d8" text-anchor="end">96</text><linearGradient id="gRB0" x1="0" y1="0" x2="0" y2="1"><stop offset="0" stop-color="#ff5c5c"/><stop offset="1" stop-color="#ff3a3a"/></linearGradient><rect x="383.3" y="768.4" width="65.19999999999999" height="99.10000000000002" fill="url(#gRB0)" stroke="#000" stroke-width="1.5"/><linearGradient id="gRB1" x1="0" y1="0" x2="0" y2="1"><stop offset="0" stop-color="#58aa58"/><stop offset="1" stop-color="#40a040"/></linearGradient><rect x="448.5" y="780.5" width="67.0" height="87.0" fill="url(#gRB1)" stroke="#000" stroke-width="1.5"/><linearGradient id="gRB2" x1="0" y1="0" x2="0" y2="1"><stop offset="0" stop-color="#5858ff"/><stop offset="1" stop-color="#3c3cff"/></linearGradient><rect x="515.5" y="777.7" width="66.10000000000002" height="89.79999999999995" fill="url(#gRB2)" stroke="#000" stroke-width="1.5"/><rect x="358.5" y="686.5" width="250.0" height="181.0" fill="none" stroke="#a0a0a0" stroke-width="1.5"/><line x1="358.5" y1="867.5" x2="358.5" y2="872.5" stroke="#bbb" stroke-width="1.5"/><line x1="608.5" y1="867.5" x2="608.5" y2="872.5" stroke="#bbb" stroke-width="1.5"/><text x="483.7" y="883.5" font-size="14" fill="#d8d8d8" text-anchor="middle" textLength="38" lengthAdjust="spacingAndGlyphs">100W</text><text x="468.4" y="682.6" font-size="14" fill="#d0d0d0" text-anchor="middle" textLength="82" lengthAdjust="spacingAndGlyphs">RGB Balance</text><rect x="638.5" y="678.5" width="341.5" height="198" fill="none" stroke="#8a8a8a" stroke-width="1.5"/><text x="808.8" y="672.4" font-size="14" fill="#d0d0d0" text-anchor="middle" textLength="75" lengthAdjust="spacingAndGlyphs">CIE 1931 xy</text><rect x="801" y="770" width="14" height="13.5" fill="none" stroke="#000" stroke-width="2"/><circle cx="808.3" cy="779.5" r="4" fill="#bbb" stroke="#000" stroke-width="1"/><circle cx="815" cy="777.9" r="4.6" fill="#fff" stroke="#000" stroke-width="1"/><rect x="996" y="662" width="653.5" height="225" fill="#000"/><rect x="997" y="663" width="634" height="17" fill="#353535"/><rect x="997" y="680" width="634" height="17" fill="#141414"/><svg x="997" y="663" width="634" height="204" overflow="hidden"><g transform="translate(-997,-663)"><rect x="997" y="697" width="634" height="31" fill="#3e3e3e"/><text x="1010.5" y="719.7" font-size="19.3" fill="#f2f2f2" font-weight="bold" textLength="63" lengthAdjust="spacingAndGlyphs" stroke="#f2f2f2" stroke-width="0.5">x: CIE31</text><text x="1095" y="719.7" font-size="19.3" fill="#f2f2f2" textLength="49.3" lengthAdjust="spacingAndGlyphs">0,3128</text><text x="1172.5" y="719.7" font-size="19.3" fill="#f2f2f2" textLength="49.3" lengthAdjust="spacingAndGlyphs">0,6498</text><text x="1241" y="719.7" font-size="19.3" fill="#f2f2f2" textLength="49.3" lengthAdjust="spacingAndGlyphs">0,3015</text><text x="1319" y="719.7" font-size="19.3" fill="#f2f2f2" textLength="49.3" lengthAdjust="spacingAndGlyphs">0,1458</text><text x="1387" y="719.7" font-size="19.3" fill="#f2f2f2" textLength="49.3" lengthAdjust="spacingAndGlyphs">0,2229</text><text x="1464.5" y="719.7" font-size="19.3" fill="#f2f2f2" textLength="49.3" lengthAdjust="spacingAndGlyphs">0,3196</text><text x="1535.6" y="719.7" font-size="19.3" fill="#f2f2f2" textLength="49.3" lengthAdjust="spacingAndGlyphs">0,4235</text><text x="1613" y="719.7" font-size="19.3" fill="#f2f2f2" textLength="22.4" lengthAdjust="spacingAndGlyphs">0,3</text><rect x="997" y="728" width="634" height="31" fill="#777777"/><text x="1010.5" y="750.7" font-size="19.3" fill="#f2f2f2" font-weight="bold" textLength="63" lengthAdjust="spacingAndGlyphs" stroke="#f2f2f2" stroke-width="0.5">y: CIE31</text><text x="1095" y="750.7" font-size="19.3" fill="#f2f2f2" textLength="49.3" lengthAdjust="spacingAndGlyphs">0,3285</text><text x="1172.5" y="750.7" font-size="19.3" fill="#f2f2f2" textLength="49.3" lengthAdjust="spacingAndGlyphs">0,3315</text><text x="1241" y="750.7" font-size="19.3" fill="#f2f2f2" textLength="49.3" lengthAdjust="spacingAndGlyphs">0,6070</text><text x="1319" y="750.7" font-size="19.3" fill="#f2f2f2" textLength="49.3" lengthAdjust="spacingAndGlyphs">0,0573</text><text x="1387" y="750.7" font-size="19.3" fill="#f2f2f2" textLength="49.3" lengthAdjust="spacingAndGlyphs">0,3265</text><text x="1464.5" y="750.7" font-size="19.3" fill="#f2f2f2" textLength="49.3" lengthAdjust="spacingAndGlyphs">0,1533</text><text x="1535.6" y="750.7" font-size="19.3" fill="#f2f2f2" textLength="49.3" lengthAdjust="spacingAndGlyphs">0,5081</text><text x="1613" y="750.7" font-size="19.3" fill="#f2f2f2" textLength="22.4" lengthAdjust="spacingAndGlyphs">0,3</text><rect x="997" y="759" width="634" height="31" fill="#3e3e3e"/><text x="1010.5" y="781.7" font-size="19.3" fill="#f2f2f2" font-weight="bold" textLength="9.5" lengthAdjust="spacingAndGlyphs" stroke="#f2f2f2" stroke-width="0.5">Y</text><text x="1095" y="781.7" font-size="19.3" fill="#f2f2f2" textLength="67.2" lengthAdjust="spacingAndGlyphs">261,7765</text><text x="1172.5" y="781.7" font-size="19.3" fill="#f2f2f2" textLength="58.3" lengthAdjust="spacingAndGlyphs">56,1556</text><text x="1241" y="781.7" font-size="19.3" fill="#f2f2f2" textLength="67.2" lengthAdjust="spacingAndGlyphs">189,1153</text><text x="1319" y="781.7" font-size="19.3" fill="#f2f2f2" textLength="58.3" lengthAdjust="spacingAndGlyphs">17,9474</text><text x="1387" y="781.7" font-size="19.3" fill="#f2f2f2" textLength="67.2" lengthAdjust="spacingAndGlyphs">204,2023</text><text x="1464.5" y="781.7" font-size="19.3" fill="#f2f2f2" textLength="58.3" lengthAdjust="spacingAndGlyphs">74,3825</text><text x="1535.6" y="781.7" font-size="19.3" fill="#f2f2f2" textLength="67.2" lengthAdjust="spacingAndGlyphs">247,2094</text><text x="1613" y="781.7" font-size="19.3" fill="#f2f2f2" textLength="17.9" lengthAdjust="spacingAndGlyphs">47</text><rect x="997" y="790" width="634" height="31" fill="#777777"/><text x="1010.5" y="812.7" font-size="19.3" fill="#f2f2f2" font-weight="bold" textLength="66" lengthAdjust="spacingAndGlyphs" stroke="#f2f2f2" stroke-width="0.5">Target Y</text><text x="1095" y="812.7" font-size="19.3" fill="#f2f2f2" textLength="67.2" lengthAdjust="spacingAndGlyphs">247,0274</text><text x="1172.5" y="812.7" font-size="19.3" fill="#f2f2f2" textLength="58.3" lengthAdjust="spacingAndGlyphs">52,5318</text><text x="1241" y="812.7" font-size="19.3" fill="#f2f2f2" textLength="67.2" lengthAdjust="spacingAndGlyphs">176,6637</text><text x="1319" y="812.7" font-size="19.3" fill="#f2f2f2" textLength="58.3" lengthAdjust="spacingAndGlyphs">17,8318</text><text x="1387" y="812.7" font-size="19.3" fill="#f2f2f2" textLength="67.2" lengthAdjust="spacingAndGlyphs">194,4955</text><text x="1464.5" y="812.7" font-size="19.3" fill="#f2f2f2" textLength="58.3" lengthAdjust="spacingAndGlyphs">70,3637</text><text x="1535.6" y="812.7" font-size="19.3" fill="#f2f2f2" textLength="67.2" lengthAdjust="spacingAndGlyphs">229,1955</text><text x="1613" y="812.7" font-size="19.3" fill="#f2f2f2" textLength="17.9" lengthAdjust="spacingAndGlyphs">47</text><rect x="997" y="821" width="634" height="31" fill="#3e3e3e"/><text x="1010.5" y="843.7" font-size="19.3" fill="#f2f2f2" font-weight="bold" textLength="66" lengthAdjust="spacingAndGlyphs" stroke="#f2f2f2" stroke-width="0.5">ΔE 2000</text><text x="1095" y="843.7" font-size="19.3" fill="#f2f2f2" textLength="49.3" lengthAdjust="spacingAndGlyphs">1,3513</text><text x="1172.5" y="843.7" font-size="19.3" fill="#f2f2f2" textLength="49.3" lengthAdjust="spacingAndGlyphs">2,5402</text><text x="1241" y="843.7" font-size="19.3" fill="#f2f2f2" textLength="49.3" lengthAdjust="spacingAndGlyphs">1,7826</text><text x="1319" y="843.7" font-size="19.3" fill="#f2f2f2" textLength="49.3" lengthAdjust="spacingAndGlyphs">0,6913</text><text x="1387" y="843.7" font-size="19.3" fill="#f2f2f2" textLength="49.3" lengthAdjust="spacingAndGlyphs">1,2373</text><text x="1464.5" y="843.7" font-size="19.3" fill="#f2f2f2" textLength="49.3" lengthAdjust="spacingAndGlyphs">1,1843</text><text x="1535.6" y="843.7" font-size="19.3" fill="#f2f2f2" textLength="49.3" lengthAdjust="spacingAndGlyphs">2,0430</text><text x="1613" y="843.7" font-size="19.3" fill="#f2f2f2" textLength="22.4" lengthAdjust="spacingAndGlyphs">1,0</text><rect x="997" y="852" width="634" height="31" fill="#777777"/><text x="1010.5" y="874.7" font-size="19.3" fill="#f2f2f2" font-weight="bold" textLength="53" lengthAdjust="spacingAndGlyphs" stroke="#f2f2f2" stroke-width="0.5">ΔE ITP</text><text x="1095" y="874.7" font-size="19.3" fill="#f2f2f2" textLength="49.3" lengthAdjust="spacingAndGlyphs">4,4338</text><text x="1172.5" y="874.7" font-size="19.3" fill="#f2f2f2" textLength="58.3" lengthAdjust="spacingAndGlyphs">11,7853</text><text x="1241" y="874.7" font-size="19.3" fill="#f2f2f2" textLength="49.3" lengthAdjust="spacingAndGlyphs">6,5051</text><text x="1319" y="874.7" font-size="19.3" fill="#f2f2f2" textLength="58.3" lengthAdjust="spacingAndGlyphs">11,2633</text><text x="1387" y="874.7" font-size="19.3" fill="#f2f2f2" textLength="49.3" lengthAdjust="spacingAndGlyphs">3,9234</text><text x="1464.5" y="874.7" font-size="19.3" fill="#f2f2f2" textLength="49.3" lengthAdjust="spacingAndGlyphs">4,9922</text><text x="1535.6" y="874.7" font-size="19.3" fill="#f2f2f2" textLength="49.3" lengthAdjust="spacingAndGlyphs">7,9933</text><text x="1613" y="874.7" font-size="19.3" fill="#f2f2f2" textLength="22.4" lengthAdjust="spacingAndGlyphs">0,9</text><text x="1129" y="686.7" font-size="17.5" fill="#f2f2f2" text-anchor="middle" textLength="42" lengthAdjust="spacingAndGlyphs">White</text><text x="1202" y="686.7" font-size="17.5" fill="#f2f2f2" text-anchor="middle" textLength="26.5" lengthAdjust="spacingAndGlyphs">Red</text><text x="1275" y="686.7" font-size="17.5" fill="#f2f2f2" text-anchor="middle" textLength="42.3" lengthAdjust="spacingAndGlyphs">Green</text><text x="1348" y="686.7" font-size="17.5" fill="#f2f2f2" text-anchor="middle" textLength="30.5" lengthAdjust="spacingAndGlyphs">Blue</text><text x="1421" y="686.7" font-size="17.5" fill="#f2f2f2" text-anchor="middle" textLength="34" lengthAdjust="spacingAndGlyphs">Cyan</text><text x="1496" y="686.7" font-size="17.5" fill="#f2f2f2" text-anchor="middle" textLength="61.5" lengthAdjust="spacingAndGlyphs">Magenta</text><text x="1570" y="686.7" font-size="17.5" fill="#f2f2f2" text-anchor="middle" textLength="44.8" lengthAdjust="spacingAndGlyphs">Yellow</text><text x="1628" y="687" font-size="18" fill="#f2f2f2">1</text></g></svg><rect x="1631" y="663" width="18" height="34" fill="#2a2a2a"/><rect x="1631" y="697" width="17.5" height="170" fill="#5a5a5a"/><rect x="1633" y="699" width="14" height="15" rx="3" fill="#6a6a6a" stroke="#7a7a7a"/><path d="M1635,710 L1640,704 L1645,710 Z" fill="#3a3a3a"/><rect x="1633.5" y="718" width="12.5" height="106.5" rx="6" fill="#474747"/><rect x="1633" y="850" width="14" height="15" rx="3" fill="#6a6a6a" stroke="#7a7a7a"/><path d="M1635,854 L1645,854 L1640,860 Z" fill="#3a3a3a"/><rect x="997" y="867" width="634" height="19.5" fill="#5a5a5a"/><rect x="998" y="869" width="14" height="15" rx="3" fill="#6a6a6a" stroke="#7a7a7a"/><path d="M1008,872 L1002,876.5 L1008,881 Z" fill="#3a3a3a"/><rect x="1006" y="869.5" width="557" height="14" rx="7" fill="#4a4a4a"/><rect x="1631" y="867" width="17.5" height="19.5" fill="#333"/><rect x="1615" y="869" width="14" height="15" rx="3" fill="#6a6a6a" stroke="#7a7a7a"/><path d="M1619,872 L1625,876.5 L1619,881 Z" fill="#3a3a3a"/><rect x="1664.5" y="38" width="5.5" height="892" fill="url(#gRS)"/><rect x="2.2" y="930.8" width="155.6" height="80" rx="5" fill="url(#gBtn)"/><rect x="8.2" y="937" width="143.5" height="45" rx="4" fill="#c0c0c0" stroke="rgba(0,0,0,0.25)" stroke-width="1"/><text x="80.2" y="1000.5" font-size="14" fill="#222" text-anchor="middle" font-weight="bold">White</text><rect x="160.1" y="930.8" width="155.6" height="80" rx="5" fill="url(#gBtn)"/><rect x="166.1" y="937" width="143.5" height="45" rx="4" fill="#c00000" stroke="rgba(0,0,0,0.25)" stroke-width="1"/><text x="238.1" y="1000.5" font-size="14" fill="#222" text-anchor="middle" font-weight="bold">Red</text><rect x="318.0" y="930.8" width="155.6" height="80" rx="5" fill="url(#gBtn)"/><rect x="324.0" y="937" width="143.5" height="45" rx="4" fill="#00c000" stroke="rgba(0,0,0,0.25)" stroke-width="1"/><text x="396.0" y="1000.5" font-size="14" fill="#222" text-anchor="middle" font-weight="bold">Green</text><rect x="475.90000000000003" y="930.8" width="155.6" height="80" rx="5" fill="url(#gBtn)"/><rect x="481.90000000000003" y="937" width="143.5" height="45" rx="4" fill="#0000c0" stroke="rgba(0,0,0,0.25)" stroke-width="1"/><text x="553.9000000000001" y="1000.5" font-size="14" fill="#222" text-anchor="middle" font-weight="bold">Blue</text><rect x="633.8000000000001" y="930.8" width="155.6" height="80" rx="5" fill="url(#gBtn)"/><rect x="639.8000000000001" y="937" width="143.5" height="45" rx="4" fill="#00c0c0" stroke="rgba(0,0,0,0.25)" stroke-width="1"/><text x="711.8000000000001" y="1000.5" font-size="14" fill="#222" text-anchor="middle" font-weight="bold">Cyan</text><rect x="791.7" y="930.8" width="155.6" height="80" rx="5" fill="url(#gBtn)"/><rect x="797.7" y="937" width="143.5" height="45" rx="4" fill="#c000c0" stroke="rgba(0,0,0,0.25)" stroke-width="1"/><text x="869.7" y="1000.5" font-size="14" fill="#222" text-anchor="middle" font-weight="bold">Magenta</text><rect x="949.6000000000001" y="930.8" width="155.6" height="80" rx="5" fill="url(#gBtn)"/><rect x="955.6000000000001" y="937" width="143.5" height="45" rx="4" fill="#c0c000" stroke="rgba(0,0,0,0.25)" stroke-width="1"/><text x="1027.6000000000001" y="1000.5" font-size="14" fill="#222" text-anchor="middle" font-weight="bold">Yellow</text><rect x="1107.5" y="930.8" width="155.6" height="80" rx="5" fill="url(#gSel)"/><rect x="1114.0" y="936.6" width="143" height="45.2" rx="4" fill="#fff"/><text x="1185.5" y="1000.5" font-size="14" fill="#fff" text-anchor="middle" font-weight="bold">100W</text><rect x="2" y="928.5" width="1662" height="1.5" fill="#2c2c2c"/><rect x="1264" y="930" width="3" height="77" fill="#1e1e1e"/><rect x="1267.2" y="930.5" width="60" height="90" rx="5" fill="url(#gCtl)"/><line x1="1267" y1="953.5" x2="1327" y2="953.5" stroke="#333" stroke-width="1"/><circle cx="1297.5" cy="941.5" r="9" fill="url(#gDDl)"/><path d="M1292,945 H1303 L1297.5,939 Z" fill="#333"/><rect x="1278.5" y="961.5" width="37" height="37" rx="6" fill="#b0b0b0" stroke="#222" stroke-width="2.2"/><rect x="1289" y="972" width="17" height="17" fill="#111"/><rect x="1328" y="930" width="283" height="38" fill="url(#gCtl)"/><line x1="1386.5" y1="930" x2="1386.5" y2="968" stroke="#333" stroke-width="1"/><line x1="1442" y1="930" x2="1442" y2="968" stroke="#333" stroke-width="1"/><line x1="1498" y1="930" x2="1498" y2="968" stroke="#333" stroke-width="1"/><line x1="1555.5" y1="930" x2="1555.5" y2="968" stroke="#333" stroke-width="1"/><circle cx="1357" cy="948.5" r="12" fill="url(#gDDl)"/><circle cx="1414" cy="948.5" r="12" fill="url(#gDDl)"/><circle cx="1470" cy="948.5" r="12" fill="url(#gDDl)"/><circle cx="1526.5" cy="948.5" r="12" fill="url(#gDDl)"/><circle cx="1583" cy="948.5" r="12" fill="url(#gDDl)"/><rect x="1352" y="943.5" width="10" height="10" fill="#333"/><path d="M1410.5,942 L1420,948.5 L1410.5,955 Z" fill="#333"/><text x="1470" y="954" font-size="12" fill="#333" text-anchor="middle" font-weight="bold">[↔]</text><text x="1526.5" y="955.5" font-size="20" fill="#333" text-anchor="middle" font-weight="bold">∞</text><path d="M1577.5,946 A6,6 0 0 1 1588,944 M1588.5,951 A6,6 0 0 1 1578,953" fill="none" stroke="#333" stroke-width="2.5"/><path d="M1589,940 L1590,947 L1584,946 Z M1577,957 L1576,950 L1582,951 Z" fill="#333"/><rect x="1328" y="969" width="342" height="40" fill="url(#gCtl)"/><line x1="1498.5" y1="969" x2="1498.5" y2="1007" stroke="#333" stroke-width="1"/><circle cx="1366" cy="988" r="12" fill="url(#gDDl)"/><circle cx="1633" cy="988" r="12" fill="url(#gDDl)"/><path d="M1366,982.5 L1361,988 L1366,993.5 M1372,982.5 L1367,988 L1372,993.5" fill="none" stroke="#3a3a3a" stroke-width="2.2"/><path d="M1629,982.5 L1634,988 L1629,993.5 M1635,982.5 L1640,988 L1635,993.5" fill="none" stroke="#3a3a3a" stroke-width="2.2"/><text x="1400.5" y="998" font-size="27.5" fill="#333" textLength="63.5" lengthAdjust="spacingAndGlyphs" stroke="#333" stroke-width="0.7">Back</text><text x="1534" y="998" font-size="27.5" fill="#333" textLength="64" lengthAdjust="spacingAndGlyphs" stroke="#333" stroke-width="0.7">Next</text><rect x="1664.5" y="930" width="5.5" height="77" fill="url(#gRS)"/><g transform="translate(1638.3,947.4)" stroke="#e00808" stroke-width="7" stroke-linecap="round"><line x1="0" y1="0" x2="0" y2="-13.2" transform="rotate(0)"/><line x1="0" y1="0" x2="0" y2="-13.2" transform="rotate(60)"/><line x1="0" y1="0" x2="0" y2="-13.2" transform="rotate(120)"/><line x1="0" y1="0" x2="0" y2="-13.2" transform="rotate(180)"/><line x1="0" y1="0" x2="0" y2="-13.2" transform="rotate(240)"/><line x1="0" y1="0" x2="0" y2="-13.2" transform="rotate(300)"/></g></svg>
<script>
(function(){
var L=[[0.1741,0.0050],[0.1738,0.0049],[0.1733,0.0048],[0.1726,0.0048],[0.1714,0.0051],[0.1703,0.0058],[0.1689,0.0069],[0.1669,0.0086],[0.1644,0.0109],[0.1611,0.0138],[0.1566,0.0177],[0.1510,0.0227],[0.1440,0.0297],[0.1355,0.0399],[0.1241,0.0578],[0.1096,0.0868],[0.0913,0.1327],[0.0687,0.2007],[0.0454,0.2950],[0.0235,0.4127],[0.0082,0.5384],[0.0039,0.6548],[0.0139,0.7502],[0.0389,0.8120],[0.0743,0.8338],[0.1142,0.8262],[0.1547,0.8059],[0.1929,0.7816],[0.2296,0.7543],[0.2658,0.7243],[0.3016,0.6923],[0.3373,0.6589],[0.3731,0.6245],[0.4087,0.5896],[0.4441,0.5547],[0.4788,0.5202],[0.5125,0.4866],[0.5448,0.4544],[0.5752,0.4242],[0.6029,0.3965],[0.6270,0.3725],[0.6482,0.3514],[0.6658,0.3340],[0.6801,0.3197],[0.6915,0.3083],[0.7006,0.2993],[0.7079,0.2920],[0.7140,0.2859],[0.7190,0.2809],[0.7260,0.2740],[0.7300,0.2700],[0.7347,0.2653]];
function xy2rgb(x,y){
  var X=x/y, Y=1, Z=(1-x-y)/y;
  return [3.2406*X-1.5372*Y-0.4986*Z, -0.9689*X+1.8758*Y+0.0415*Z, 0.0557*X-0.2040*Y+1.0570*Z];
}
function uv2xy(u,v){var d=6*u-16*v+12; return [9*u/d,4*v/d];}
function xy2uv(x,y){var d=-2*x+12*y+3; return [4*x/d,9*y/d];}
var PR=xy2uv(0.64,0.33), PG=xy2uv(0.30,0.60), PB=xy2uv(0.15,0.06);
function cross(ax,ay,bx,by){return ax*by-ay*bx;}
function nearestSeg(px,py,a,b){
  var dx=b[0]-a[0], dy=b[1]-a[1];
  var t=((px-a[0])*dx+(py-a[1])*dy)/(dx*dx+dy*dy);
  t=Math.max(0,Math.min(1,t));
  var qx=a[0]+t*dx, qy=a[1]+t*dy;
  return [qx,qy,(px-qx)*(px-qx)+(py-qy)*(py-qy)];
}
var SX=1065.0, SY=818.2, VY=612.1;
// ---- CIE 1976 ----
var cv=document.getElementById('c76'); if(!cv||!cv.getContext) return;
var ctx=cv.getContext('2d');
var W=cv.width,H=cv.height, OX=1020, OY=121;
function U(u){return 1019.7+u*SX-OX;}
function V(v){return VY-v*SY-OY;}
// smooth path (catmull-rom)
var pts=[];
for(var i=0;i<L.length;i++){var q=xy2uv(L[i][0],L[i][1]); pts.push([U(q[0]),V(q[1])]);}
ctx.beginPath();
ctx.moveTo(pts[0][0],pts[0][1]);
for(var i=0;i<pts.length-1;i++){
  var p0=pts[Math.max(0,i-1)],p1=pts[i],p2=pts[i+1],p3=pts[Math.min(pts.length-1,i+2)];
  ctx.bezierCurveTo(p1[0]+(p2[0]-p0[0])/6,p1[1]+(p2[1]-p0[1])/6,p2[0]-(p3[0]-p1[0])/6,p2[1]-(p3[1]-p1[1])/6,p2[0],p2[1]);
}
ctx.closePath();
var img=ctx.createImageData(W,H), D=img.data;
// screen-space triangle
var sR=[U(PR[0]),V(PR[1])-1.5], sG=[U(PG[0]),V(PG[1])-1.5], sB=[U(PB[0]),V(PB[1])-1.5];
for(var py=0;py<H;py++){
  for(var px=0;px<W;px++){
    var X=px+0.5, Y=py+0.5;
    var c1=cross(sG[0]-sR[0],sG[1]-sR[1],X-sR[0],Y-sR[1]);
    var c2=cross(sB[0]-sG[0],sB[1]-sG[1],X-sG[0],Y-sG[1]);
    var c3=cross(sR[0]-sB[0],sR[1]-sB[1],X-sB[0],Y-sB[1]);
    var inside=(c1<=0&&c2<=0&&c3<=0)||(c1>=0&&c2>=0&&c3>=0);
    var k=1.0;
    if(!inside){
      var n1=nearestSeg(X,Y,sR,sG), n2=nearestSeg(X,Y,sG,sB), n3=nearestSeg(X,Y,sB,sR);
      var n=n1; if(n2[2]<n[2]) n=n2; if(n3[2]<n[2]) n=n3;
      X=n[0];Y=n[1]; k=0.62;
    }
    var u=(X+OX-1019.7)/SX, v=(VY-1.5-(Y+OY))/SY;
    var xy=uv2xy(u,v);
    if(xy[1]<=0.0001) continue;
    var c=xy2rgb(xy[0],xy[1]);
    var r=Math.max(c[0],0),g=Math.max(c[1],0),b=Math.max(c[2],0);
    var m=Math.max(r,g,b); if(m<=0) continue;
    var o=(py*W+px)*4;
    D[o]=r/m*255*k; D[o+1]=g/m*255*k; D[o+2]=b/m*255*k; D[o+3]=255;
  }
}
var off=document.createElement('canvas'); off.width=W; off.height=H;
off.getContext('2d').putImageData(img,0,0);
ctx.save(); ctx.clip(); ctx.drawImage(off,0,0); ctx.restore();
var f76=document.getElementById('fb76'); if(f76) f76.style.display='none';
// ---- CIE 1931 small ----
var cc=document.getElementById('c31'); if(!cc) return;
var x2=cc.getContext('2d'), W2=cc.width, H2=cc.height;
var im2=x2.createImageData(W2,H2), E=im2.data;
var xc=0.3127, yc=0.3290, sx=window.SX31||0.00018, sy=window.SY31||0.00032, pw=window.PW31||1.0;
for(var py=0;py<H2;py++){
  for(var px=0;px<W2;px++){
    var x=xc+(px-170)*sx, y=yc-(py-99)*sy;
    var c=xy2rgb(x,y);
    var r=Math.max(c[0],0),g=Math.max(c[1],0),b=Math.max(c[2],0);
    var m=Math.max(r,g,b);
    r=Math.pow(r/m,pw);g=Math.pow(g/m,pw);b=Math.pow(b/m,pw);
    var o=(py*W2+px)*4;
    E[o]=r*255;E[o+1]=g*255;E[o+2]=b*255;E[o+3]=255;
  }
}
x2.putImageData(im2,0,0);
var f31=document.getElementById('fb31'); if(f31) f31.style.display='none';
})();

</script>
</body></html>
